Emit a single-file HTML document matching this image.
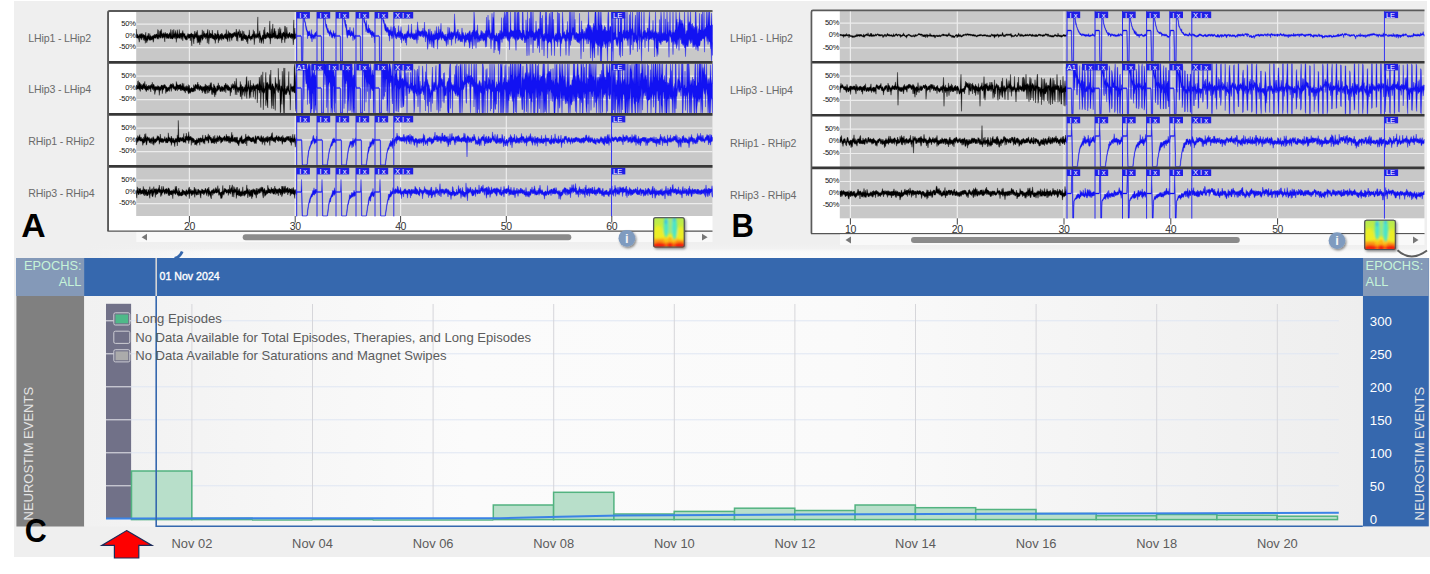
<!DOCTYPE html>
<html><head><meta charset="utf-8"><title>ECoG</title>
<style>
html,body{margin:0;padding:0;background:#fff;}
body{width:1430px;height:574px;position:relative;overflow:hidden;font-family:"Liberation Sans",sans-serif;}
#bg{position:absolute;left:14px;top:1px;width:1413px;height:257px;background:#efefef;}
#bg2{position:absolute;left:14px;top:258px;width:1415.5px;height:299px;background:#efefef;}
#strip{position:absolute;left:14px;top:244px;width:1413px;height:14px;background:linear-gradient(to bottom,#efefef 0%,#f1f1f1 30%,#f9f9f9 55%,#fbfbfb 100%);}
#stripl{position:absolute;left:14px;top:244px;width:200px;height:14px;background:linear-gradient(to right,#efefef 0%,#efefef 35%,rgba(239,239,239,0) 100%);}
svg{position:absolute;left:0;top:0;}
.kb{fill:#000;stroke:#000;stroke-width:0.35;stroke-linejoin:round}
.bl{fill:#1212f2;stroke:#1212f2;stroke-width:0.35;stroke-linejoin:round}
.ml{stroke:#2a2af0;stroke-width:1}
.gl{stroke:#ececec;stroke-width:1.2}
.dv{stroke:#383838;stroke-width:2.6}
.mb{fill:#1f1fe6}
.mt{font-size:7.5px;fill:#fff;font-family:"Liberation Sans",sans-serif}
.yl{font-size:7.5px;fill:#111;font-family:"Liberation Sans",sans-serif;letter-spacing:-0.25px}
.tl{font-size:10.5px;fill:#333;font-family:"Liberation Sans",sans-serif;letter-spacing:-0.4px}
.ch{font-size:10.6px;fill:#6a6a6a;font-family:"Liberation Sans",sans-serif;letter-spacing:-0.15px}
.lg{font-size:13.1px;fill:#5c5c5c;font-family:"Liberation Sans",sans-serif}
.xl{font-size:12.9px;fill:#5c5c5c;font-family:"Liberation Sans",sans-serif}
.big{font-size:33.5px;font-weight:bold;fill:#000;font-family:"Liberation Sans",sans-serif}
.ep{font-size:12.8px;fill:#c6f3d8;font-family:"Liberation Sans",sans-serif}
.ax{font-size:13.2px;fill:#fff;font-family:"Liberation Sans",sans-serif}
.ne{font-size:13px;fill:#e4e4e4;font-family:"Liberation Sans",sans-serif}
.dt{font-size:10.6px;fill:#fff;stroke:#fff;stroke-width:0.35px;font-family:"Liberation Sans",sans-serif}
</style></head><body>
<div id="bg"></div><div id="bg2"></div><div id="strip"></div><div id="stripl"></div>
<svg width="1430" height="574" viewBox="0 0 1430 574">
<defs>
<linearGradient id="sp" x1="0" y1="0" x2="0" y2="1"><stop offset="0" stop-color="#b2ea52"/><stop offset="0.4" stop-color="#cfee38"/><stop offset="0.62" stop-color="#f4ec20"/><stop offset="0.8" stop-color="#fbb818"/><stop offset="0.93" stop-color="#f66410"/><stop offset="1" stop-color="#f0a018"/></linearGradient>
<linearGradient id="sp2" x1="0" y1="0" x2="0" y2="1"><stop offset="0" stop-color="#4fe0c8"/><stop offset="0.5" stop-color="#7fe89a" stop-opacity="0.9"/><stop offset="0.8" stop-color="#f6e61e" stop-opacity="0"/></linearGradient>
<clipPath id="spc"><rect x="654" y="218" width="30" height="29" rx="1.8"/></clipPath>
<filter id="bl" x="-20%" y="-20%" width="140%" height="140%"><feGaussianBlur stdDeviation="1.1"/></filter>
<filter id="sh" x="-30%" y="-30%" width="170%" height="170%"><feDropShadow dx="1.2" dy="1.5" stdDeviation="1" flood-color="#000" flood-opacity="0.45"/></filter>
</defs>
<!-- panel A -->
<rect x="108" y="11" width="604.5" height="220" fill="#fff"/>
<rect x="136.2" y="11" width="576.3" height="205" fill="#c8c8c8"/>
<path d="M136.3,24.2H712.5" class="gl"/>
<path d="M136.3,35.9H712.5" class="gl"/>
<path d="M136.3,47.6H712.5" class="gl"/>
<path d="M136.3,76.2H712.5" class="gl"/>
<path d="M136.3,87.9H712.5" class="gl"/>
<path d="M136.3,99.6H712.5" class="gl"/>
<path d="M136.3,128.2H712.5" class="gl"/>
<path d="M136.3,139.9H712.5" class="gl"/>
<path d="M136.3,151.6H712.5" class="gl"/>
<path d="M136.3,180.2H712.5" class="gl"/>
<path d="M136.3,191.9H712.5" class="gl"/>
<path d="M136.3,203.6H712.5" class="gl"/>
<path d="M189.4,11V216" class="gl"/>
<path d="M295.2,11V216" class="gl"/>
<path d="M400.6,11V216" class="gl"/>
<path d="M506.3,11V216" class="gl"/>
<path d="M611.8,11V216" class="gl"/>
<path d="M136.3,29.1L136.8,34.5L137.3,34.8L137.8,33.9L138.3,35.5L138.8,35.9L139.3,34.9L139.8,33.9L140.3,33.8L140.8,35.1L141.3,33.4L141.8,34.3L142.3,33.4L142.8,35.3L143.3,34.5L143.8,34.6L144.3,35.1L144.8,35.3L145.3,35.7L145.8,32.2L146.3,37.9L146.8,35.7L147.3,36.1L147.8,35.2L148.3,33.1L148.8,35.3L149.3,37.1L149.8,33.4L150.3,36.6L150.8,35.3L151.3,36.7L151.8,36.4L152.3,35.5L152.8,36.2L153.3,35.4L153.8,34.9L154.3,35.3L154.8,34L155.3,34.9L155.8,34.4L156.3,34L156.8,34.1L157.3,35.2L157.8,29.5L158.3,30.2L158.8,35.3L159.3,34.6L159.8,31.1L160.3,30.5L160.8,32.1L161.3,29.2L161.8,33L162.3,34.3L162.8,33.4L163.3,33.7L163.8,32.6L164.3,34.3L164.8,33.5L165.3,32.2L165.8,34L166.3,33.7L166.8,33.9L167.3,33.1L167.8,34.2L168.3,34.3L168.8,34.4L169.3,33.6L169.8,32.6L170.3,34L170.8,29.3L171.3,32.4L171.8,36.1L172.3,29.9L172.8,35.7L173.3,33.3L173.8,29.3L174.3,34.1L174.8,33.4L175.3,30.4L175.8,33.1L176.3,34.4L176.8,33.1L177.3,29.7L177.8,33.3L178.3,34.4L178.8,34.3L179.3,29.4L179.8,34.5L180.3,33L180.8,33.5L181.3,33.7L181.8,32.8L182.3,33L182.8,30.5L183.3,32.9L183.8,33.5L184.3,34.1L184.8,33.4L185.3,35.8L185.8,35.8L186.3,36.7L186.8,35.2L187.3,35.5L187.8,33.6L188.3,33.8L188.8,34.5L189.3,33.9L189.8,34.6L190.3,33.9L190.8,34L191.3,32.8L191.8,34.1L192.3,34.3L192.8,34L193.3,34L193.8,35.6L194.3,34.3L194.8,31L195.3,34.5L195.8,33.2L196.3,31.7L196.8,34.3L197.3,30.2L197.8,35.2L198.3,35.9L198.8,34.7L199.3,36.5L199.8,35L200.3,35.5L200.8,34.7L201.3,35.1L201.8,34.6L202.3,29.8L202.8,35.4L203.3,33.6L203.8,30.8L204.3,33.3L204.8,33.2L205.3,33.8L205.8,34.8L206.3,33L206.8,34.3L207.3,31.6L207.8,29.3L208.3,35L208.8,35.2L209.3,30.2L209.8,34.5L210.3,32.9L210.8,33.5L211.3,34.1L211.8,34.1L212.3,30L212.8,34.3L213.3,34.7L213.8,35.2L214.3,35.8L214.8,33L215.3,34.2L215.8,33.6L216.3,35.3L216.8,34.6L217.3,33.6L217.8,30.1L218.3,33.7L218.8,34.1L219.3,36.1L219.8,35.3L220.3,33.9L220.8,34.4L221.3,34.5L221.8,33L222.3,33.9L222.8,34.8L223.3,35.1L223.8,36.2L224.3,34.4L224.8,34L225.3,33.6L225.8,34.2L226.3,29.5L226.8,34.7L227.3,34.2L227.8,34.1L228.3,30.7L228.8,34.5L229.3,32.9L229.8,32.4L230.3,33.7L230.8,33.1L231.3,34L231.8,33.9L232.3,33.9L232.8,33.1L233.3,33.6L233.8,32.5L234.3,32.7L234.8,31.9L235.3,33.4L235.8,32.1L236.3,29L236.8,32.7L237.3,33.4L237.8,31.6L238.3,31.9L238.8,31.4L239.3,29.4L239.8,34.9L240.3,30.9L240.8,33.8L241.3,33.8L241.8,34.1L242.3,30.5L242.8,36.4L243.3,34.8L243.8,31.1L244.3,34.1L244.8,34.3L245.3,34.8L245.8,35.3L246.3,35L246.8,36L247.3,36.9L247.8,35.5L248.3,35.1L248.8,35.1L249.3,29.9L249.8,35L250.3,36.2L250.8,36.4L251.3,35.8L251.8,35.8L252.3,33.9L252.8,35.2L253.3,29.7L253.8,34.6L254.3,31.1L254.8,34.4L255.3,33.7L255.8,35.3L256.3,35.2L256.8,33.5L257.3,34.6L257.8,16.9L258.3,34.3L258.8,33.4L259.3,32.8L259.8,30.7L260.3,34.5L260.8,35.6L261.3,37.7L261.8,38.1L262.3,35.2L262.8,34.9L263.3,35.1L263.8,29.7L264.3,33.7L264.8,27L265.3,34.8L265.8,34.4L266.3,34.9L266.8,32.8L267.3,32.3L267.8,32.2L268.3,33.8L268.8,33.3L269.3,33.8L269.8,20.9L270.3,31.1L270.8,34.1L271.3,34.5L271.8,28.8L272.3,34.4L272.8,23.9L273.3,32.9L273.8,33L274.3,28.6L274.8,28.5L275.3,34.8L275.8,30.9L276.3,34.8L276.8,35.4L277.3,35.1L277.8,34.8L278.3,28.8L278.8,33.8L279.3,32.8L279.8,27.3L280.3,32.6L280.8,28.7L281.3,35.9L281.8,33L282.3,33.4L282.8,33.2L283.3,31.8L283.8,32.3L284.3,33.3L284.8,25.9L285.3,26.5L285.8,34L286.3,32.2L286.8,27.2L287.3,32.3L287.8,34.2L288.3,34L288.8,33.7L289.3,32.6L289.8,32.3L290.3,34.2L290.8,34.7L291.3,33.7L291.8,33.3L292.3,34.2L292.8,33.8L293.3,34.2L293.8,19.9L294.3,35.4L294.8,28L295.3,35L295.8,33.8L295.8,38L295.3,38.6L294.8,39.4L294.3,39.1L293.8,37.3L293.3,44.9L292.8,39.1L292.3,38L291.8,37.1L291.3,38.8L290.8,37.6L290.3,38.2L289.8,36.6L289.3,37L288.8,37.5L288.3,38.4L287.8,38.3L287.3,36.9L286.8,36L286.3,38.9L285.8,38.6L285.3,38.5L284.8,42.8L284.3,37L283.8,36.8L283.3,35.7L282.8,39.9L282.3,38L281.8,43.1L281.3,38.4L280.8,37.8L280.3,38.2L279.8,39.1L279.3,37.3L278.8,38.3L278.3,38.4L277.8,38.8L277.3,39.3L276.8,38.4L276.3,38.2L275.8,37.6L275.3,38.6L274.8,38.7L274.3,36.8L273.8,37.6L273.3,36.9L272.8,37.6L272.3,38.3L271.8,38.3L271.3,37.7L270.8,38.3L270.3,44.1L269.8,38L269.3,38.6L268.8,37.1L268.3,37.4L267.8,38L267.3,36.3L266.8,37.5L266.3,38.4L265.8,38.8L265.3,39.1L264.8,38.5L264.3,38.2L263.8,39.2L263.3,43.8L262.8,39.2L262.3,39.9L261.8,42L261.3,43.5L260.8,40.1L260.3,39L259.8,42.9L259.3,36.9L258.8,36.6L258.3,38.5L257.8,37.4L257.3,37.3L256.8,37.6L256.3,38L255.8,38.5L255.3,37L254.8,37.9L254.3,44.7L253.8,38.9L253.3,36.4L252.8,37.5L252.3,39.2L251.8,38.9L251.3,39.1L250.8,40.6L250.3,38.8L249.8,38.5L249.3,38.8L248.8,38L248.3,38.4L247.8,43.9L247.3,39.6L246.8,42.1L246.3,39.2L245.8,39.5L245.3,39.4L244.8,38.8L244.3,38.9L243.8,38.1L243.3,40.2L242.8,41L242.3,39L241.8,40.2L241.3,41.1L240.8,37.8L240.3,37L239.8,37.6L239.3,37.4L238.8,34.3L238.3,35.9L237.8,41.5L237.3,37L236.8,41L236.3,37.2L235.8,35.7L235.3,37.1L234.8,36L234.3,35.6L233.8,37L233.3,36.8L232.8,37.9L232.3,37.5L231.8,40.6L231.3,38L230.8,37.8L230.3,36.6L229.8,41.6L229.3,37.7L228.8,37.8L228.3,37.8L227.8,41.8L227.3,40.3L226.8,39.2L226.3,38.7L225.8,38.2L225.3,38.6L224.8,37.7L224.3,37.6L223.8,39.5L223.3,38.9L222.8,38.4L222.3,38.5L221.8,40.5L221.3,38.6L220.8,38.2L220.3,39.4L219.8,38.6L219.3,40.6L218.8,39.6L218.3,43.1L217.8,38.1L217.3,38.2L216.8,39.2L216.3,39.5L215.8,38.3L215.3,43.5L214.8,39L214.3,40.3L213.8,38.9L213.3,38.9L212.8,38.5L212.3,38.5L211.8,38.4L211.3,37.3L210.8,37.7L210.3,38.2L209.8,37.4L209.3,39L208.8,44.2L208.3,38.1L207.8,37.8L207.3,43.2L206.8,37.3L206.3,37.9L205.8,39.3L205.3,37.1L204.8,37.5L204.3,37.6L203.8,36.3L203.3,38.7L202.8,39.3L202.3,40.4L201.8,37.7L201.3,38.8L200.8,42.6L200.3,39.7L199.8,44.9L199.3,41L198.8,42.3L198.3,42.8L197.8,39.3L197.3,43.2L196.8,38.6L196.3,37.4L195.8,36.9L195.3,37.5L194.8,38.9L194.3,38.1L193.8,43.9L193.3,39.2L192.8,37.6L192.3,37.3L191.8,45.9L191.3,36.8L190.8,37.4L190.3,40.9L189.8,38L189.3,38.1L188.8,37.8L188.3,38.7L187.8,36.5L187.3,39.8L186.8,39.6L186.3,40.3L185.8,39.4L185.3,39.4L184.8,38.5L184.3,37.7L183.8,36.2L183.3,37L182.8,40.9L182.3,37.5L181.8,37L181.3,39.5L180.8,36.4L180.3,38.3L179.8,38.5L179.3,37.9L178.8,38.3L178.3,37.1L177.8,38.4L177.3,38.1L176.8,37.2L176.3,42.4L175.8,36.3L175.3,38.8L174.8,38.5L174.3,37L173.8,37.4L173.3,38.1L172.8,39L172.3,39L171.8,38.9L171.3,37.8L170.8,39L170.3,38.2L169.8,36.4L169.3,38.3L168.8,38.8L168.3,38.1L167.8,38.4L167.3,37.7L166.8,38.7L166.3,37.2L165.8,37.6L165.3,36.3L164.8,41.9L164.3,37.4L163.8,36.8L163.3,37.8L162.8,37.4L162.3,38.4L161.8,37.7L161.3,35.7L160.8,38.3L160.3,38L159.8,36.9L159.3,37.4L158.8,39.3L158.3,37.3L157.8,38.4L157.3,39.3L156.8,37.5L156.3,37.3L155.8,38.6L155.3,38L154.8,37.9L154.3,37.9L153.8,39.6L153.3,42.3L152.8,40.1L152.3,39.1L151.8,40.1L151.3,39.8L150.8,39.7L150.3,40.5L149.8,39.4L149.3,40.4L148.8,39L148.3,38.7L147.8,40.4L147.3,40.9L146.8,42.8L146.3,40.8L145.8,39.5L145.3,43.4L144.8,38.3L144.3,40.8L143.8,36.9L143.3,40.2L142.8,37.9L142.3,37.5L141.8,38.2L141.3,40.1L140.8,37.9L140.3,38.3L139.8,37L139.3,42.2L138.8,39.8L138.3,37.8L137.8,38.2L137.3,38.1L136.8,37.9L136.3,37.5Z" class="kb"/>
<path d="M296,33.6L296.5,35.1L297,35.4L297.5,35.4L298,35.4L298.5,35.4L299,35.4L299.5,35.4L300,35.4L300.5,35.4L301,35.4L301.5,36.4L302,60.9L302.5,60.9L303,12L303.5,12L304,12L304.5,17.3L305,20.7L305.5,22.3L306,25.3L306.5,26.9L307,29.5L307.5,30.6L308,31.6L308.5,31.7L309,31.6L309.5,30.7L310,32.7L310.5,34.2L311,34.7L311.5,29.5L312,35.7L312.5,34L313,34.4L313.5,35.3L314,34.9L314.5,33.9L315,32.7L315.5,32.5L316,32.6L316.5,31L317,35.4L317.5,35.4L318,35.4L318.5,35.4L319,35.4L319.5,35.4L320,35.4L320.5,35.4L321,35.4L321.5,36.4L322,60.9L322.5,60.9L323,60.9L323.5,12L324,12L324.5,13.2L325,17.6L325.5,20.7L326,24L326.5,24.1L327,26.1L327.5,29.1L328,28.3L328.5,30.7L329,30.5L329.5,31.9L330,32L330.5,29.7L331,31.8L331.5,32.6L332,32.9L332.5,35L333,33.3L333.5,30.5L334,32.9L334.5,33.8L335,33.2L335.5,32.8L336,35.4L336.5,35.4L337,35.4L337.5,35.4L338,35.4L338.5,35.4L339,35.4L339.5,35.4L340,35.4L340.5,36.4L341,60.9L341.5,60.9L342,60.9L342.5,12L343,12L343.5,13L344,16.7L344.5,19.4L345,22.3L345.5,20L346,25.5L346.5,24.3L347,29L347.5,30.9L348,30.2L348.5,30.1L349,29.9L349.5,30.7L350,27.1L350.5,32.5L351,32.4L351.5,30.7L352,31.1L352.5,32.8L353,32.7L353.5,27.6L354,33.3L354.5,36.4L355,35L355.5,34.9L356,35.4L356.5,35.4L357,35.4L357.5,35.4L358,35.4L358.5,35.4L359,35.4L359.5,35.4L360,35.4L360.5,36.4L361,60.9L361.5,60.9L362,60.9L362.5,12L363,12L363.5,13.2L364,17.4L364.5,19.4L365,21.7L365.5,22.4L366,24.9L366.5,20.4L367,27.2L367.5,29.8L368,28.4L368.5,24.6L369,30.1L369.5,28L370,29.3L370.5,30.9L371,30L371.5,32.2L372,31.6L372.5,31.2L373,31.5L373.5,32.7L374,33.1L374.5,32.4L375,35.4L375.5,35.4L376,35.4L376.5,35.4L377,35.4L377.5,35.4L378,35.4L378.5,35.4L379,35.4L379.5,36.4L380,60.9L380.5,60.9L381,60.9L381.5,12L382,12L382.5,13.6L383,17.7L383.5,19.9L384,20.1L384.5,22.8L385,25.8L385.5,23.6L386,25.3L386.5,26.9L387,28.7L387.5,27.2L388,27.2L388.5,29.3L389,29.9L389.5,30.6L390,29.4L390.5,31.6L391,26.5L391.5,32L392,30.8L392.5,31.7L393,26.9L393.5,26.5L394,26.7L394.5,26.3L395,32.1L395.5,28L396,33.9L396.5,34.2L397,32.4L397.5,32.6L398,31.7L398.5,25.6L399,32.9L399.5,31.8L400,30.6L400.5,32.2L401,26.5L401.5,31.7L402,33.6L402.5,33.1L403,34.5L403.5,36.7L404,34.2L404.5,34.3L405,33.7L405.5,34.7L406,33.4L406.5,34.1L407,31.7L407.5,30.7L408,32.7L408.5,24.7L409,32.5L409.5,33.7L410,34L410.5,33.7L411,31.8L411.5,23.9L412,33.6L412.5,34.3L413,32.7L413.5,34.2L414,34.6L414.5,33.5L415,33.7L415.5,33.5L416,29.7L416.5,33.4L417,31.9L417.5,21.8L418,26.9L418.5,30.8L419,30.4L419.5,31.5L420,31.6L420.5,32.1L421,31L421.5,31.8L422,30.4L422.5,31.3L423,28L423.5,32.3L424,30.6L424.5,22L425,32.7L425.5,30.6L426,30.9L426.5,32.1L427,32.3L427.5,34.9L428,34.3L428.5,29.3L429,29.5L429.5,34.7L430,28.7L430.5,35.9L431,33.8L431.5,31.1L432,33.4L432.5,35L433,35.4L433.5,33.6L434,34.7L434.5,34.7L435,30.4L435.5,33.4L436,33.5L436.5,26.5L437,32.9L437.5,33L438,34L438.5,26.4L439,32.2L439.5,32.6L440,29L440.5,31.2L441,23.2L441.5,34.3L442,31.6L442.5,31.7L443,32.7L443.5,33.8L444,35.3L444.5,34.6L445,36.5L445.5,34.1L446,36.5L446.5,36.9L447,33.8L447.5,34.8L448,26.9L448.5,34.2L449,32.1L449.5,27.6L450,33.5L450.5,33.4L451,31.6L451.5,31.8L452,32.7L452.5,32.4L453,33.3L453.5,32.3L454,30.4L454.5,13.8L455,22L455.5,31.6L456,33.9L456.5,32.1L457,31.7L457.5,30.7L458,29.1L458.5,32.6L459,34.7L459.5,32.2L460,35.3L460.5,34.3L461,36.2L461.5,34.1L462,27.9L462.5,33.4L463,32.2L463.5,33.5L464,35.3L464.5,35.4L465,35.8L465.5,32.5L466,35L466.5,35.1L467,33.8L467.5,32.8L468,34.3L468.5,33.3L469,31.8L469.5,31.2L470,30.5L470.5,33.8L471,35.6L471.5,33.1L472,32.1L472.5,32.1L473,30L473.5,30.2L474,12L474.5,18.1L475,30.1L475.5,32.6L476,31L476.5,30.2L477,32.2L477.5,24.8L478,33L478.5,34L479,36.7L479.5,35.2L480,35.1L480.5,34.4L481,30.3L481.5,31.1L482,33.5L482.5,31.4L483,35L483.5,32.9L484,32.9L484.5,33.6L485,34.2L485.5,30.6L486,32.3L486.5,17.1L487,30.1L487.5,30.8L488,15.1L488.5,29.8L489,19.8L489.5,29L490,30.7L490.5,34.5L491,32.7L491.5,32.5L492,13.3L492.5,31.3L493,17.2L493.5,19.2L494,12L494.5,34.7L495,34.9L495.5,36.1L496,35.2L496.5,32.9L497,34.4L497.5,36.5L498,35.5L498.5,33L499,33.5L499.5,33.5L500,30.3L500.5,30.9L501,35.1L501.5,17.6L502,31.3L502.5,31.7L503,33.6L503.5,18.8L504,16.9L504.5,12L505,30L505.5,16.2L506,12L506.5,12L507,32.8L507.5,12L508,12L508.5,33.5L509,31.5L509.5,33.1L510,31.8L510.5,12L511,29.1L511.5,30.5L512,30.3L512.5,31.3L513,30.7L513.5,30.7L514,31.5L514.5,12L515,32.1L515.5,12L516,30.8L516.5,29.3L517,12L517.5,13L518,31.3L518.5,12L519,12L519.5,29.7L520,29.9L520.5,31.2L521,32.8L521.5,33.2L522,33.1L522.5,12L523,12L523.5,29.7L524,30.2L524.5,33.8L525,35L525.5,35.9L526,19.8L526.5,31.2L527,29.8L527.5,12L528,32.3L528.5,31.6L529,31.2L529.5,18.3L530,31.9L530.5,12L531,32.4L531.5,12L532,30.5L532.5,31.2L533,12L533.5,32.7L534,32.3L534.5,34.3L535,31.8L535.5,32.4L536,20.9L536.5,30.6L537,30.4L537.5,32.3L538,29.7L538.5,28.6L539,29.1L539.5,28.7L540,12L540.5,12L541,29.8L541.5,18.1L542,31.8L542.5,15.3L543,35.9L543.5,34.6L544,33.7L544.5,33.4L545,36L545.5,12L546,19.8L546.5,12L547,33.2L547.5,34.6L548,24.6L548.5,34.4L549,16.9L549.5,13.3L550,36.6L550.5,21.3L551,12L551.5,35.2L552,12L552.5,12L553,32.3L553.5,19.3L554,34.2L554.5,37.7L555,34.7L555.5,35.2L556,32.9L556.5,34.3L557,34.1L557.5,12L558,33.2L558.5,12.8L559,34.7L559.5,13.3L560,32.8L560.5,33.6L561,35.9L561.5,37.6L562,34.6L562.5,12L563,20.3L563.5,32.9L564,32.3L564.5,31.5L565,34.7L565.5,34.6L566,35.1L566.5,29.7L567,34.1L567.5,21.4L568,31.6L568.5,33.2L569,31.9L569.5,12L570,31.3L570.5,12L571,32.1L571.5,33.2L572,12L572.5,29.4L573,27.1L573.5,28.4L574,12L574.5,30.9L575,19.3L575.5,34.7L576,32.3L576.5,32.5L577,33.6L577.5,33.6L578,33.7L578.5,33.9L579,33L579.5,13.2L580,32.6L580.5,32L581,34.4L581.5,20.8L582,32.5L582.5,29.1L583,29.7L583.5,33L584,33.8L584.5,31.2L585,34L585.5,31.5L586,27.5L586.5,28.6L587,29.7L587.5,24.6L588,25.8L588.5,12L589,24.6L589.5,25.1L590,27.5L590.5,25.5L591,29.2L591.5,30.4L592,27.3L592.5,33L593,28.8L593.5,23.3L594,26.2L594.5,25L595,12L595.5,12L596,12L596.5,24.6L597,30.6L597.5,29.6L598,12L598.5,12L599,24.5L599.5,25.9L600,12L600.5,29L601,12L601.5,25.2L602,24.8L602.5,30.4L603,30.8L603.5,29.2L604,29.2L604.5,25.5L605,27.6L605.5,27L606,31.9L606.5,30.3L607,31.3L607.5,30.5L608,12.4L608.5,12L609,30.4L609.5,30.3L610,26.3L610.5,26.4L611,27.1L611.5,29.7L612,30L612.5,12L613,33.2L613.5,31.9L614,12L614.5,33.1L615,31.4L615.5,14.7L616,32.5L616.5,38.5L617,37.1L617.5,38.6L618,18.2L618.5,12L619,31.5L619.5,32.1L620,32.1L620.5,15.1L621,12L621.5,12L622,34.2L622.5,34.1L623,30.8L623.5,29.8L624,32.8L624.5,12L625,12L625.5,33L626,30.3L626.5,30.9L627,12L627.5,31.6L628,29.8L628.5,32.3L629,31.7L629.5,14.6L630,30.7L630.5,12L631,30.9L631.5,28.8L632,29.1L632.5,12L633,28L633.5,32.3L634,33.4L634.5,32L635,19.4L635.5,15.1L636,35.7L636.5,34.1L637,12L637.5,37.3L638,12L638.5,31.7L639,12L639.5,12L640,28.3L640.5,31.1L641,35.1L641.5,12L642,36.8L642.5,34.9L643,31.6L643.5,31.5L644,12L644.5,31.1L645,30.1L645.5,31.3L646,32.9L646.5,32.5L647,32.4L647.5,28.1L648,28L648.5,32L649,17.9L649.5,12L650,32L650.5,31.1L651,30.3L651.5,33.1L652,29.5L652.5,32.5L653,20.3L653.5,31.9L654,33.2L654.5,31.5L655,31.9L655.5,12L656,30.7L656.5,32.7L657,32.9L657.5,34.5L658,31.8L658.5,32.8L659,34.4L659.5,19.5L660,36.6L660.5,22.6L661,12L661.5,18.9L662,34.7L662.5,32.7L663,34L663.5,31.4L664,12L664.5,33.8L665,31L665.5,18.9L666,33.9L666.5,34.3L667,12L667.5,30.9L668,21.8L668.5,33.8L669,30.8L669.5,29.2L670,12L670.5,31.5L671,30.4L671.5,35.2L672,32L672.5,33.4L673,12L673.5,32.7L674,31.8L674.5,33.2L675,30.2L675.5,28.9L676,12L676.5,21.9L677,19L677.5,30.6L678,22L678.5,27.6L679,22.7L679.5,12.2L680,21.2L680.5,19.5L681,24.4L681.5,21L682,20.1L682.5,23.7L683,23.3L683.5,26.3L684,29.1L684.5,12L685,27.2L685.5,34.3L686,33.7L686.5,30.9L687,30.3L687.5,30.4L688,12L688.5,24.9L689,21.5L689.5,21.9L690,23.4L690.5,12L691,28.2L691.5,23.9L692,26.3L692.5,23.2L693,28.9L693.5,26L694,30.1L694.5,27.2L695,28.7L695.5,12L696,12L696.5,29.1L697,26.1L697.5,32.7L698,33.7L698.5,29.4L699,27.9L699.5,13.3L700,30L700.5,30L701,30L701.5,14.1L702,31.6L702.5,12L703,30.9L703.5,28.7L704,12L704.5,29.6L705,29.1L705.5,27.5L706,26.8L706.5,12L707,26.6L707.5,23.7L708,12L708.5,23L709,12L709.5,12L710,26.1L710.5,25.4L711,24.7L711.5,13.2L712,25.2L712.5,24.9L712.5,55.4L712,42.5L711.5,60.9L711,48.6L710.5,48.6L710,42L709.5,41.2L709,42.3L708.5,38.2L708,44.6L707.5,37.4L707,41.5L706.5,37.4L706,36.1L705.5,36.5L705,38L704.5,52.2L704,39.2L703.5,38.8L703,38.5L702.5,38.7L702,39.4L701.5,40.7L701,40.9L700.5,39.9L700,44.8L699.5,46L699,46L698.5,45.4L698,51.1L697.5,47.3L697,47.1L696.5,45.2L696,49.7L695.5,44.8L695,44.6L694.5,45.9L694,46.9L693.5,44.3L693,47.6L692.5,43.3L692,39.1L691.5,42.8L691,40.1L690.5,43.8L690,41L689.5,40L689,39.1L688.5,43.1L688,46.8L687.5,44.9L687,47.1L686.5,44.4L686,46.1L685.5,56.7L685,45.7L684.5,47.9L684,42.9L683.5,45.2L683,45.5L682.5,43.9L682,43L681.5,43.7L681,37.8L680.5,40.2L680,37.2L679.5,39.6L679,50.5L678.5,40.4L678,39.1L677.5,44L677,46.1L676.5,48.6L676,42.1L675.5,44.4L675,41.9L674.5,40.4L674,44.7L673.5,40L673,54.7L672.5,41.8L672,41.6L671.5,42.5L671,38.5L670.5,36.6L670,37.1L669.5,35.2L669,57.3L668.5,40.6L668,41.1L667.5,42L667,41.6L666.5,43.1L666,41.1L665.5,40.2L665,39.9L664.5,40.5L664,41L663.5,40.4L663,39.4L662.5,41.6L662,41.8L661.5,40.2L661,44.8L660.5,43L660,42.7L659.5,42.7L659,40.7L658.5,41L658,54.6L657.5,50.4L657,56.5L656.5,48.4L656,48.2L655.5,38L655,38.8L654.5,57L654,40.1L653.5,40.3L653,38L652.5,37L652,40L651.5,38.3L651,38.3L650.5,39L650,39.5L649.5,39.3L649,40L648.5,51.7L648,35.3L647.5,38.7L647,38.2L646.5,41.1L646,38L645.5,37.3L645,48.1L644.5,36.8L644,39.7L643.5,39.2L643,38.2L642.5,40L642,43.3L641.5,60.9L641,42.7L640.5,38.5L640,36.5L639.5,49.3L639,34.9L638.5,40.3L638,40.1L637.5,51.8L637,43.7L636.5,43.1L636,41.4L635.5,39.4L635,38.9L634.5,42.2L634,41.8L633.5,41.2L633,50.1L632.5,36.2L632,34.2L631.5,45.1L631,37.4L630.5,52.8L630,54.9L629.5,36.9L629,39.5L628.5,37.7L628,45.8L627.5,39.6L627,40.8L626.5,38.2L626,38.4L625.5,38.2L625,37.9L624.5,40.4L624,37.6L623.5,37.4L623,39L622.5,56L622,42.5L621.5,41.9L621,41L620.5,57.3L620,42.1L619.5,55.4L619,39.1L618.5,40.9L618,43.8L617.5,46.5L617,42.2L616.5,45.4L616,41.5L615.5,38.7L615,39.5L614.5,39.3L614,40.2L613.5,40.6L613,60.9L612.5,38.4L612,51.5L611.5,42.1L611,40.7L610.5,43.4L610,41.2L609.5,40.9L609,46.9L608.5,41.9L608,41.7L607.5,60.9L607,48.6L606.5,43.3L606,43.7L605.5,48.3L605,44.2L604.5,44.2L604,41L603.5,41.9L603,47.7L602.5,45.6L602,46.3L601.5,60.9L601,60.9L600.5,60.9L600,42.9L599.5,46.6L599,46.2L598.5,44.8L598,55.5L597.5,44.3L597,45.2L596.5,42.7L596,43.6L595.5,40.6L595,44.2L594.5,57.9L594,53.4L593.5,46.2L593,48.4L592.5,60.9L592,52.3L591.5,44.7L591,41.9L590.5,58.2L590,42.6L589.5,40.1L589,39.8L588.5,43.9L588,38.8L587.5,38.4L587,44.1L586.5,39.7L586,39.3L585.5,38.6L585,40.6L584.5,37.3L584,39.7L583.5,51.9L583,38.4L582.5,38.6L582,38.8L581.5,41.5L581,59L580.5,41.2L580,39.9L579.5,43.5L579,41L578.5,42.6L578,42.7L577.5,41.8L577,41.8L576.5,40.6L576,37.7L575.5,40.1L575,39.6L574.5,37.3L574,39.6L573.5,35.8L573,34.6L572.5,35.4L572,38L571.5,40.8L571,39.1L570.5,45.5L570,39.2L569.5,45.1L569,55.8L568.5,41.6L568,38L567.5,38.8L567,41.4L566.5,39.5L566,55.3L565.5,42L565,41L564.5,39.6L564,37.4L563.5,38.1L563,39.1L562.5,38.1L562,40.7L561.5,43.7L561,42.6L560.5,56.3L560,41.1L559.5,38.8L559,42.3L558.5,38.7L558,40.5L557.5,46.8L557,39.9L556.5,42L556,39.9L555.5,40.7L555,40.4L554.5,55.8L554,43.4L553.5,39.7L553,37.5L552.5,39.4L552,38.7L551.5,55.5L551,44.2L550.5,42.2L550,42L549.5,41.3L549,42L548.5,43.2L548,42.5L547.5,58.2L547,40.7L546.5,40.8L546,38.1L545.5,38.9L545,41L544.5,41.5L544,56.1L543.5,41.3L543,41.5L542.5,39.6L542,49.8L541.5,37.3L541,37.8L540.5,38.9L540,33.6L539.5,52.7L539,41.6L538.5,46.2L538,43.7L537.5,48.3L537,36.8L536.5,38.7L536,38.1L535.5,40.7L535,39.7L534.5,40.8L534,40.4L533.5,39.8L533,53L532.5,36.8L532,37.5L531.5,37.6L531,44.7L530.5,36.3L530,37.7L529.5,35.5L529,55.5L528.5,39.2L528,38.6L527.5,39L527,55.9L526.5,43.1L526,38.8L525.5,42.8L525,39.6L524.5,43L524,37.8L523.5,36.9L523,38.6L522.5,40.7L522,39.5L521.5,40.2L521,37.5L520.5,38.8L520,36.2L519.5,37.8L519,38.9L518.5,39.6L518,38.9L517.5,40.5L517,38.7L516.5,37.2L516,50.4L515.5,41.3L515,39.1L514.5,39.3L514,37.5L513.5,37.3L513,38.8L512.5,36.2L512,36.6L511.5,37.2L511,36.1L510.5,38.4L510,38.9L509.5,49.8L509,37.9L508.5,41.4L508,39.9L507.5,40.3L507,38.3L506.5,35.7L506,38.6L505.5,36.8L505,36.2L504.5,36.1L504,39.1L503.5,36.8L503,39.2L502.5,37.7L502,42.7L501.5,38.5L501,39.9L500.5,38.2L500,50.1L499.5,54.4L499,42.2L498.5,50.8L498,50.3L497.5,42.9L497,41.1L496.5,41.3L496,40.7L495.5,41.3L495,50.1L494.5,41.8L494,53L493.5,38.1L493,37.7L492.5,40.4L492,38.2L491.5,40.7L491,49.1L490.5,40.7L490,37.4L489.5,38.8L489,34.2L488.5,37.4L488,37.1L487.5,36.6L487,38.1L486.5,46.8L486,39L485.5,47.2L485,40.9L484.5,40.1L484,39.9L483.5,41.4L483,39.7L482.5,38.2L482,40.7L481.5,38.8L481,37.8L480.5,41.1L480,40.6L479.5,40.5L479,42.4L478.5,41L478,38.6L477.5,42.5L477,38.3L476.5,38.8L476,48.3L475.5,40.2L475,38.6L474.5,39.8L474,45.8L473.5,37L473,36.5L472.5,49L472,44.9L471.5,39L471,41.9L470.5,39.9L470,47.6L469.5,48.3L469,43.1L468.5,41.7L468,39.7L467.5,39.8L467,39.7L466.5,40.3L466,42.7L465.5,41.6L465,41.8L464.5,46.5L464,39.3L463.5,38.9L463,38.2L462.5,42.3L462,40.1L461.5,41.9L461,40.1L460.5,42.1L460,41L459.5,39.3L459,39.7L458.5,39.4L458,41.2L457.5,34.9L457,38.2L456.5,37.9L456,39.1L455.5,43.5L455,35.6L454.5,35.6L454,36.4L453.5,37.3L453,39.4L452.5,38.5L452,40.1L451.5,45.5L451,36.5L450.5,40L450,38.9L449.5,39.8L449,38.2L448.5,38.8L448,44.7L447.5,40.3L447,39.5L446.5,46.3L446,43.1L445.5,41L445,40.5L444.5,40.9L444,39.9L443.5,38.3L443,38.7L442.5,37.5L442,37.9L441.5,40.3L441,38.2L440.5,36.5L440,38.6L439.5,38.1L439,40L438.5,39.1L438,41L437.5,49.2L437,39.2L436.5,39L436,39.1L435.5,39.7L435,40.2L434.5,39.5L434,48.3L433.5,47.1L433,42.6L432.5,40.1L432,47.3L431.5,43.2L431,39.7L430.5,40.6L430,44.4L429.5,42.6L429,40.6L428.5,38.2L428,47.4L427.5,49.4L427,38.7L426.5,37.2L426,36L425.5,42.1L425,36.6L424.5,36.6L424,35.2L423.5,37.7L423,35.8L422.5,37.1L422,33.6L421.5,36L421,36.6L420.5,36.1L420,36.7L419.5,35.3L419,36.1L418.5,35.1L418,40.1L417.5,35.4L417,43.6L416.5,38L416,40.2L415.5,38.6L415,39.5L414.5,39.6L414,40.1L413.5,39.5L413,37.9L412.5,39L412,37.9L411.5,36.8L411,36.9L410.5,38.6L410,38.4L409.5,36.7L409,36.6L408.5,36.5L408,37.9L407.5,37.9L407,36.6L406.5,45.4L406,38.8L405.5,43L405,39.1L404.5,38L404,40.5L403.5,40.5L403,38.6L402.5,38.3L402,39L401.5,43.2L401,35.8L400.5,39.7L400,36L399.5,37.5L399,37.9L398.5,37.2L398,35.8L397.5,37.4L397,36.3L396.5,39L396,38.7L395.5,37.4L395,35.6L394.5,34L394,37.2L393.5,36.1L393,38.1L392.5,34.9L392,39.2L391.5,35.9L391,36.3L390.5,34.4L390,34.8L389.5,41.2L389,34.2L388.5,36.2L388,31.9L387.5,31.4L387,32.8L386.5,31.5L386,31.4L385.5,30.9L385,30.1L384.5,27.5L384,24L383.5,23L383,21L382.5,18.1L382,13.8L381.5,60.9L381,60.9L380.5,60.9L380,60.9L379.5,60.9L379,36.4L378.5,36.4L378,36.4L377.5,36.4L377,36.4L376.5,36.4L376,36.4L375.5,36.4L375,36.4L374.5,43.1L374,37L373.5,36.9L373,35.4L372.5,35.4L372,37.9L371.5,36.6L371,34.5L370.5,34.5L370,33.6L369.5,31.7L369,33.3L368.5,32.9L368,31.8L367.5,33L367,30.9L366.5,29.3L366,31.9L365.5,27.4L365,24.7L364.5,22.3L364,22.8L363.5,17.4L363,13.2L362.5,60.9L362,60.9L361.5,60.9L361,60.9L360.5,60.9L360,36.4L359.5,36.4L359,36.4L358.5,36.4L358,36.4L357.5,36.4L357,36.4L356.5,36.4L356,36.4L355.5,38.3L355,39.3L354.5,39.4L354,37.4L353.5,36.1L353,40.8L352.5,35.5L352,35.9L351.5,35L351,36.2L350.5,36.6L350,36.2L349.5,34.8L349,34.9L348.5,35.5L348,34.2L347.5,38.3L347,37.1L346.5,33.7L346,28.5L345.5,27.2L345,25.6L344.5,22.3L344,20L343.5,16.7L343,13L342.5,60.9L342,60.9L341.5,60.9L341,60.9L340.5,60.9L340,36.4L339.5,36.4L339,36.4L338.5,36.4L338,36.4L337.5,36.4L337,36.4L336.5,36.4L336,36.4L335.5,36.7L335,36.7L334.5,38.6L334,36.6L333.5,35.9L333,36.5L332.5,38.3L332,37.1L331.5,37.5L331,34.8L330.5,33.2L330,36.5L329.5,35.8L329,33.5L328.5,33.5L328,32.3L327.5,32.7L327,30.2L326.5,28.8L326,27.4L325.5,25.4L325,20.7L324.5,17.6L324,13.2L323.5,60.9L323,60.9L322.5,60.9L322,60.9L321.5,60.9L321,36.4L320.5,36.4L320,36.4L319.5,36.4L319,36.4L318.5,36.4L318,36.4L317.5,36.4L317,36.4L316.5,35.7L316,36.6L315.5,36.3L315,39.2L314.5,36.9L314,37.8L313.5,39.3L313,37.6L312.5,37.4L312,42L311.5,38.1L311,38.6L310.5,38L310,35.6L309.5,35.6L309,35.8L308.5,35.9L308,36.1L307.5,38.8L307,32.3L306.5,30.7L306,29.6L305.5,26.2L305,22.9L304.5,21.9L304,17.3L303.5,12L303,60.9L302.5,60.9L302,60.9L301.5,60.9L301,36.4L300.5,36.4L300,36.4L299.5,36.4L299,36.4L298.5,36.4L298,36.4L297.5,36.4L297,36.4L296.5,37.4L296,37Z" class="bl"/>
<path d="M296.7,11.5V61.4" class="ml"/>
<path d="M317,11.5V61.4" class="ml"/>
<path d="M336,11.5V61.4" class="ml"/>
<path d="M356,11.5V61.4" class="ml"/>
<path d="M375,11.5V61.4" class="ml"/>
<path d="M393.8,11.5V61.4" class="ml"/>
<path d="M611.6,11.5V61.4" class="ml"/>
<path d="M136.3,85.4L136.8,85L137.3,86.4L137.8,81.1L138.3,80.7L138.8,86.3L139.3,82.1L139.8,82.8L140.3,83.6L140.8,84.6L141.3,86.3L141.8,84.2L142.3,85.1L142.8,85.6L143.3,83.4L143.8,83.7L144.3,84.9L144.8,81.4L145.3,85.6L145.8,86.2L146.3,84.3L146.8,87L147.3,86L147.8,86.3L148.3,86.2L148.8,85L149.3,85.5L149.8,86.6L150.3,85.3L150.8,85.5L151.3,84.1L151.8,85.7L152.3,82.2L152.8,86.1L153.3,84.5L153.8,84.1L154.3,85.6L154.8,87.1L155.3,87L155.8,86.2L156.3,86.9L156.8,86.5L157.3,87L157.8,85.4L158.3,86L158.8,86.6L159.3,86.6L159.8,87.2L160.3,86.7L160.8,86.5L161.3,85L161.8,85L162.3,86L162.8,85.3L163.3,84.8L163.8,85.9L164.3,84.7L164.8,84.4L165.3,85.1L165.8,86.6L166.3,86.7L166.8,86.8L167.3,87.4L167.8,87.8L168.3,87.3L168.8,86.9L169.3,87.3L169.8,85.2L170.3,84.7L170.8,83.7L171.3,84.8L171.8,84.1L172.3,85.6L172.8,83.3L173.3,84.1L173.8,85.1L174.3,86.6L174.8,86.8L175.3,86.3L175.8,87L176.3,81.5L176.8,83.2L177.3,85.1L177.8,84.7L178.3,85L178.8,85.2L179.3,84.7L179.8,85.1L180.3,83.9L180.8,85L181.3,86.2L181.8,85.4L182.3,82.9L182.8,85.6L183.3,86.7L183.8,83.4L184.3,87.4L184.8,86.7L185.3,87.4L185.8,86.2L186.3,85.6L186.8,87.4L187.3,86.1L187.8,88L188.3,84.5L188.8,87.7L189.3,85.2L189.8,88.2L190.3,89.1L190.8,88.1L191.3,87.4L191.8,87.6L192.3,87.9L192.8,88.2L193.3,87.9L193.8,84.6L194.3,87L194.8,86.1L195.3,84.6L195.8,84.3L196.3,85.7L196.8,84.8L197.3,84.6L197.8,82L198.3,86.6L198.8,84.1L199.3,86.7L199.8,86.4L200.3,85.2L200.8,85.8L201.3,86.2L201.8,86.9L202.3,86.4L202.8,87.5L203.3,86.5L203.8,87.1L204.3,86.5L204.8,86.3L205.3,83.9L205.8,86.6L206.3,84.9L206.8,86.7L207.3,86L207.8,85.7L208.3,87.2L208.8,85.3L209.3,84.9L209.8,87.5L210.3,82.7L210.8,84.8L211.3,82.5L211.8,86.7L212.3,87L212.8,88.5L213.3,87.8L213.8,83.9L214.3,86.1L214.8,85.8L215.3,87.6L215.8,87.7L216.3,89.7L216.8,86.2L217.3,85.6L217.8,86.2L218.3,82.8L218.8,86.9L219.3,85L219.8,86.5L220.3,87.7L220.8,86.7L221.3,87.6L221.8,85.8L222.3,86.8L222.8,87.1L223.3,87.6L223.8,87.1L224.3,85L224.8,85.2L225.3,84.5L225.8,83L226.3,85L226.8,85.2L227.3,84.5L227.8,86.1L228.3,85.4L228.8,86.2L229.3,87.2L229.8,87.1L230.3,87.9L230.8,87.8L231.3,84.4L231.8,86.9L232.3,85.6L232.8,83.5L233.3,84.2L233.8,85.2L234.3,85.4L234.8,81.1L235.3,84.3L235.8,85.8L236.3,78.3L236.8,85.4L237.3,86.7L237.8,87.4L238.3,88.1L238.8,86.9L239.3,86.9L239.8,87.4L240.3,81.4L240.8,85.5L241.3,84.5L241.8,87L242.3,86.6L242.8,86.4L243.3,86.9L243.8,89.2L244.3,86.8L244.8,87.6L245.3,84.5L245.8,87.5L246.3,77.8L246.8,76.6L247.3,87.3L247.8,86.5L248.3,80.6L248.8,84.8L249.3,87.8L249.8,86.3L250.3,80.1L250.8,86.7L251.3,85.2L251.8,87.2L252.3,85.5L252.8,86.6L253.3,83.4L253.8,85.1L254.3,86.6L254.8,85.5L255.3,86.5L255.8,84.8L256.3,84.5L256.8,85.3L257.3,84.4L257.8,83.6L258.3,84.5L258.8,86.5L259.3,77.1L259.8,81.4L260.3,85.8L260.8,76.6L261.3,74.7L261.8,85L262.3,88.7L262.8,71.8L263.3,88.2L263.8,82.4L264.3,88.2L264.8,88.7L265.3,85L265.8,72.3L266.3,83.5L266.8,82.6L267.3,82.3L267.8,82.8L268.3,85.8L268.8,83.9L269.3,84.4L269.8,74.4L270.3,84.6L270.8,70L271.3,86.9L271.8,84.9L272.3,83.6L272.8,84.1L273.3,86.4L273.8,86.3L274.3,87.7L274.8,88.6L275.3,77.3L275.8,82.5L276.3,83.6L276.8,85L277.3,83.7L277.8,88.2L278.3,68.2L278.8,85.9L279.3,83.9L279.8,79.5L280.3,90.2L280.8,86.2L281.3,85.8L281.8,86.7L282.3,71.2L282.8,86.7L283.3,89.6L283.8,67.9L284.3,87.6L284.8,68L285.3,91L285.8,88.4L286.3,89.1L286.8,86.4L287.3,87.7L287.8,85.6L288.3,86.9L288.8,71.5L289.3,90.6L289.8,90.4L290.3,87.2L290.8,83.6L291.3,86.3L291.8,86.8L292.3,86.8L292.8,86.4L293.3,85.7L293.8,87.1L294.3,67.6L294.8,63.9L295.3,75L295.8,82.5L295.8,111.4L295.3,92.2L294.8,93.1L294.3,92.8L293.8,92.3L293.3,91.3L292.8,90.8L292.3,92.3L291.8,91.4L291.3,89.9L290.8,87.5L290.3,110.1L289.8,94.8L289.3,94.9L288.8,91.8L288.3,91.3L287.8,90.1L287.3,92.5L286.8,93.4L286.3,94.8L285.8,93.3L285.3,94.8L284.8,93.7L284.3,112.9L283.8,112.9L283.3,103.2L282.8,91.9L282.3,90.8L281.8,104.4L281.3,92.7L280.8,111.9L280.3,112.9L279.8,91.3L279.3,89.6L278.8,90.4L278.3,92.8L277.8,91.8L277.3,88.2L276.8,90.6L276.3,87.2L275.8,87.7L275.3,110.5L274.8,92.9L274.3,94L273.8,109.1L273.3,92L272.8,105.9L272.3,88.6L271.8,108.6L271.3,100.9L270.8,90.5L270.3,89.7L269.8,89.8L269.3,88.4L268.8,88.6L268.3,90.4L267.8,107.9L267.3,105.6L266.8,99.2L266.3,100.3L265.8,105.8L265.3,89.5L264.8,92.1L264.3,93.1L263.8,93.8L263.3,109.9L262.8,92.4L262.3,92.4L261.8,89.9L261.3,92.8L260.8,107.6L260.3,89.8L259.8,90.8L259.3,93.2L258.8,90.1L258.3,90L257.8,89.7L257.3,102.9L256.8,89.3L256.3,88.7L255.8,89L255.3,99.4L254.8,90.7L254.3,91.2L253.8,88.5L253.3,97.3L252.8,90.6L252.3,89.3L251.8,92L251.3,89.3L250.8,97.7L250.3,91.6L249.8,95.8L249.3,98.5L248.8,88.6L248.3,89.2L247.8,90.9L247.3,92.1L246.8,98.6L246.3,91.7L245.8,91.2L245.3,92.9L244.8,96.5L244.3,90.3L243.8,91.8L243.3,92.6L242.8,95.4L242.3,90.6L241.8,99.4L241.3,89.4L240.8,96.5L240.3,96.8L239.8,90.9L239.3,90.3L238.8,90.2L238.3,92.5L237.8,91.9L237.3,89.5L236.8,95L236.3,88.4L235.8,90.5L235.3,94.8L234.8,88.5L234.3,88.3L233.8,90.1L233.3,88L232.8,88.2L232.3,88L231.8,89.4L231.3,92.5L230.8,90.8L230.3,96.1L229.8,90.5L229.3,90.3L228.8,90.9L228.3,90L227.8,89.7L227.3,90.5L226.8,89L226.3,88.2L225.8,92.8L225.3,88.1L224.8,90L224.3,91.8L223.8,89.8L223.3,90.6L222.8,91.8L222.3,90.7L221.8,89.9L221.3,91.5L220.8,91.3L220.3,92L219.8,90.5L219.3,88.2L218.8,90.3L218.3,89.1L217.8,90.4L217.3,91.3L216.8,91L216.3,92.2L215.8,95.2L215.3,92.3L214.8,97.1L214.3,93.5L213.8,92.5L213.3,92.5L212.8,94.8L212.3,91.2L211.8,94.6L211.3,90.3L210.8,89.5L210.3,90.3L209.8,91L209.3,90.9L208.8,93.1L208.3,89.7L207.8,89.4L207.3,93.4L206.8,90.2L206.3,90.3L205.8,94L205.3,91L204.8,93.6L204.3,91.2L203.8,91.4L203.3,89.9L202.8,90.6L202.3,93.1L201.8,90.2L201.3,90.6L200.8,90.1L200.3,88.9L199.8,89.2L199.3,90.9L198.8,88.2L198.3,89.5L197.8,89.8L197.3,89.1L196.8,88.5L196.3,88.8L195.8,88.2L195.3,91.2L194.8,90.1L194.3,91.4L193.8,91L193.3,92L192.8,92L192.3,91.8L191.8,91.3L191.3,91.7L190.8,92.3L190.3,93.2L189.8,93.3L189.3,92.1L188.8,94.1L188.3,93.1L187.8,91.8L187.3,90.3L186.8,91L186.3,90.6L185.8,89.9L185.3,93.1L184.8,91.6L184.3,90.9L183.8,91.1L183.3,89.7L182.8,90.2L182.3,89.7L181.8,90.7L181.3,88.7L180.8,90.9L180.3,89.4L179.8,89L179.3,89.2L178.8,89.3L178.3,89.6L177.8,88.2L177.3,91.1L176.8,89.7L176.3,89L175.8,90.2L175.3,90.9L174.8,89.7L174.3,89.1L173.8,88.4L173.3,89.3L172.8,87.1L172.3,88.2L171.8,88.3L171.3,91.5L170.8,89.1L170.3,88.3L169.8,89.3L169.3,91.5L168.8,90.4L168.3,90.3L167.8,91.1L167.3,91.8L166.8,91.7L166.3,91.6L165.8,93.6L165.3,88.8L164.8,87.9L164.3,88.2L163.8,88.9L163.3,90L162.8,89.9L162.3,93.7L161.8,89.5L161.3,89L160.8,90.3L160.3,90.6L159.8,90.3L159.3,95.4L158.8,90.4L158.3,89.8L157.8,89.5L157.3,90.3L156.8,89.6L156.3,89.9L155.8,90.4L155.3,91.9L154.8,94.5L154.3,89.5L153.8,90.7L153.3,88.6L152.8,89.8L152.3,88.8L151.8,88.3L151.3,87.6L150.8,92L150.3,88.8L149.8,89.3L149.3,88.8L148.8,88.6L148.3,90.4L147.8,89.7L147.3,89.9L146.8,90.2L146.3,91.8L145.8,90.1L145.3,90.2L144.8,88.2L144.3,89.1L143.8,88.8L143.3,87.8L142.8,89.9L142.3,89.4L141.8,89.1L141.3,88.9L140.8,88.6L140.3,91.5L139.8,90.3L139.3,89.3L138.8,89.1L138.3,88.8L137.8,88.8L137.3,89.2L136.8,88.7L136.3,89.9Z" class="kb"/>
<path d="M296,78.8L296.5,73L297,87.4L297.5,87.4L298,87.4L298.5,87.4L299,87.4L299.5,87.4L300,87.4L300.5,87.4L301,87.4L301.5,88.4L302,112.9L302.5,112.9L303,63.8L303.5,63.8L304,63.8L304.5,63.8L305,63.8L305.5,63.8L306,64.6L306.5,69.3L307,68.6L307.5,69.8L308,65.3L308.5,63.8L309,67.2L309.5,63.8L310,66.1L310.5,79.6L311,64.7L311.5,77.5L312,74.8L312.5,63.8L313,74.6L313.5,72.6L314,75.7L314.5,64.6L315,77.3L315.5,75.1L316,74.7L316.5,70.3L317,87.1L317.5,87.4L318,87.4L318.5,87.4L319,87.4L319.5,87.4L320,87.4L320.5,87.4L321,87.4L321.5,88.4L322,112.9L322.5,112.9L323,112.9L323.5,63.8L324,63.8L324.5,63.8L325,63.8L325.5,63.8L326,64.9L326.5,65.4L327,64.8L327.5,67.3L328,63.8L328.5,69.4L329,69.2L329.5,71.4L330,69.3L330.5,65.5L331,69.1L331.5,63.8L332,71.3L332.5,67L333,72.7L333.5,68.2L334,71.4L334.5,77.4L335,75.3L335.5,66.1L336,87.4L336.5,87.4L337,87.4L337.5,87.4L338,87.4L338.5,87.4L339,87.4L339.5,87.4L340,87.4L340.5,88.4L341,112.9L341.5,112.9L342,112.9L342.5,63.8L343,63.8L343.5,63.8L344,63.8L344.5,63.8L345,66.7L345.5,71.4L346,68.5L346.5,63.8L347,66.8L347.5,70.4L348,70.2L348.5,72.4L349,63.8L349.5,65.3L350,68.9L350.5,63.8L351,63.8L351.5,70.2L352,67.5L352.5,78.4L353,75.5L353.5,74.8L354,78.1L354.5,63.8L355,63.8L355.5,73.4L356,85.5L356.5,87.4L357,87.4L357.5,87.4L358,87.4L358.5,87.4L359,87.4L359.5,87.4L360,87.4L360.5,88.4L361,112.9L361.5,112.9L362,112.9L362.5,63.8L363,63.8L363.5,63.8L364,63.8L364.5,63.8L365,68.5L365.5,63.8L366,67.2L366.5,68.9L367,68.5L367.5,68.8L368,63.8L368.5,68L369,69.7L369.5,67L370,70.6L370.5,63.8L371,67.7L371.5,75.8L372,74.1L372.5,70.1L373,74.9L373.5,75L374,63.8L374.5,63.8L375,87.4L375.5,87.4L376,87.4L376.5,87.4L377,87.4L377.5,87.4L378,87.4L378.5,87.4L379,87.4L379.5,88.4L380,112.9L380.5,112.9L381,112.9L381.5,63.8L382,63.8L382.5,63.8L383,63.8L383.5,63.8L384,63.8L384.5,63.8L385,63.8L385.5,64.5L386,67.9L386.5,63.8L387,66L387.5,63.8L388,69.1L388.5,71.8L389,63.8L389.5,63.8L390,63.8L390.5,66.7L391,69.5L391.5,76.2L392,74.9L392.5,63.8L393,78.1L393.5,76.2L394,78.9L394.5,75.1L395,63.8L395.5,74.1L396,73.4L396.5,63.8L397,74.1L397.5,79.7L398,79.2L398.5,81.2L399,80.8L399.5,72.2L400,66.4L400.5,78.3L401,69.1L401.5,79.5L402,78.8L402.5,78.3L403,78.4L403.5,79.8L404,80.9L404.5,66.3L405,63.8L405.5,81.1L406,72.7L406.5,79.1L407,82.7L407.5,81.8L408,72.1L408.5,82.7L409,86.7L409.5,84.4L410,87.1L410.5,72.3L411,83.1L411.5,82.8L412,69.8L412.5,64.4L413,84.8L413.5,86.1L414,85.5L414.5,69.4L415,83.7L415.5,85.2L416,70.3L416.5,79.3L417,90.4L417.5,69L418,75.2L418.5,77.6L419,65.7L419.5,87.7L420,81.1L420.5,86.8L421,89.4L421.5,85.7L422,85.6L422.5,65.9L423,70.1L423.5,86.6L424,86.6L424.5,81.6L425,82.4L425.5,71.7L426,80.4L426.5,63.8L427,81.9L427.5,79.4L428,82.6L428.5,84.4L429,84.8L429.5,87.3L430,89.5L430.5,93.5L431,90.5L431.5,89.6L432,74.4L432.5,67L433,86L433.5,83.5L434,81.8L434.5,82.7L435,83.8L435.5,72.8L436,65.5L436.5,82.9L437,88.1L437.5,85.7L438,84.3L438.5,79.9L439,64.5L439.5,63.8L440,63.8L440.5,63.8L441,80.6L441.5,78.4L442,78.8L442.5,79.9L443,82.7L443.5,73.1L444,83.3L444.5,72.5L445,87.5L445.5,85.9L446,88.7L446.5,87L447,82.4L447.5,81.3L448,81.3L448.5,78L449,80.7L449.5,68.5L450,63.8L450.5,63.8L451,81.7L451.5,83.2L452,85.1L452.5,85.5L453,84.3L453.5,86.3L454,84L454.5,74.4L455,86.4L455.5,65.8L456,77.7L456.5,66.4L457,63.8L457.5,87.3L458,76.5L458.5,65.9L459,87.1L459.5,87.4L460,65.7L460.5,63.8L461,68.2L461.5,83.2L462,63.8L462.5,80.2L463,80.5L463.5,82.4L464,81.7L464.5,63.8L465,76.7L465.5,77.7L466,63.8L466.5,80.2L467,73.8L467.5,76.4L468,76.4L468.5,74.5L469,63.8L469.5,75.6L470,76.6L470.5,75.3L471,78.7L471.5,63.8L472,77.2L472.5,77L473,78.1L473.5,80.7L474,63.8L474.5,82.6L475,63.8L475.5,83L476,81.3L476.5,63.8L477,85.2L477.5,83.6L478,85.8L478.5,84.2L479,82.3L479.5,80.4L480,81.3L480.5,86.3L481,82.5L481.5,86.1L482,86.2L482.5,63.8L483,63.8L483.5,68L484,88.8L484.5,80.7L485,81.2L485.5,81.6L486,69.5L486.5,80.7L487,68.5L487.5,84.4L488,84.3L488.5,77.4L489,78.9L489.5,79.9L490,63.8L490.5,78.7L491,84.9L491.5,82.3L492,63.8L492.5,80.2L493,79.7L493.5,83L494,63.8L494.5,68.6L495,86L495.5,88.3L496,86.4L496.5,81.7L497,85.9L497.5,84L498,83.7L498.5,63.8L499,83.3L499.5,82.3L500,80L500.5,64.4L501,63.8L501.5,68.2L502,63.8L502.5,85.8L503,82.4L503.5,81.7L504,77.4L504.5,78.6L505,65.4L505.5,84.5L506,63.8L506.5,81.6L507,82.3L507.5,82.7L508,79.5L508.5,81.4L509,66.5L509.5,82.8L510,75.9L510.5,63.8L511,63.8L511.5,75L512,74.8L512.5,63.8L513,63.8L513.5,80.6L514,78.6L514.5,63.8L515,77.2L515.5,63.8L516,76.1L516.5,78.2L517,63.8L517.5,74.8L518,77.3L518.5,63.8L519,74.8L519.5,69.9L520,63.8L520.5,63.8L521,63.8L521.5,88.4L522,78.7L522.5,75.5L523,65.9L523.5,80.5L524,78.4L524.5,79.8L525,74L525.5,72.6L526,75.8L526.5,63.8L527,63.8L527.5,71.6L528,77.9L528.5,74.6L529,72.4L529.5,77.2L530,63.8L530.5,75.1L531,63.8L531.5,76.7L532,81.3L532.5,63.8L533,63.8L533.5,75.7L534,73.3L534.5,78L535,76.9L535.5,63.8L536,63.8L536.5,81.2L537,77.1L537.5,65.5L538,77.5L538.5,63.8L539,81L539.5,79.7L540,74.9L540.5,79.3L541,76.6L541.5,76.6L542,76.6L542.5,73.7L543,63.8L543.5,63.8L544,74.8L544.5,63.8L545,78.7L545.5,78.5L546,84.2L546.5,79.1L547,73.4L547.5,73.8L548,63.8L548.5,72.7L549,71.1L549.5,71.5L550,72.9L550.5,71.4L551,68.9L551.5,80.5L552,79.7L552.5,83.1L553,68.4L553.5,79.7L554,81.8L554.5,85.5L555,63.8L555.5,78.6L556,79.1L556.5,65.2L557,63.8L557.5,82.8L558,82.6L558.5,85.1L559,77.3L559.5,63.8L560,71.1L560.5,76L561,63.8L561.5,78.9L562,75.8L562.5,63.8L563,70.6L563.5,81.7L564,75.7L564.5,80.5L565,63.8L565.5,79.4L566,87.3L566.5,86.9L567,80.6L567.5,63.8L568,82.8L568.5,74.9L569,63.8L569.5,86.9L570,85.2L570.5,84.9L571,84.6L571.5,86.3L572,80L572.5,79.7L573,77.2L573.5,63.8L574,63.8L574.5,63.8L575,75.4L575.5,80.8L576,75.5L576.5,81.7L577,69.5L577.5,63.8L578,63.8L578.5,75.5L579,74.7L579.5,81.2L580,78.3L580.5,82.6L581,63.8L581.5,68.3L582,63.8L582.5,82.8L583,80.5L583.5,63.8L584,76.8L584.5,67.2L585,83L585.5,83.4L586,63.8L586.5,63.8L587,85L587.5,77.7L588,79.2L588.5,78.5L589,63.8L589.5,63.8L590,75.6L590.5,63.8L591,75.4L591.5,72.6L592,63.8L592.5,75L593,77.7L593.5,75.4L594,63.8L594.5,81.1L595,79L595.5,71.2L596,63.8L596.5,88L597,77.7L597.5,81.8L598,76.7L598.5,81.9L599,77L599.5,79.1L600,74L600.5,74.7L601,78.9L601.5,70.3L602,79.1L602.5,63.8L603,63.8L603.5,63.8L604,73.9L604.5,77.1L605,77.6L605.5,77.2L606,80.6L606.5,66.8L607,63.8L607.5,68.3L608,72.9L608.5,72.7L609,72L609.5,63.8L610,66.6L610.5,74.6L611,77.8L611.5,79.4L612,63.8L612.5,84.9L613,63.8L613.5,78.7L614,71.4L614.5,80L615,63.8L615.5,79.1L616,85.4L616.5,83.8L617,79.8L617.5,81.2L618,63.8L618.5,63.8L619,63.8L619.5,85.6L620,63.8L620.5,76.7L621,81.9L621.5,84.4L622,79.6L622.5,63.8L623,78.4L623.5,81.9L624,79.9L624.5,78.2L625,63.8L625.5,77.1L626,85.3L626.5,81.6L627,63.8L627.5,81.6L628,63.8L628.5,84.1L629,84.7L629.5,76.9L630,64.7L630.5,68.3L631,69L631.5,72.4L632,63.8L632.5,80.9L633,78.3L633.5,82.9L634,63.8L634.5,66.9L635,84.9L635.5,63.8L636,63.8L636.5,63.8L637,63.8L637.5,63.8L638,83.1L638.5,63.8L639,87.5L639.5,63.8L640,81.6L640.5,74.7L641,72.9L641.5,73L642,63.8L642.5,71.2L643,63.8L643.5,76.4L644,80L644.5,75.1L645,63.8L645.5,77L646,74.9L646.5,78.7L647,80.1L647.5,63.8L648,88.9L648.5,65.3L649,87.8L649.5,85.2L650,79.2L650.5,69.7L651,83.8L651.5,63.8L652,83.2L652.5,79.2L653,63.8L653.5,63.8L654,76.4L654.5,77.8L655,63.8L655.5,63.8L656,63.8L656.5,78.8L657,71.9L657.5,63.8L658,80L658.5,80.8L659,63.8L659.5,63.8L660,78.9L660.5,76.7L661,63.8L661.5,76L662,73.3L662.5,63.8L663,78.4L663.5,79.9L664,80.6L664.5,75.4L665,82.2L665.5,81.8L666,65.5L666.5,63.8L667,85.7L667.5,82.5L668,82.7L668.5,83.1L669,85.2L669.5,78.3L670,81.7L670.5,64.1L671,69.9L671.5,71.6L672,86.2L672.5,63.8L673,92.2L673.5,86.5L674,88.9L674.5,85.1L675,82.4L675.5,63.8L676,63.8L676.5,87.1L677,88.9L677.5,81.7L678,78.6L678.5,79.7L679,63.8L679.5,79.3L680,81.4L680.5,83.4L681,86.9L681.5,63.8L682,78.8L682.5,63.8L683,63.8L683.5,88L684,84.8L684.5,85.5L685,71.1L685.5,88.1L686,88L686.5,85.8L687,63.8L687.5,63.8L688,82.9L688.5,63.8L689,63.8L689.5,74.3L690,85.2L690.5,84L691,80.2L691.5,84.5L692,80.5L692.5,77.1L693,86.6L693.5,79L694,81L694.5,81L695,63.8L695.5,63.8L696,85L696.5,85.8L697,86L697.5,63.8L698,81.8L698.5,83.3L699,63.8L699.5,63.8L700,72.7L700.5,63.8L701,63.8L701.5,82.9L702,63.8L702.5,72L703,67.5L703.5,73.3L704,67.6L704.5,63.8L705,75.2L705.5,74.4L706,78.8L706.5,63.8L707,77.8L707.5,81.1L708,84.6L708.5,80.1L709,78.4L709.5,84.2L710,77.1L710.5,64.7L711,78.8L711.5,82.1L712,83.9L712.5,63.8L712.5,112.9L712,97.9L711.5,99L711,100.8L710.5,112.9L710,96.6L709.5,112.9L709,112.9L708.5,98.7L708,112.9L707.5,96.9L707,93.6L706.5,89.2L706,89.7L705.5,107.1L705,89.8L704.5,94.3L704,92.4L703.5,87.5L703,92.3L702.5,112.9L702,109.3L701.5,96.8L701,112.9L700.5,96.8L700,99.4L699.5,99.2L699,102.4L698.5,98L698,100.5L697.5,102.6L697,107.1L696.5,112.9L696,112.9L695.5,99.4L695,97.1L694.5,112.9L694,112.9L693.5,96.8L693,97.5L692.5,91.9L692,98.7L691.5,112.9L691,93.8L690.5,112.9L690,97.2L689.5,112.9L689,96.1L688.5,91.3L688,93.7L687.5,112.9L687,94.4L686.5,95.9L686,97.2L685.5,110.5L685,92.6L684.5,96.2L684,94.4L683.5,98.8L683,112.9L682.5,112.9L682,88.1L681.5,88.5L681,96.3L680.5,90.6L680,90.1L679.5,92.1L679,92.6L678.5,90.3L678,86.9L677.5,91.1L677,96L676.5,97L676,108.8L675.5,95.7L675,112.9L674.5,96.5L674,112.9L673.5,95.7L673,100.5L672.5,112.9L672,98.2L671.5,99.5L671,96.4L670.5,97.6L670,99.4L669.5,94.1L669,112.9L668.5,99.1L668,98.4L667.5,101.2L667,112.9L666.5,112.9L666,112.9L665.5,94.8L665,112.9L664.5,99.5L664,98L663.5,92.3L663,92.1L662.5,112.9L662,105.1L661.5,106.6L661,112.9L660.5,96.4L660,94.3L659.5,112.9L659,97.5L658.5,100.6L658,101L657.5,92.4L657,90.5L656.5,96.9L656,112.9L655.5,112.9L655,94.5L654.5,95.2L654,97.5L653.5,107.3L653,95.7L652.5,93.3L652,96.4L651.5,99.1L651,112.9L650.5,96L650,99.8L649.5,99L649,100.1L648.5,100.3L648,100.3L647.5,112.9L647,97.1L646.5,99.6L646,90.9L645.5,95.4L645,96.1L644.5,92.5L644,93.1L643.5,95.8L643,99L642.5,110.2L642,87.9L641.5,93L641,112.9L640.5,94.7L640,98.2L639.5,102.1L639,112.9L638.5,102.4L638,103.1L637.5,112.9L637,96.7L636.5,101.9L636,99.9L635.5,112.9L635,112.9L634.5,104.7L634,103.2L633.5,97.1L633,97.7L632.5,112.9L632,96.3L631.5,112.9L631,104.4L630.5,87.5L630,97.9L629.5,101.2L629,112.9L628.5,104.9L628,98.3L627.5,112.9L627,112.9L626.5,99.3L626,112.9L625.5,112.9L625,112.9L624.5,100.1L624,95L623.5,93.7L623,95.8L622.5,109.9L622,98L621.5,112.9L621,100.8L620.5,95.9L620,112.9L619.5,100.8L619,112.9L618.5,102.8L618,107.3L617.5,112.9L617,95.6L616.5,99.3L616,100.4L615.5,112.9L615,94.9L614.5,112.9L614,90.5L613.5,110.2L613,94.1L612.5,112.9L612,112.9L611.5,93.3L611,95.1L610.5,93.6L610,99.5L609.5,99L609,95.6L608.5,95.3L608,86.8L607.5,111.3L607,91.6L606.5,112.9L606,97.6L605.5,93.4L605,93L604.5,95.1L604,93.4L603.5,97.5L603,93.2L602.5,111.2L602,112.9L601.5,88L601,90.2L600.5,112.9L600,91.7L599.5,99.4L599,112.9L598.5,98.7L598,96.1L597.5,98.4L597,101.6L596.5,112.9L596,100.4L595.5,102.6L595,94L594.5,100.4L594,107.5L593.5,90.8L593,92.1L592.5,97L592,95.5L591.5,93.1L591,110.4L590.5,91.2L590,92L589.5,91.5L589,112.9L588.5,90.7L588,104.3L587.5,90.8L587,112.9L586.5,111.2L586,106.5L585.5,94.2L585,93.4L584.5,97.9L584,91.6L583.5,95.6L583,112.9L582.5,112.9L582,97L581.5,102.8L581,98.8L580.5,101.1L580,112.9L579.5,98.6L579,98L578.5,98.1L578,92.3L577.5,97.1L577,96.3L576.5,112.9L576,98.9L575.5,111.6L575,96.3L574.5,98.2L574,101.4L573.5,99.1L573,93.7L572.5,101.5L572,101.8L571.5,105.2L571,102.7L570.5,104.9L570,112.9L569.5,104.9L569,96L568.5,112.9L568,100.7L567.5,101.3L567,103.7L566.5,102L566,98.9L565.5,104.1L565,101.1L564.5,98.4L564,94.8L563.5,97.8L563,101L562.5,94.4L562,112.9L561.5,98.8L561,98.2L560.5,90.5L560,105.8L559.5,108.3L559,96.2L558.5,103.1L558,112.9L557.5,99.9L557,99L556.5,95.8L556,98.8L555.5,102L555,112.9L554.5,112.9L554,112.9L553.5,95.3L553,97.7L552.5,101.6L552,92.8L551.5,92.7L551,100.7L550.5,89.3L550,90.5L549.5,92.4L549,112.9L548.5,95.8L548,88.6L547.5,94.4L547,90.9L546.5,112.9L546,98.9L545.5,108.9L545,111.9L544.5,100.6L544,112.9L543.5,94.6L543,112.9L542.5,93.8L542,91.3L541.5,91.9L541,112.9L540.5,96.4L540,94.8L539.5,108.8L539,92.1L538.5,99.9L538,112.9L537.5,112.9L537,96.3L536.5,97.6L536,87.8L535.5,97.1L535,112.9L534.5,112.9L534,90.9L533.5,112.9L533,92.5L532.5,94.7L532,102.2L531.5,100.5L531,112.9L530.5,98.8L530,98L529.5,98.7L529,93.6L528.5,92.3L528,112.9L527.5,91.6L527,103.3L526.5,111.8L526,92.4L525.5,89L525,90.2L524.5,110.5L524,112.9L523.5,96.4L523,97.4L522.5,109.4L522,109.8L521.5,98.9L521,95L520.5,96.3L520,97.9L519.5,87.6L519,93.5L518.5,94.3L518,97.2L517.5,94.6L517,93.1L516.5,112.9L516,90.9L515.5,112.1L515,99.1L514.5,96.2L514,112.9L513.5,112.9L513,96.7L512.5,101.5L512,98.1L511.5,94.1L511,90.8L510.5,96.5L510,94.3L509.5,94.2L509,100.8L508.5,99.8L508,112.9L507.5,95.9L507,112.9L506.5,94.7L506,112.9L505.5,93L505,89L504.5,90.3L504,107.4L503.5,112.9L503,93L502.5,112.9L502,93.8L501.5,112.9L501,94.2L500.5,112.9L500,89.9L499.5,92.4L499,91.7L498.5,112.9L498,91.4L497.5,91L497,91.3L496.5,104.3L496,98.5L495.5,109.5L495,108.4L494.5,99.3L494,112.9L493.5,112.9L493,91.6L492.5,91.5L492,92.3L491.5,109L491,91.3L490.5,111.2L490,88.5L489.5,89.4L489,89L488.5,88.1L488,94.1L487.5,112.9L487,87.8L486.5,91L486,88.1L485.5,90.3L485,112.9L484.5,92.2L484,96.1L483.5,112.9L483,93.5L482.5,112.9L482,112.9L481.5,93.8L481,93L480.5,92.5L480,91L479.5,112.9L479,90.4L478.5,109.6L478,93.4L477.5,112.9L477,112.9L476.5,92.1L476,112.9L475.5,92.7L475,99.8L474.5,90.8L474,107L473.5,89.2L473,85.7L472.5,86.6L472,84.3L471.5,84.8L471,89.5L470.5,112.8L470,99.3L469.5,82L469,82.5L468.5,84.2L468,82.3L467.5,82.9L467,81.4L466.5,103.4L466,102.3L465.5,84.1L465,84.4L464.5,85.5L464,88.6L463.5,89.7L463,87.8L462.5,103.8L462,112.9L461.5,90.4L461,89.5L460.5,112.9L460,94.3L459.5,112.9L459,95.5L458.5,94.4L458,96.8L457.5,95.9L457,94.6L456.5,91.8L456,95.9L455.5,94.3L455,93.7L454.5,92.3L454,91.3L453.5,90.9L453,90.1L452.5,112.9L452,91.5L451.5,88.3L451,90.3L450.5,108.5L450,92.7L449.5,91.6L449,112.9L448.5,112.9L448,112.9L447.5,109.7L447,87.2L446.5,93.1L446,96.2L445.5,94.5L445,95.4L444.5,96.4L444,103.2L443.5,89.5L443,101.6L442.5,87.7L442,86.3L441.5,85.1L441,107.8L440.5,84.6L440,111.3L439.5,87.3L439,88.2L438.5,112.9L438,102.2L437.5,92.1L437,110.2L436.5,89.1L436,89.9L435.5,86.5L435,91.9L434.5,89.8L434,90.7L433.5,90.9L433,92.6L432.5,103.5L432,94.1L431.5,96.8L431,111.9L430.5,99.1L430,96.7L429.5,102L429,93.5L428.5,112.9L428,89.5L427.5,106.2L427,102.8L426.5,84.8L426,87.7L425.5,111L425,89.1L424.5,100L424,91.7L423.5,95.1L423,92.1L422.5,91.3L422,89.9L421.5,92.9L421,94L420.5,93.7L420,112.7L419.5,92.9L419,95.4L418.5,91.6L418,106.9L417.5,90.4L417,96.4L416.5,93.8L416,93.9L415.5,92.2L415,92L414.5,108.5L414,112.8L413.5,93.1L413,93.4L412.5,89.3L412,91.3L411.5,89.9L411,89.3L410.5,88.1L410,92.1L409.5,92.5L409,94L408.5,87.8L408,88.4L407.5,88.3L407,112.9L406.5,87L406,95.9L405.5,86.8L405,85.2L404.5,88.3L404,104L403.5,106.6L403,107L402.5,95L402,107.8L401.5,83.9L401,107.5L400.5,87.6L400,88.4L399.5,90.5L399,107.4L398.5,112.1L398,87.2L397.5,91L397,111.6L396.5,96.9L396,111.1L395.5,86L395,84.7L394.5,92.4L394,112.9L393.5,89.4L393,88.5L392.5,104L392,100.6L391.5,86.4L391,80.7L390.5,83L390,82.5L389.5,112.9L389,81.8L388.5,86.9L388,112.9L387.5,102.4L387,111L386.5,79L386,79.4L385.5,92.1L385,77.7L384.5,96.6L384,94.3L383.5,99.6L383,76.4L382.5,99.4L382,67L381.5,112.9L381,112.9L380.5,112.9L380,112.9L379.5,112.9L379,88.4L378.5,88.4L378,88.4L377.5,88.4L377,88.4L376.5,88.4L376,88.4L375.5,88.4L375,88.4L374.5,89.8L374,112.5L373.5,112.9L373,89.5L372.5,91L372,88.8L371.5,89.4L371,87.7L370.5,98.9L370,84.9L369.5,83.7L369,112.9L368.5,82.4L368,84.5L367.5,91.7L367,81.3L366.5,84L366,102.3L365.5,76.6L365,80.4L364.5,111L364,77.8L363.5,69.4L363,73L362.5,112.9L362,112.9L361.5,112.9L361,112.9L360.5,112.9L360,88.4L359.5,88.4L359,88.4L358.5,88.4L358,88.4L357.5,88.4L357,88.4L356.5,88.4L356,88.4L355.5,85.5L355,87.5L354.5,112.9L354,106.9L353.5,112.9L353,110.4L352.5,88.3L352,112.7L351.5,100.3L351,85.4L350.5,110.4L350,100.2L349.5,86.5L349,110.9L348.5,98.3L348,102.1L347.5,112.9L347,80.4L346.5,81.2L346,84.1L345.5,82.9L345,103.7L344.5,77.3L344,108.6L343.5,72.4L343,81.5L342.5,112.9L342,112.9L341.5,112.9L341,112.9L340.5,112.9L340,88.4L339.5,88.4L339,88.4L338.5,88.4L338,88.4L337.5,88.4L337,88.4L336.5,88.4L336,88.4L335.5,103.4L335,90.5L334.5,112.4L334,107.8L333.5,86.1L333,86.7L332.5,112.9L332,108.5L331.5,107.6L331,112.9L330.5,95.1L330,83.4L329.5,81.7L329,83.6L328.5,86.3L328,112.9L327.5,99.3L327,76.7L326.5,107.7L326,76.6L325.5,75.1L325,84.8L324.5,73.1L324,74.5L323.5,112.9L323,112.9L322.5,112.9L322,112.9L321.5,112.9L321,88.4L320.5,88.4L320,88.4L319.5,88.4L319,88.4L318.5,88.4L318,88.4L317.5,88.4L317,88.4L316.5,87.1L316,110.5L315.5,105.8L315,104.7L314.5,112.9L314,88.1L313.5,112.9L313,93L312.5,94.6L312,109L311.5,108.9L311,112.9L310.5,112.9L310,92.7L309.5,103.7L309,87.5L308.5,90.3L308,87.3L307.5,104.6L307,85.1L306.5,83L306,83.9L305.5,78.7L305,69.8L304.5,67.8L304,99.6L303.5,69L303,112.9L302.5,112.9L302,112.9L301.5,112.9L301,88.4L300.5,88.4L300,88.4L299.5,88.4L299,88.4L298.5,88.4L298,88.4L297.5,88.4L297,88.4L296.5,88.1L296,109.1Z" class="bl"/>
<path d="M296.7,63.3V113.4" class="ml"/>
<path d="M317,63.3V113.4" class="ml"/>
<path d="M336,63.3V113.4" class="ml"/>
<path d="M356,63.3V113.4" class="ml"/>
<path d="M375,63.3V113.4" class="ml"/>
<path d="M393.8,63.3V113.4" class="ml"/>
<path d="M611.6,63.3V113.4" class="ml"/>
<path d="M136.3,138.3L136.8,137.5L137.3,138.7L137.8,135.6L138.3,136.8L138.8,137.5L139.3,136.3L139.8,134.6L140.3,138.4L140.8,137L141.3,137.2L141.8,138.9L142.3,138.5L142.8,138.8L143.3,139.3L143.8,136.9L144.3,138.4L144.8,133.9L145.3,137.1L145.8,133.5L146.3,137.6L146.8,138.1L147.3,136.6L147.8,137.3L148.3,137.6L148.8,138.2L149.3,137.4L149.8,139L150.3,139.3L150.8,138.4L151.3,139.1L151.8,137.7L152.3,137.6L152.8,139.9L153.3,136.5L153.8,137.8L154.3,139.1L154.8,139.2L155.3,139.1L155.8,138.7L156.3,138.4L156.8,137.7L157.3,135.6L157.8,136.7L158.3,136.3L158.8,136.4L159.3,137.6L159.8,138.6L160.3,134L160.8,138.9L161.3,137.9L161.8,139.1L162.3,138.7L162.8,138.3L163.3,139.4L163.8,138.8L164.3,138.9L164.8,136.5L165.3,138.4L165.8,139.3L166.3,138.1L166.8,137.5L167.3,138.9L167.8,138.6L168.3,132.8L168.8,137L169.3,137.3L169.8,138L170.3,138.8L170.8,137.9L171.3,136L171.8,137.8L172.3,138L172.8,139.4L173.3,139.2L173.8,137.9L174.3,140.3L174.8,140L175.3,138.8L175.8,138.2L176.3,138.5L176.8,138.9L177.3,134.9L177.8,137.9L178.3,120.4L178.8,137.1L179.3,137.6L179.8,138.3L180.3,137.2L180.8,138L181.3,138.5L181.8,137.4L182.3,137L182.8,137.9L183.3,138.1L183.8,133.4L184.3,138.7L184.8,139.2L185.3,136.1L185.8,137.4L186.3,133L186.8,136.6L187.3,136.5L187.8,136.8L188.3,135.4L188.8,131.6L189.3,136.7L189.8,136.7L190.3,137.1L190.8,136L191.3,137.9L191.8,137.3L192.3,137.7L192.8,138.2L193.3,138.5L193.8,138.6L194.3,139.2L194.8,140.4L195.3,139.9L195.8,140.3L196.3,140.1L196.8,138.4L197.3,139.9L197.8,139.6L198.3,137.8L198.8,138.6L199.3,138.7L199.8,137.9L200.3,137.7L200.8,138L201.3,138.1L201.8,138.9L202.3,138L202.8,134.9L203.3,139.1L203.8,138.9L204.3,138.8L204.8,138.3L205.3,135.1L205.8,137L206.3,137L206.8,137.2L207.3,137.2L207.8,136.1L208.3,133.8L208.8,136.9L209.3,136L209.8,135.3L210.3,137.6L210.8,137.1L211.3,137.6L211.8,138.7L212.3,138.8L212.8,138.6L213.3,136.2L213.8,138.4L214.3,139.1L214.8,135.3L215.3,138.8L215.8,138.5L216.3,138.2L216.8,137.8L217.3,135.5L217.8,138.1L218.3,137.3L218.8,137L219.3,135.6L219.8,135.7L220.3,137.3L220.8,137.1L221.3,138L221.8,137.6L222.3,138.5L222.8,137.6L223.3,137.5L223.8,137.2L224.3,135.9L224.8,136L225.3,137.4L225.8,138.1L226.3,134.2L226.8,136L227.3,137L227.8,136.1L228.3,137.4L228.8,135.9L229.3,136.3L229.8,137.7L230.3,137.9L230.8,137.5L231.3,135.9L231.8,132.2L232.3,136.9L232.8,134.7L233.3,138.4L233.8,138.4L234.3,137.3L234.8,137.6L235.3,137.1L235.8,138.4L236.3,136.9L236.8,138.6L237.3,136.9L237.8,140.1L238.3,141L238.8,139.8L239.3,139.4L239.8,137.7L240.3,137.6L240.8,138L241.3,136.2L241.8,135.6L242.3,139.1L242.8,139.9L243.3,139.3L243.8,139.5L244.3,139L244.8,138.5L245.3,137.7L245.8,133.9L246.3,137.3L246.8,137L247.3,136.9L247.8,136.6L248.3,135.5L248.8,136.9L249.3,136.7L249.8,136.9L250.3,137.5L250.8,138L251.3,137.9L251.8,138.3L252.3,137.2L252.8,137.9L253.3,136.7L253.8,137.7L254.3,139.4L254.8,139.1L255.3,135.8L255.8,135.8L256.3,138L256.8,137.7L257.3,136.1L257.8,136.4L258.3,136.7L258.8,135.8L259.3,137.6L259.8,138.3L260.3,138.6L260.8,136.4L261.3,135.4L261.8,137.1L262.3,138.3L262.8,137.2L263.3,136.3L263.8,138.6L264.3,138.1L264.8,138.4L265.3,137.3L265.8,138.5L266.3,138L266.8,136.6L267.3,138.3L267.8,135.9L268.3,138.6L268.8,137.1L269.3,137.3L269.8,137L270.3,137.3L270.8,136.2L271.3,135.6L271.8,133.3L272.3,132.6L272.8,137.1L273.3,138.2L273.8,137.6L274.3,138.4L274.8,137L275.3,136.9L275.8,137.4L276.3,136.2L276.8,135.3L277.3,137.7L277.8,137.1L278.3,137L278.8,135.8L279.3,137.5L279.8,136.8L280.3,138.2L280.8,137.3L281.3,136.6L281.8,136.9L282.3,138.4L282.8,135.3L283.3,137.8L283.8,137.4L284.3,138.5L284.8,137.7L285.3,137.6L285.8,137.7L286.3,137.6L286.8,136.2L287.3,136.8L287.8,136.4L288.3,136.6L288.8,136.5L289.3,136.2L289.8,138.8L290.3,138L290.8,135.8L291.3,138.1L291.8,137.9L292.3,138.6L292.8,134.2L293.3,137.9L293.8,139.1L294.3,137.6L294.8,134.3L295.3,139.2L295.8,138.9L295.8,142L295.3,147.2L294.8,143.6L294.3,141L293.8,142.6L293.3,142L292.8,141.3L292.3,142.4L291.8,141.2L291.3,145.5L290.8,142.5L290.3,142.5L289.8,142L289.3,140.2L288.8,141L288.3,140.2L287.8,139.5L287.3,140.5L286.8,140.2L286.3,140.4L285.8,142L285.3,141.7L284.8,142.3L284.3,142L283.8,140.9L283.3,141.7L282.8,142.4L282.3,144.4L281.8,142.1L281.3,140.3L280.8,140.9L280.3,141.1L279.8,140.7L279.3,140.3L278.8,141.8L278.3,140.5L277.8,141L277.3,140.8L276.8,139.2L276.3,139.9L275.8,140.8L275.3,142.9L274.8,141.2L274.3,141.8L273.8,141.7L273.3,140.9L272.8,140.8L272.3,140.8L271.8,139.2L271.3,141.1L270.8,139.9L270.3,140.8L269.8,145.6L269.3,140.3L268.8,140.7L268.3,141.2L267.8,142.4L267.3,142.5L266.8,141.3L266.3,141.3L265.8,142L265.3,140.6L264.8,145.4L264.3,141.1L263.8,141.5L263.3,142.4L262.8,141.5L262.3,144.5L261.8,141.7L261.3,141.5L260.8,141.7L260.3,141.3L259.8,140.7L259.3,140.6L258.8,140L258.3,139.1L257.8,138.6L257.3,139.8L256.8,140.5L256.3,143.6L255.8,143.5L255.3,142.4L254.8,143.8L254.3,142.5L253.8,142.3L253.3,141.1L252.8,141.7L252.3,140.9L251.8,142L251.3,142L250.8,141.8L250.3,141L249.8,140.7L249.3,140.2L248.8,141.2L248.3,139.6L247.8,140.9L247.3,140.1L246.8,145.9L246.3,140.5L245.8,141.2L245.3,144L244.8,142.5L244.3,142.3L243.8,143.1L243.3,143.7L242.8,143.4L242.3,143.7L241.8,142.1L241.3,143.5L240.8,141.8L240.3,140.9L239.8,141.9L239.3,143.6L238.8,145.9L238.3,144.8L237.8,144.1L237.3,143.7L236.8,142L236.3,142.7L235.8,141.5L235.3,142.5L234.8,142.2L234.3,141.2L233.8,141.3L233.3,141.2L232.8,142.2L232.3,141.1L231.8,141L231.3,142L230.8,141.3L230.3,143.2L229.8,143.2L229.3,141L228.8,142.8L228.3,140.7L227.8,141.1L227.3,141.2L226.8,140.7L226.3,141.5L225.8,141.4L225.3,140.2L224.8,140L224.3,141.4L223.8,140.5L223.3,139.6L222.8,141.6L222.3,141.4L221.8,141.9L221.3,142.7L220.8,143.3L220.3,140.2L219.8,139.3L219.3,141.3L218.8,139.9L218.3,141.7L217.8,141.9L217.3,141.3L216.8,141.3L216.3,143.7L215.8,141.3L215.3,142.5L214.8,141.9L214.3,143.9L213.8,143.3L213.3,142.4L212.8,142.7L212.3,142.8L211.8,142.9L211.3,143.3L210.8,141.1L210.3,140.6L209.8,139.5L209.3,138.7L208.8,142.7L208.3,143.3L207.8,140.2L207.3,140.8L206.8,141.2L206.3,139.7L205.8,140.6L205.3,139.5L204.8,144.2L204.3,142.3L203.8,142.2L203.3,143.5L202.8,141.6L202.3,141.2L201.8,142.4L201.3,141.7L200.8,142.1L200.3,141.5L199.8,145.3L199.3,141.3L198.8,142.4L198.3,142.5L197.8,143.2L197.3,142.8L196.8,145.5L196.3,143.7L195.8,144.4L195.3,144.6L194.8,145L194.3,141.7L193.8,142L193.3,142.4L192.8,143.2L192.3,141.5L191.8,140.4L191.3,145.4L190.8,139.8L190.3,140.2L189.8,140.1L189.3,141.1L188.8,143.7L188.3,140.4L187.8,140.4L187.3,140.5L186.8,140.2L186.3,139.9L185.8,143.3L185.3,141.4L184.8,142L184.3,142.3L183.8,142.3L183.3,142.4L182.8,141.5L182.3,140.7L181.8,141L181.3,141.3L180.8,140.2L180.3,141.5L179.8,141.9L179.3,142.3L178.8,142.1L178.3,141.7L177.8,141.2L177.3,146L176.8,142.2L176.3,142.1L175.8,142.2L175.3,142.2L174.8,146.7L174.3,144.1L173.8,142.2L173.3,142.9L172.8,141.9L172.3,142.4L171.8,143.9L171.3,145.5L170.8,141.4L170.3,142.6L169.8,141.2L169.3,140.9L168.8,141.3L168.3,141.3L167.8,142.9L167.3,142.9L166.8,142.2L166.3,142.9L165.8,143.1L165.3,141.4L164.8,140.7L164.3,141.3L163.8,141.7L163.3,142.6L162.8,142.8L162.3,141.5L161.8,142.7L161.3,141.8L160.8,142.2L160.3,141.5L159.8,142.4L159.3,144.3L158.8,140.5L158.3,140L157.8,140.7L157.3,140.1L156.8,141.2L156.3,142L155.8,142.1L155.3,143.2L154.8,141.7L154.3,143.2L153.8,145.3L153.3,142.8L152.8,144.4L152.3,140.9L151.8,141.5L151.3,143.5L150.8,143.5L150.3,142.1L149.8,142.8L149.3,142.7L148.8,141.1L148.3,140.6L147.8,140.5L147.3,141.3L146.8,144.4L146.3,145.2L145.8,142L145.3,140.9L144.8,141.7L144.3,143L143.8,143.1L143.3,143.5L142.8,145.4L142.3,142.5L141.8,141.3L141.3,140.9L140.8,141L140.3,141.2L139.8,140.4L139.3,140.3L138.8,141.5L138.3,139.9L137.8,141.2L137.3,142.5L136.8,142.3L136.3,145Z" class="kb"/>
<path d="M296,138.2L296.5,137.8L297,139.4L297.5,139.4L298,139.4L298.5,139.4L299,139.4L299.5,139.4L300,139.4L300.5,139.4L301,139.4L301.5,139.4L302,140.4L302.5,164.9L303,164.9L303.5,164.9L304,164.9L304.5,164.9L305,164.9L305.5,164.9L306,164.9L306.5,164.9L307,163.9L307.5,158.8L308,154.1L308.5,150.4L309,149.2L309.5,146.8L310,145.8L310.5,144.5L311,141.3L311.5,140.9L312,140.2L312.5,138.9L313,136.1L313.5,135.3L314,138.4L314.5,138.4L315,138.9L315.5,139.1L316,140.1L316.5,136.1L317,139.4L317.5,139.4L318,139.4L318.5,139.4L319,139.4L319.5,139.4L320,139.4L320.5,139.4L321,139.4L321.5,139.4L322,139.4L322.5,140.4L323,164.9L323.5,164.9L324,164.9L324.5,164.9L325,164.9L325.5,164.9L326,164.9L326.5,164.9L327,164.9L327.5,161.4L328,157.6L328.5,154.4L329,151.1L329.5,149.1L330,147.5L330.5,145.2L331,143.7L331.5,142.5L332,141.4L332.5,139L333,138.7L333.5,139L334,137.7L334.5,139.3L335,138.8L335.5,140.6L336,139.4L336.5,139.4L337,139.4L337.5,139.4L338,139.4L338.5,139.4L339,139.4L339.5,139.4L340,139.4L340.5,139.4L341,139.4L341.5,140.4L342,164.9L342.5,164.9L343,164.9L343.5,164.9L344,164.9L344.5,164.9L345,164.9L345.5,164.9L346,164.9L346.5,161.7L347,157.2L347.5,154L348,150.2L348.5,148.1L349,145.7L349.5,144.2L350,141.4L350.5,141.5L351,141.5L351.5,141.5L352,141.1L352.5,141L353,138.2L353.5,140.4L354,140.5L354.5,139.2L355,138.8L355.5,137.7L356,139.4L356.5,139.4L357,139.4L357.5,139.4L358,139.4L358.5,139.4L359,139.4L359.5,139.4L360,139.4L360.5,139.4L361,139.4L361.5,140.4L362,164.9L362.5,164.9L363,164.9L363.5,164.9L364,164.9L364.5,164.9L365,164.9L365.5,164.9L366,164.9L366.5,161.9L367,157.5L367.5,153.5L368,150.6L368.5,147.1L369,146.7L369.5,146L370,141.6L370.5,143.3L371,142L371.5,141.8L372,140.2L372.5,139L373,138.2L373.5,140L374,138.9L374.5,139.1L375,139.4L375.5,139.4L376,139.4L376.5,139.4L377,139.4L377.5,139.4L378,139.4L378.5,139.4L379,139.4L379.5,139.4L380,139.4L380.5,140.4L381,164.9L381.5,164.9L382,164.9L382.5,164.9L383,164.9L383.5,164.9L384,164.9L384.5,164.9L385,164.9L385.5,161.7L386,157.4L386.5,154.1L387,151.6L387.5,149.1L388,147.8L388.5,146.9L389,145.3L389.5,143.5L390,142.9L390.5,140.4L391,141.9L391.5,141.4L392,141L392.5,138.1L393,140.5L393.5,140.1L394,139.4L394.5,138.8L395,139L395.5,137.5L396,136.7L396.5,137.2L397,133L397.5,136.3L398,135.6L398.5,137.6L399,135.9L399.5,136.5L400,136.9L400.5,137.5L401,137.8L401.5,137.5L402,137.2L402.5,137L403,138.3L403.5,134.9L404,134.2L404.5,137.6L405,136.6L405.5,138.6L406,136.5L406.5,137.6L407,135.2L407.5,136.7L408,135.7L408.5,135L409,136L409.5,137.5L410,133.9L410.5,137.7L411,136L411.5,135.4L412,137L412.5,136.4L413,135.9L413.5,138.4L414,139.5L414.5,139.5L415,139.1L415.5,138.2L416,138.1L416.5,139.1L417,138.8L417.5,139.9L418,139.8L418.5,138.7L419,139.3L419.5,138.5L420,140.3L420.5,139.2L421,138L421.5,139.8L422,138.8L422.5,138.5L423,138L423.5,133.7L424,135.9L424.5,135.3L425,138.4L425.5,140.2L426,141L426.5,140.2L427,138.8L427.5,138.7L428,138.2L428.5,138.3L429,138.4L429.5,136.8L430,137.6L430.5,139.3L431,137.5L431.5,138.8L432,139L432.5,138.9L433,139.1L433.5,137.8L434,136.2L434.5,136.6L435,132.1L435.5,137.9L436,136.9L436.5,135.4L437,134.9L437.5,136L438,136.8L438.5,136.9L439,136.1L439.5,137.9L440,135.7L440.5,137.3L441,136.9L441.5,137.3L442,133L442.5,133L443,137.3L443.5,136.7L444,135.6L444.5,135.2L445,134.9L445.5,136.9L446,136.7L446.5,136.8L447,136.9L447.5,139L448,135.9L448.5,139.2L449,138.8L449.5,138.3L450,133.7L450.5,139L451,138L451.5,135.5L452,133.2L452.5,136.9L453,137.2L453.5,136.5L454,137.1L454.5,139.3L455,137.9L455.5,136.5L456,137L456.5,136.6L457,136.9L457.5,136.1L458,135.7L458.5,135.3L459,136.5L459.5,137.2L460,138L460.5,139.3L461,138.2L461.5,137.9L462,137.4L462.5,137.7L463,137.3L463.5,137.1L464,132.9L464.5,137.3L465,133.6L465.5,137.5L466,138.2L466.5,138.6L467,136.9L467.5,135.8L468,135.8L468.5,137.1L469,137.3L469.5,139.1L470,137.3L470.5,137.9L471,139.1L471.5,139.2L472,137.2L472.5,136.6L473,137.4L473.5,137.3L474,134L474.5,136.2L475,136.4L475.5,138.4L476,139.6L476.5,140L477,141.9L477.5,140.2L478,139.3L478.5,136.4L479,139.5L479.5,138.8L480,138.9L480.5,139.4L481,137.8L481.5,137.2L482,137.1L482.5,136.3L483,136.4L483.5,136.9L484,134.2L484.5,139.8L485,137.6L485.5,136.7L486,138.9L486.5,135.9L487,139.5L487.5,138.7L488,137.3L488.5,136.3L489,136.3L489.5,139.1L490,139.1L490.5,137.6L491,139.3L491.5,138.2L492,137.6L492.5,131.9L493,135.6L493.5,136L494,137.9L494.5,138.4L495,134.2L495.5,138.6L496,139.7L496.5,137.5L497,135.7L497.5,134.2L498,139.4L498.5,138.9L499,137.9L499.5,138.3L500,139.3L500.5,138L501,138L501.5,139.7L502,134.2L502.5,135.4L503,138.6L503.5,138.8L504,140.4L504.5,136.2L505,142.5L505.5,140.6L506,140L506.5,139.3L507,139L507.5,141L508,140.6L508.5,138.4L509,137.4L509.5,137.4L510,138.5L510.5,134.5L511,136L511.5,136.8L512,137L512.5,138.8L513,138.2L513.5,137.7L514,137.8L514.5,134.1L515,138.1L515.5,139.8L516,139.3L516.5,135.6L517,138.9L517.5,137.5L518,138.3L518.5,138.6L519,138L519.5,138.3L520,137.3L520.5,137.4L521,137.1L521.5,133.4L522,136.6L522.5,136.8L523,136L523.5,137L524,137.1L524.5,138.9L525,138.7L525.5,138.6L526,138.5L526.5,135.6L527,138.7L527.5,137.8L528,137.5L528.5,138.1L529,135.9L529.5,138.1L530,135.1L530.5,133.5L531,137.3L531.5,138.5L532,136.3L532.5,138L533,138.6L533.5,137.3L534,139.8L534.5,139.2L535,136.1L535.5,139L536,137.8L536.5,138.3L537,138.2L537.5,137.2L538,137L538.5,139L539,138.8L539.5,138.4L540,138.8L540.5,138.9L541,139L541.5,135.3L542,139.1L542.5,139.5L543,138.4L543.5,138.3L544,139.1L544.5,138.6L545,139L545.5,134.7L546,138.2L546.5,138.2L547,137.8L547.5,138.3L548,138.4L548.5,138.4L549,137.8L549.5,140.4L550,139.7L550.5,139.3L551,138.6L551.5,135.1L552,139.4L552.5,139L553,139.2L553.5,137.7L554,139L554.5,139.3L555,133.8L555.5,137.2L556,139.7L556.5,138.3L557,139.2L557.5,139.8L558,137.9L558.5,135.7L559,139L559.5,139.2L560,139L560.5,139L561,135.1L561.5,140.6L562,139.6L562.5,138.4L563,139.4L563.5,139L564,138L564.5,136.8L565,136L565.5,137.1L566,135.8L566.5,137L567,139L567.5,139.2L568,137.8L568.5,138.1L569,137.1L569.5,138.7L570,138.4L570.5,140L571,138.9L571.5,137.8L572,137.6L572.5,140L573,138.3L573.5,138.3L574,139.3L574.5,137.9L575,137.9L575.5,137.6L576,136.9L576.5,137.3L577,137.9L577.5,137.8L578,138.7L578.5,137.7L579,138.6L579.5,138.7L580,138.4L580.5,139.2L581,139.1L581.5,137.9L582,138.5L582.5,138.1L583,138.3L583.5,137.4L584,137.4L584.5,138L585,138.6L585.5,136.2L586,134.7L586.5,135.1L587,136.9L587.5,138.5L588,137.5L588.5,136.9L589,135.4L589.5,138.4L590,137.7L590.5,137.7L591,138.7L591.5,138.4L592,137.3L592.5,138.5L593,138.7L593.5,139.9L594,140.1L594.5,137.9L595,139.2L595.5,139.4L596,140.4L596.5,139.5L597,138L597.5,138.9L598,139.7L598.5,139.3L599,138.8L599.5,140.2L600,138.4L600.5,138L601,136.5L601.5,137.9L602,137.5L602.5,138.5L603,138.5L603.5,138.6L604,139.6L604.5,136.4L605,138.4L605.5,137.2L606,136.1L606.5,139.5L607,137.3L607.5,134.5L608,135.5L608.5,137.8L609,134.2L609.5,138.5L610,137.8L610.5,139.5L611,138L611.5,134L612,137.3L612.5,136.9L613,137.6L613.5,138L614,138.2L614.5,137.2L615,137L615.5,136.6L616,137.9L616.5,136.9L617,138.6L617.5,138.9L618,137.8L618.5,137.3L619,136.9L619.5,136.4L620,136.9L620.5,136.9L621,137.1L621.5,137.5L622,138.6L622.5,138.7L623,134.4L623.5,135.9L624,137.1L624.5,137.1L625,137.1L625.5,137.4L626,135.2L626.5,135.4L627,137.4L627.5,135.7L628,138.3L628.5,137.5L629,138.7L629.5,137L630,137.8L630.5,136.7L631,137.3L631.5,139.6L632,134.4L632.5,137.5L633,137.9L633.5,136.4L634,136.6L634.5,136.4L635,134.4L635.5,138.1L636,134.9L636.5,138.9L637,138.4L637.5,139.7L638,138.3L638.5,136.2L639,139.5L639.5,138.9L640,138.3L640.5,139.3L641,138.1L641.5,138.4L642,137.9L642.5,137.6L643,137.6L643.5,137.1L644,137.8L644.5,137.3L645,137.4L645.5,138.1L646,137.2L646.5,139.2L647,139.6L647.5,138.2L648,139.4L648.5,138.3L649,139L649.5,138.2L650,137.7L650.5,137.6L651,138.1L651.5,137.8L652,137.7L652.5,137.6L653,139.2L653.5,138.4L654,136.6L654.5,138.7L655,139.4L655.5,139.7L656,137L656.5,139.8L657,138.9L657.5,138.8L658,138.9L658.5,139.3L659,139L659.5,138.4L660,137.3L660.5,134.1L661,137.4L661.5,136.5L662,138.5L662.5,139L663,136.7L663.5,138.3L664,139.8L664.5,135.9L665,137.4L665.5,139.2L666,139L666.5,139.7L667,140.4L667.5,134.8L668,138.6L668.5,138.6L669,138.2L669.5,137.5L670,138.7L670.5,134.9L671,139.4L671.5,138.3L672,138.9L672.5,137.4L673,138.8L673.5,136.2L674,136.2L674.5,136.7L675,136L675.5,136.9L676,134.4L676.5,138.7L677,135.5L677.5,138.7L678,140.1L678.5,139.9L679,137L679.5,139.8L680,138.9L680.5,137.9L681,139.8L681.5,139.3L682,138.2L682.5,136L683,137.3L683.5,135.3L684,137.7L684.5,139.1L685,137.5L685.5,138.1L686,138.4L686.5,138.3L687,139.2L687.5,139.2L688,140.1L688.5,138.9L689,136.5L689.5,138.3L690,138.6L690.5,137.3L691,137.3L691.5,134.4L692,137.1L692.5,137.6L693,137.9L693.5,138L694,139.9L694.5,138.6L695,138.4L695.5,140.5L696,139.6L696.5,137.3L697,138.3L697.5,133.4L698,137.1L698.5,135.9L699,135.4L699.5,136L700,138.1L700.5,133.2L701,137.3L701.5,137.3L702,135.3L702.5,138.5L703,135.2L703.5,138.6L704,139L704.5,139.6L705,137.8L705.5,137.3L706,136.8L706.5,136.3L707,134.4L707.5,135L708,136.3L708.5,135.4L709,135.3L709.5,139.3L710,134.1L710.5,139L711,135.1L711.5,134.9L712,136.9L712.5,137.5L712.5,140.3L712,141.8L711.5,141.4L711,141.3L710.5,145.2L710,141.5L709.5,143L709,142.4L708.5,144.9L708,140.4L707.5,139.8L707,141.1L706.5,139.9L706,139.4L705.5,141L705,141.2L704.5,143L704,141.2L703.5,141.1L703,141.2L702.5,140.7L702,142.2L701.5,141.3L701,140.6L700.5,141L700,140.6L699.5,140.1L699,139.6L698.5,139.7L698,141.9L697.5,141.8L697,143.8L696.5,142.1L696,143.5L695.5,144.1L695,142.3L694.5,142.8L694,143.5L693.5,141.1L693,144.5L692.5,141.4L692,141.9L691.5,141.1L691,140.8L690.5,141.8L690,141.8L689.5,144.3L689,147.8L688.5,143L688,143.4L687.5,143.1L687,143L686.5,142.3L686,141.4L685.5,142.5L685,142.7L684.5,141.7L684,143L683.5,140.6L683,141.3L682.5,143.2L682,142.5L681.5,141.5L681,147.3L680.5,143.1L680,146.7L679.5,143L679,142L678.5,147.5L678,142.7L677.5,143.3L677,142.2L676.5,142.1L676,141.8L675.5,141.3L675,139.7L674.5,140.3L674,140.1L673.5,141.1L673,141.6L672.5,140.7L672,141.5L671.5,141.6L671,142.5L670.5,141.8L670,142.1L669.5,141.4L669,142.4L668.5,141.3L668,141L667.5,146.1L667,142.9L666.5,142.9L666,141.9L665.5,142.7L665,143.2L664.5,142.2L664,143.3L663.5,141.9L663,140.8L662.5,145.8L662,141.2L661.5,141L661,139.6L660.5,141.7L660,145L659.5,142.5L659,144.7L658.5,142.5L658,143.3L657.5,143.4L657,141.9L656.5,146.6L656,143.6L655.5,143.3L655,142.9L654.5,143L654,142.1L653.5,142.6L653,143L652.5,141.2L652,141.4L651.5,141L651,141L650.5,141.5L650,139.9L649.5,142L649,142.6L648.5,143.1L648,142L647.5,145.5L647,143.4L646.5,142.6L646,145.8L645.5,142L645,140.7L644.5,142.3L644,142L643.5,141.2L643,140.9L642.5,140.9L642,140.9L641.5,142.4L641,143.3L640.5,146.1L640,143.2L639.5,142.3L639,145.1L638.5,143.6L638,142.5L637.5,143.7L637,142.5L636.5,141.7L636,145.6L635.5,141.7L635,142.3L634.5,142.3L634,141.6L633.5,140.5L633,142.2L632.5,142.4L632,141.7L631.5,142.7L631,143.4L630.5,140.5L630,142L629.5,140.8L629,142.1L628.5,141.4L628,142.9L627.5,139.3L627,140.7L626.5,139L626,141.2L625.5,140.8L625,140.8L624.5,142.1L624,140.6L623.5,140.5L623,145L622.5,141.5L622,142.2L621.5,140.9L621,140.5L620.5,140.8L620,141.3L619.5,141.2L619,140.5L618.5,140.9L618,141.8L617.5,142.1L617,142.1L616.5,141L616,140.3L615.5,139.4L615,140.2L614.5,139.9L614,141.4L613.5,141.5L613,140.8L612.5,141L612,140.8L611.5,140.7L611,143.2L610.5,142.3L610,141.3L609.5,141.1L609,145.6L608.5,141.9L608,143.9L607.5,143.2L607,143.4L606.5,143.4L606,143.5L605.5,142.1L605,142.2L604.5,145.6L604,143.8L603.5,144.4L603,143.9L602.5,141.7L602,142.9L601.5,141.6L601,140.8L600.5,141.7L600,142.5L599.5,143.6L599,142.5L598.5,142.9L598,143.2L597.5,142.1L597,141.4L596.5,141.7L596,144.7L595.5,143.7L595,143.9L594.5,143.2L594,143.3L593.5,143L593,142.7L592.5,142.3L592,140.8L591.5,141.4L591,141.9L590.5,142.2L590,142.8L589.5,140.9L589,141.6L588.5,142.7L588,141.5L587.5,141.4L587,140.6L586.5,140.1L586,141L585.5,141.1L585,141.1L584.5,142.6L584,141.9L583.5,143.4L583,141.8L582.5,142.4L582,141.4L581.5,142.9L581,143.4L580.5,142.8L580,141.8L579.5,142.8L579,142.3L578.5,140.8L578,141.9L577.5,141.8L577,140.3L576.5,141.1L576,141.8L575.5,141.4L575,142L574.5,142.6L574,141.8L573.5,141.8L573,142.7L572.5,143.6L572,141.4L571.5,141.7L571,141.5L570.5,144.4L570,141.9L569.5,141.4L569,142.2L568.5,141.2L568,141.3L567.5,143.4L567,142.4L566.5,140.8L566,140.1L565.5,139.8L565,139.5L564.5,144L564,141.4L563.5,142.5L563,141.7L562.5,142.9L562,143.6L561.5,147.7L561,142.6L560.5,141.7L560,142.5L559.5,142.8L559,142.5L558.5,143.8L558,142.4L557.5,143.4L557,142.5L556.5,142.5L556,142.8L555.5,140.8L555,141.4L554.5,143.6L554,142.8L553.5,144L553,142.3L552.5,142.6L552,143.3L551.5,143.5L551,144.8L550.5,143.8L550,143.4L549.5,143.4L549,142.3L548.5,141.5L548,141.1L547.5,141.4L547,141.9L546.5,141L546,146.2L545.5,140.9L545,142.3L544.5,142L544,142.3L543.5,143.4L543,144L542.5,142.9L542,142.4L541.5,142.7L541,143L540.5,142L540,143.8L539.5,140.9L539,142.8L538.5,142.2L538,140.4L537.5,146.5L537,142.3L536.5,143.6L536,142.3L535.5,142.8L535,145.6L534.5,142.4L534,142.8L533.5,141.1L533,142.5L532.5,145.4L532,143.3L531.5,142.3L531,141.3L530.5,140.8L530,140.9L529.5,141.2L529,140.5L528.5,141.6L528,140.9L527.5,142.3L527,143L526.5,146.2L526,141.8L525.5,143L525,141.7L524.5,143.5L524,141.7L523.5,140.7L523,142.6L522.5,140.7L522,139.6L521.5,143L521,139.8L520.5,142.4L520,141.3L519.5,142.9L519,143.6L518.5,141.8L518,143.3L517.5,141.4L517,142.7L516.5,142.9L516,142.5L515.5,143.5L515,141.7L514.5,141.9L514,141.1L513.5,142L513,142L512.5,143.2L512,147.9L511.5,142.7L511,141.8L510.5,145.2L510,142.6L509.5,140.9L509,141.8L508.5,142.9L508,142.8L507.5,146.4L507,145.9L506.5,143.8L506,142.8L505.5,145.7L505,145.9L504.5,143L504,143.8L503.5,146.9L503,142.3L502.5,140.9L502,143.1L501.5,143.2L501,141.6L500.5,142.9L500,143.9L499.5,142.6L499,142.3L498.5,141.9L498,143.4L497.5,142.1L497,143.1L496.5,143.9L496,142.7L495.5,143.1L495,141.7L494.5,140.6L494,141.7L493.5,141L493,139.7L492.5,139.6L492,140.9L491.5,142L491,142.5L490.5,143.1L490,142.7L489.5,141.5L489,142.9L488.5,142.8L488,143.2L487.5,142.1L487,143.7L486.5,141.9L486,142.1L485.5,143.9L485,142.8L484.5,146L484,141L483.5,141.1L483,140.5L482.5,139.6L482,141.2L481.5,140L481,145.5L480.5,142.3L480,143.9L479.5,146.1L479,143.2L478.5,144.3L478,143.2L477.5,144.4L477,144.8L476.5,143.6L476,143.4L475.5,144.4L475,140.9L474.5,139.7L474,140.7L473.5,140.7L473,141.5L472.5,141.1L472,140.4L471.5,142.4L471,142.9L470.5,140.9L470,141.6L469.5,142.4L469,141.7L468.5,140.1L468,143L467.5,140.7L467,156.9L466.5,141.7L466,143.1L465.5,142.3L465,141.7L464.5,141.5L464,140.7L463.5,141.5L463,141.5L462.5,140.7L462,141.7L461.5,142.4L461,141.9L460.5,141.6L460,140.7L459.5,141.8L459,140.9L458.5,141L458,142L457.5,141.1L457,140.7L456.5,140.2L456,143.1L455.5,141.1L455,145.2L454.5,143.1L454,141.2L453.5,140.1L453,140.5L452.5,140.1L452,140.4L451.5,141.1L451,140.9L450.5,144.8L450,141.7L449.5,142.3L449,144.8L448.5,145.3L448,146.9L447.5,141.5L447,143.3L446.5,141.4L446,141.3L445.5,141.2L445,141.7L444.5,141.9L444,141L443.5,141.4L443,140.6L442.5,140.8L442,140.8L441.5,141L441,143.6L440.5,142.1L440,140.5L439.5,140.4L439,140.6L438.5,140.5L438,142L437.5,140.6L437,141.8L436.5,140.1L436,139.9L435.5,140.3L435,139.9L434.5,139.9L434,141.7L433.5,142.5L433,143.1L432.5,143.6L432,143.3L431.5,144.4L431,142.5L430.5,141.9L430,140.9L429.5,141.8L429,141.9L428.5,140.7L428,142.1L427.5,145.9L427,142.2L426.5,142.8L426,144.3L425.5,144.5L425,142.9L424.5,141.1L424,142.5L423.5,145.9L423,141.7L422.5,142.3L422,141.6L421.5,143.4L421,142.7L420.5,141.3L420,143.8L419.5,143.4L419,142.5L418.5,142.9L418,143.6L417.5,142.9L417,147.6L416.5,143.3L416,141.9L415.5,142.4L415,143.1L414.5,145.6L414,144.9L413.5,141.9L413,141.7L412.5,139.9L412,142.3L411.5,140.3L411,144.5L410.5,140.2L410,141.1L409.5,144.1L409,142L408.5,141.8L408,141.3L407.5,139.3L407,141.2L406.5,144.2L406,139.9L405.5,141.4L405,140.2L404.5,142.6L404,140.8L403.5,141.4L403,141.1L402.5,141.2L402,141.1L401.5,141.6L401,141L400.5,141.2L400,139.2L399.5,141.3L399,139.3L398.5,139.9L398,140.4L397.5,140.2L397,140.2L396.5,143.7L396,140.2L395.5,140.9L395,143.4L394.5,146.2L394,141.8L393.5,143.8L393,144.9L392.5,148.5L392,145L391.5,146.1L391,146.9L390.5,146.3L390,145.6L389.5,147L389,149.2L388.5,149.5L388,150.4L387.5,151.6L387,154.1L386.5,157.4L386,161.7L385.5,164.9L385,164.9L384.5,164.9L384,164.9L383.5,164.9L383,164.9L382.5,164.9L382,164.9L381.5,164.9L381,164.9L380.5,164.9L380,140.4L379.5,140.4L379,140.4L378.5,140.4L378,140.4L377.5,140.4L377,140.4L376.5,140.4L376,140.4L375.5,140.4L375,140.4L374.5,142L374,144.1L373.5,143.8L373,145.6L372.5,143.4L372,143.8L371.5,145.2L371,146.9L370.5,146.7L370,147.9L369.5,148.2L369,150.9L368.5,152.6L368,154.3L367.5,157.5L367,161.9L366.5,164.9L366,164.9L365.5,164.9L365,164.9L364.5,164.9L364,164.9L363.5,164.9L363,164.9L362.5,164.9L362,164.9L361.5,164.9L361,140.4L360.5,140.4L360,140.4L359.5,140.4L359,140.4L358.5,140.4L358,140.4L357.5,140.4L357,140.4L356.5,140.4L356,140.4L355.5,145.5L355,141.4L354.5,142.9L354,143.2L353.5,145.9L353,146.9L352.5,144L352,148L351.5,144.6L351,144.6L350.5,144.5L350,146.5L349.5,146.9L349,148.6L348.5,150.6L348,154L347.5,157.2L347,161.7L346.5,164.9L346,164.9L345.5,164.9L345,164.9L344.5,164.9L344,164.9L343.5,164.9L343,164.9L342.5,164.9L342,164.9L341.5,164.9L341,140.4L340.5,140.4L340,140.4L339.5,140.4L339,140.4L338.5,140.4L338,140.4L337.5,140.4L337,140.4L336.5,140.4L336,140.6L335.5,143.1L335,142.6L334.5,141.8L334,142.7L333.5,142.9L333,142.5L332.5,144.9L332,145.9L331.5,145.7L331,147L330.5,147.5L330,149.5L329.5,151.1L329,154.4L328.5,157.6L328,161.4L327.5,164.9L327,164.9L326.5,164.9L326,164.9L325.5,164.9L325,164.9L324.5,164.9L324,164.9L323.5,164.9L323,164.9L322.5,164.9L322,140.4L321.5,140.4L321,140.4L320.5,140.4L320,140.4L319.5,140.4L319,140.4L318.5,140.4L318,140.4L317.5,140.4L317,140.4L316.5,142.9L316,142.6L315.5,142.9L315,142.6L314.5,144.3L314,142.7L313.5,141.3L313,140.6L312.5,142.9L312,143.9L311.5,144.5L311,145.4L310.5,146.8L310,148.5L309.5,149.2L309,151.2L308.5,154.2L308,158.8L307.5,163.9L307,164.9L306.5,164.9L306,164.9L305.5,164.9L305,164.9L304.5,164.9L304,164.9L303.5,164.9L303,164.9L302.5,164.9L302,164.9L301.5,140.4L301,140.4L300.5,140.4L300,140.4L299.5,140.4L299,140.4L298.5,140.4L298,140.4L297.5,140.4L297,140.4L296.5,142.1L296,143.7Z" class="bl"/>
<path d="M296.7,115.3V165.4" class="ml"/>
<path d="M317,115.3V165.4" class="ml"/>
<path d="M336,115.3V165.4" class="ml"/>
<path d="M356,115.3V165.4" class="ml"/>
<path d="M375,115.3V165.4" class="ml"/>
<path d="M393.8,115.3V165.4" class="ml"/>
<path d="M611.6,115.3V165.4" class="ml"/>
<path d="M136.3,190.5L136.8,191L137.3,186.8L137.8,190.1L138.3,191.3L138.8,188.1L139.3,188.7L139.8,189.3L140.3,188.3L140.8,189.9L141.3,190.3L141.8,190.5L142.3,190L142.8,189.8L143.3,186.4L143.8,190.4L144.3,188.7L144.8,189.5L145.3,189.5L145.8,190.3L146.3,190.8L146.8,189L147.3,191.9L147.8,192.1L148.3,189.6L148.8,189.8L149.3,191.8L149.8,186.6L150.3,189.7L150.8,189.9L151.3,190.1L151.8,188.8L152.3,188.5L152.8,190.6L153.3,190.8L153.8,186.6L154.3,189.3L154.8,189L155.3,189.6L155.8,188.6L156.3,190.1L156.8,188.5L157.3,190.1L157.8,189.2L158.3,188.8L158.8,187.6L159.3,185L159.8,189.1L160.3,189.7L160.8,189.5L161.3,190.2L161.8,186.2L162.3,190L162.8,189.8L163.3,186.3L163.8,188.7L164.3,189.9L164.8,189.9L165.3,188.9L165.8,189L166.3,188.4L166.8,188.7L167.3,190.1L167.8,189L168.3,187.7L168.8,188.3L169.3,188.8L169.8,190.1L170.3,190.9L170.8,191.1L171.3,190.7L171.8,190.6L172.3,190.6L172.8,191.1L173.3,189.2L173.8,190.9L174.3,190.6L174.8,189.5L175.3,186.4L175.8,189.2L176.3,186L176.8,189L177.3,190.2L177.8,191.5L178.3,192.1L178.8,188.1L179.3,191.2L179.8,190.7L180.3,192.6L180.8,192.5L181.3,192L181.8,191.6L182.3,189.3L182.8,190.5L183.3,190.5L183.8,190.5L184.3,191.2L184.8,191L185.3,191.8L185.8,190.8L186.3,189.6L186.8,190.2L187.3,191.2L187.8,191.1L188.3,189.4L188.8,187.9L189.3,186.9L189.8,189.6L190.3,191.2L190.8,189L191.3,190.6L191.8,190.8L192.3,190.5L192.8,190.6L193.3,190.9L193.8,190.1L194.3,187L194.8,189.2L195.3,190.6L195.8,188.6L196.3,189.8L196.8,192L197.3,191.6L197.8,189.2L198.3,189L198.8,190L199.3,190.1L199.8,190.7L200.3,190.9L200.8,190.4L201.3,191.3L201.8,188.8L202.3,189.8L202.8,189.6L203.3,190.1L203.8,190.6L204.3,189.8L204.8,190.8L205.3,188L205.8,189.1L206.3,190.4L206.8,190L207.3,188.7L207.8,188.6L208.3,189.8L208.8,187L209.3,190.5L209.8,190.8L210.3,192.1L210.8,191.4L211.3,191.1L211.8,190.1L212.3,189.7L212.8,190.4L213.3,189.6L213.8,188.5L214.3,189.6L214.8,190.9L215.3,188.9L215.8,187.4L216.3,188.8L216.8,188.9L217.3,190.4L217.8,185.6L218.3,189.1L218.8,190.1L219.3,188.4L219.8,191.4L220.3,192.6L220.8,192.4L221.3,191.7L221.8,191.9L222.3,191L222.8,185.4L223.3,189.7L223.8,191.6L224.3,188.7L224.8,188.3L225.3,189L225.8,188.8L226.3,190L226.8,189.7L227.3,190.4L227.8,189.5L228.3,188.9L228.8,189.8L229.3,189.7L229.8,185L230.3,190.1L230.8,188.4L231.3,188L231.8,186.8L232.3,184.8L232.8,189.7L233.3,189.9L233.8,186.4L234.3,187.5L234.8,189.2L235.3,188.9L235.8,190.3L236.3,187.4L236.8,190.8L237.3,187L237.8,191.3L238.3,190.5L238.8,189.4L239.3,188.5L239.8,190.6L240.3,191.8L240.8,191.8L241.3,190.7L241.8,192.2L242.3,191.2L242.8,186.8L243.3,191.7L243.8,191.4L244.3,191.1L244.8,190.8L245.3,190.7L245.8,191.1L246.3,189.8L246.8,184.9L247.3,190L247.8,188.5L248.3,191.5L248.8,189.8L249.3,189.2L249.8,192.1L250.3,191.1L250.8,189.9L251.3,190.2L251.8,189.7L252.3,190.6L252.8,189.3L253.3,188.7L253.8,189.9L254.3,189.6L254.8,189.8L255.3,189.8L255.8,191.5L256.3,188L256.8,190.3L257.3,190.9L257.8,188.4L258.3,188.9L258.8,189.4L259.3,189.2L259.8,188.3L260.3,187.4L260.8,189.4L261.3,187.9L261.8,186.7L262.3,187.8L262.8,187.2L263.3,190.1L263.8,189.4L264.3,188.3L264.8,189.1L265.3,191.9L265.8,190.1L266.3,190.6L266.8,190.2L267.3,190.6L267.8,185.2L268.3,187.8L268.8,188.5L269.3,189.3L269.8,189.2L270.3,189.8L270.8,189.7L271.3,187.2L271.8,189L272.3,188.9L272.8,189.1L273.3,189.7L273.8,188.3L274.3,190.3L274.8,186L275.3,188.9L275.8,188.2L276.3,189.3L276.8,189.6L277.3,189.2L277.8,189.5L278.3,189.6L278.8,188.6L279.3,188.2L279.8,188.5L280.3,189.5L280.8,189L281.3,190.2L281.8,186.1L282.3,187.8L282.8,186L283.3,189.7L283.8,186.5L284.3,186.4L284.8,188.8L285.3,185.9L285.8,189.5L286.3,188.4L286.8,188.6L287.3,188.3L287.8,187.2L288.3,189.2L288.8,189.7L289.3,188.1L289.8,189.4L290.3,189.1L290.8,189L291.3,189.8L291.8,188.3L292.3,188.6L292.8,190.5L293.3,187.3L293.8,189.6L294.3,191.1L294.8,189.5L295.3,190.7L295.8,189.6L295.8,193.6L295.3,193.3L294.8,198.5L294.3,195L293.8,193.9L293.3,194.5L292.8,192.9L292.3,194L291.8,193.4L291.3,194.6L290.8,192.7L290.3,196.1L289.8,192.7L289.3,192.1L288.8,192.9L288.3,192.7L287.8,195L287.3,192L286.8,191.7L286.3,192.7L285.8,193.3L285.3,191.7L284.8,192.6L284.3,194L283.8,191.9L283.3,192.9L282.8,193.9L282.3,195.3L281.8,196.7L281.3,193.3L280.8,193.6L280.3,195.2L279.8,192.5L279.3,192.9L278.8,192.2L278.3,195.9L277.8,193.8L277.3,193.2L276.8,193.4L276.3,193L275.8,194.8L275.3,191.5L274.8,193.2L274.3,194.2L273.8,193.9L273.3,194.2L272.8,193.5L272.3,192.5L271.8,193.1L271.3,191.6L270.8,193.9L270.3,192.6L269.8,192.9L269.3,193L268.8,193L268.3,192.8L267.8,193.4L267.3,193.8L266.8,193.6L266.3,194.5L265.8,195.4L265.3,195.1L264.8,196.5L264.3,193.2L263.8,193.2L263.3,198.1L262.8,195.9L262.3,192.2L261.8,190.8L261.3,191.9L260.8,193.1L260.3,191.1L259.8,193.2L259.3,193L258.8,193.8L258.3,192.1L257.8,194L257.3,194.7L256.8,194.1L256.3,198.2L255.8,195.8L255.3,194.4L254.8,194.2L254.3,194.4L253.8,193L253.3,192.3L252.8,196.7L252.3,196.4L251.8,198.8L251.3,195.8L250.8,195.6L250.3,196.6L249.8,195.1L249.3,196.8L248.8,193.6L248.3,194.8L247.8,197.9L247.3,193.6L246.8,193.4L246.3,193.9L245.8,193.8L245.3,195.2L244.8,195.1L244.3,196.3L243.8,195.9L243.3,194.1L242.8,194.4L242.3,195.9L241.8,195.5L241.3,195.9L240.8,196.7L240.3,195.7L239.8,195.3L239.3,196L238.8,196.1L238.3,194.5L237.8,195.2L237.3,194.7L236.8,195.2L236.3,198.5L235.8,192.9L235.3,192L234.8,192.6L234.3,193.5L233.8,197.2L233.3,192.4L232.8,193.5L232.3,196.9L231.8,192.5L231.3,191.4L230.8,192.8L230.3,194.3L229.8,192.8L229.3,193.1L228.8,193.3L228.3,195.5L227.8,192.1L227.3,192.9L226.8,192.9L226.3,193.4L225.8,192.2L225.3,191.8L224.8,192.2L224.3,194.1L223.8,195.3L223.3,194.1L222.8,194.6L222.3,197.1L221.8,198.6L221.3,198L220.8,198.5L220.3,196.1L219.8,195L219.3,194.1L218.8,195.4L218.3,192.5L217.8,192.2L217.3,192.8L216.8,193.1L216.3,193L215.8,192.8L215.3,192.4L214.8,193.3L214.3,193.4L213.8,193.2L213.3,193.7L212.8,195.4L212.3,193L211.8,193.2L211.3,198.9L210.8,197.7L210.3,195.8L209.8,195.5L209.3,194.2L208.8,194L208.3,196.6L207.8,192.5L207.3,193.3L206.8,195.7L206.3,194.1L205.8,193L205.3,191.9L204.8,193.5L204.3,193.9L203.8,195.1L203.3,193.5L202.8,193.2L202.3,193.9L201.8,193.1L201.3,193.7L200.8,198.2L200.3,195.8L199.8,194.4L199.3,192.7L198.8,192.7L198.3,194.9L197.8,193.6L197.3,195.1L196.8,195.2L196.3,195L195.8,193.6L195.3,194.1L194.8,197.4L194.3,194.1L193.8,193.2L193.3,194.4L192.8,194.7L192.3,194L191.8,195.9L191.3,194.8L190.8,193.3L190.3,193.6L189.8,194.1L189.3,198.7L188.8,194.3L188.3,193.2L187.8,194.4L187.3,194.2L186.8,194L186.3,196.6L185.8,195.3L185.3,195.6L184.8,195.1L184.3,194.2L183.8,193.3L183.3,194.9L182.8,194.9L182.3,195.6L181.8,196L181.3,195.7L180.8,195.9L180.3,195.1L179.8,195.9L179.3,195L178.8,196.4L178.3,195L177.8,195.2L177.3,195L176.8,193.1L176.3,193L175.8,193.9L175.3,194.8L174.8,193.2L174.3,193.5L173.8,193.4L173.3,193.8L172.8,198.7L172.3,193.2L171.8,195.2L171.3,194.4L170.8,195L170.3,194L169.8,194.4L169.3,195.9L168.8,195L168.3,195.5L167.8,192.1L167.3,193.5L166.8,193.5L166.3,193.8L165.8,193.6L165.3,192.5L164.8,194.6L164.3,193.7L163.8,191.7L163.3,192.1L162.8,193L162.3,192.9L161.8,195.6L161.3,193.8L160.8,196.7L160.3,192.5L159.8,193.1L159.3,192.2L158.8,191.8L158.3,192.8L157.8,193.9L157.3,193.8L156.8,193.5L156.3,194.9L155.8,193.1L155.3,197.5L154.8,193.4L154.3,191.9L153.8,193.5L153.3,195L152.8,197.1L152.3,196.6L151.8,195.4L151.3,192.4L150.8,193.5L150.3,194.2L149.8,198.4L149.3,194.4L148.8,194.9L148.3,193.3L147.8,196L147.3,195.5L146.8,196.1L146.3,194.5L145.8,194L145.3,195.5L144.8,192.9L144.3,195.9L143.8,194.5L143.3,194.4L142.8,192.8L142.3,193.9L141.8,194.1L141.3,194.1L140.8,192.8L140.3,194.6L139.8,193.2L139.3,193L138.8,195L138.3,194.4L137.8,193.1L137.3,193.6L136.8,198.2L136.3,193.7Z" class="kb"/>
<path d="M296,189.7L296.5,191.3L297,191.4L297.5,191.4L298,191.4L298.5,191.4L299,191.4L299.5,191.4L300,191.4L300.5,191.4L301,191.4L301.5,179.4L302,191.4L302.5,215.9L303,215.9L303.5,215.9L304,215.9L304.5,215.9L305,215.9L305.5,215.9L306,215.9L306.5,215.9L307,215.1L307.5,210.4L308,206.5L308.5,204.1L309,201.7L309.5,199.2L310,197.9L310.5,196.4L311,195.3L311.5,193.9L312,194L312.5,191.2L313,190.3L313.5,191L314,187.8L314.5,191L315,189.8L315.5,189.3L316,189.6L316.5,189L317,191.4L317.5,191.4L318,191.4L318.5,191.4L319,191.4L319.5,191.4L320,191.4L320.5,191.4L321,191.4L321.5,191.4L322,179.4L322.5,191.4L323,215.9L323.5,215.9L324,215.9L324.5,215.9L325,215.9L325.5,215.9L326,215.9L326.5,215.9L327,215.9L327.5,213.2L328,208.7L328.5,205L329,202L329.5,199.9L330,198.1L330.5,197.7L331,195.8L331.5,195.1L332,193.6L332.5,190.4L333,191.1L333.5,190.6L334,190.9L334.5,187.7L335,189.9L335.5,190.7L336,191.4L336.5,191.4L337,191.4L337.5,191.4L338,191.4L338.5,191.4L339,191.4L339.5,191.4L340,191.4L340.5,191.4L341,179.4L341.5,191.4L342,215.9L342.5,215.9L343,215.9L343.5,215.9L344,215.9L344.5,215.9L345,215.9L345.5,215.9L346,215.9L346.5,213.4L347,208.5L347.5,204.8L348,203.1L348.5,200.6L349,199L349.5,194.6L350,195.5L350.5,195.3L351,195.1L351.5,193L352,192.2L352.5,193.4L353,193.3L353.5,192.4L354,190.2L354.5,191.6L355,192.3L355.5,192.4L356,191.4L356.5,191.4L357,191.4L357.5,191.4L358,191.4L358.5,191.4L359,191.4L359.5,191.4L360,191.4L360.5,191.4L361,179.4L361.5,191.4L362,215.9L362.5,215.9L363,215.9L363.5,215.9L364,215.9L364.5,215.9L365,215.9L365.5,215.9L366,215.9L366.5,213.5L367,209.2L367.5,206.3L368,203.4L368.5,199.7L369,197.3L369.5,196.6L370,195.7L370.5,194.1L371,192.7L371.5,192.2L372,191.4L372.5,192.5L373,188.3L373.5,193L374,192.4L374.5,191.3L375,191.4L375.5,191.4L376,191.4L376.5,191.4L377,191.4L377.5,191.4L378,191.4L378.5,191.4L379,191.4L379.5,191.4L380,179.4L380.5,191.4L381,215.9L381.5,215.9L382,215.9L382.5,215.9L383,215.9L383.5,215.9L384,215.9L384.5,215.9L385,215.9L385.5,212.9L386,209L386.5,205.9L387,202.7L387.5,200.3L388,198.5L388.5,194L389,194.7L389.5,194.1L390,193.8L390.5,190.3L391,192.6L391.5,191.5L392,191.2L392.5,191.1L393,187.5L393.5,189L394,189.1L394.5,190.4L395,189.4L395.5,188.5L396,189.5L396.5,189.2L397,189.7L397.5,186.2L398,186.4L398.5,189.2L399,189.7L399.5,190.8L400,190L400.5,187.3L401,190L401.5,191.5L402,191.4L402.5,190.9L403,191.2L403.5,190.6L404,189.8L404.5,188.9L405,189.2L405.5,188.7L406,190L406.5,190.7L407,190.4L407.5,190.3L408,191.3L408.5,189.2L409,189.1L409.5,189.6L410,189.6L410.5,191.1L411,190.1L411.5,188.9L412,189.7L412.5,190.5L413,189L413.5,190.7L414,189.5L414.5,190.6L415,186.2L415.5,187.3L416,187.8L416.5,189L417,189.3L417.5,189.5L418,190.5L418.5,191.6L419,191.1L419.5,187.1L420,189.5L420.5,188.9L421,189.5L421.5,190.4L422,190.1L422.5,190.5L423,191.5L423.5,189.8L424,190.3L424.5,186.4L425,188.8L425.5,188.9L426,189.2L426.5,190.2L427,189.6L427.5,190.4L428,189.8L428.5,190.3L429,191.2L429.5,189.8L430,190.6L430.5,189.6L431,187.2L431.5,187.1L432,189.9L432.5,191.7L433,191.6L433.5,189.9L434,191.4L434.5,191.2L435,190.5L435.5,190L436,186.9L436.5,190.7L437,188.8L437.5,189.3L438,190.4L438.5,190.8L439,190.7L439.5,188.4L440,183.6L440.5,189.4L441,189.2L441.5,189.3L442,189.4L442.5,188.8L443,189.8L443.5,189.2L444,190.8L444.5,190.2L445,189.1L445.5,188.7L446,189.8L446.5,188.4L447,188.9L447.5,190.4L448,189.2L448.5,190.1L449,190.5L449.5,192L450,190.6L450.5,192.2L451,192L451.5,192L452,191.7L452.5,186.6L453,187L453.5,190.8L454,191.3L454.5,191.4L455,191.9L455.5,192.6L456,191.9L456.5,189.1L457,191.9L457.5,191.7L458,190L458.5,185.5L459,188.5L459.5,189.5L460,189.3L460.5,187.9L461,191.4L461.5,190.7L462,189.9L462.5,187.3L463,191.1L463.5,191.3L464,191.5L464.5,192.3L465,192.3L465.5,192.1L466,182.9L466.5,191.3L467,186.9L467.5,190.1L468,187.8L468.5,189.2L469,189.2L469.5,189.5L470,187.7L470.5,186.9L471,189.2L471.5,189.9L472,191.4L472.5,188.9L473,189.3L473.5,190.7L474,190L474.5,191.1L475,189.4L475.5,187.2L476,190.1L476.5,190.1L477,189.4L477.5,189.9L478,189.9L478.5,190.8L479,184.9L479.5,189.5L480,190.6L480.5,188.2L481,187.7L481.5,186.2L482,188L482.5,187.5L483,184.8L483.5,188.5L484,189.5L484.5,188.6L485,188.2L485.5,188L486,189L486.5,187.1L487,188.1L487.5,189.8L488,186.6L488.5,186.7L489,190.2L489.5,187.6L490,191L490.5,190.1L491,190L491.5,186.8L492,188.7L492.5,190.2L493,189.2L493.5,188.8L494,188.4L494.5,188.3L495,188.7L495.5,189.3L496,187.9L496.5,188.9L497,187.5L497.5,189.1L498,188.6L498.5,189.1L499,189.5L499.5,190.1L500,189.3L500.5,190.2L501,186.7L501.5,192.2L502,191.9L502.5,190.4L503,189.8L503.5,190.1L504,186.3L504.5,189.1L505,189.2L505.5,189.6L506,188.6L506.5,189.1L507,188.5L507.5,189.1L508,187.9L508.5,185.3L509,189.2L509.5,189.6L510,189.5L510.5,189.8L511,187.2L511.5,190.4L512,190.5L512.5,191.5L513,189.6L513.5,191.3L514,187.3L514.5,191.1L515,189.9L515.5,190.8L516,191L516.5,189.8L517,188L517.5,190.4L518,191L518.5,189.6L519,189.4L519.5,190.2L520,190L520.5,188.2L521,188L521.5,189.1L522,190.3L522.5,189.3L523,190.2L523.5,190.2L524,190.9L524.5,189.7L525,192L525.5,191.6L526,187.4L526.5,191L527,191.5L527.5,191.5L528,192.7L528.5,191.1L529,191.6L529.5,191.9L530,190.7L530.5,189L531,189.4L531.5,190.1L532,186.9L532.5,190.1L533,190.4L533.5,189.2L534,188.7L534.5,185.8L535,188.5L535.5,190.4L536,191.3L536.5,191.7L537,190.1L537.5,191.9L538,190.6L538.5,189.6L539,187.9L539.5,189.5L540,185.1L540.5,189.2L541,190L541.5,191.1L542,189.5L542.5,190.5L543,191.3L543.5,192.7L544,191.8L544.5,192.1L545,191.2L545.5,190.9L546,191.1L546.5,191.7L547,191.4L547.5,185.5L548,191.1L548.5,191.6L549,191L549.5,190.2L550,189.7L550.5,190.4L551,189L551.5,189.3L552,188.9L552.5,190.4L553,189.4L553.5,188.2L554,189.1L554.5,187.7L555,189.5L555.5,190.2L556,187.4L556.5,189.1L557,191.2L557.5,191L558,191.2L558.5,190.5L559,191.9L559.5,191L560,190.4L560.5,192.2L561,192.2L561.5,191.7L562,191.8L562.5,189.7L563,190.1L563.5,189.3L564,188.4L564.5,187.4L565,188.2L565.5,187.9L566,188.1L566.5,189.6L567,189.5L567.5,189.1L568,189.4L568.5,189.8L569,190.2L569.5,189.8L570,187L570.5,188.8L571,188.3L571.5,188.2L572,184.5L572.5,187.6L573,188.2L573.5,184.5L574,189.3L574.5,188.4L575,187.4L575.5,183.5L576,187.8L576.5,188.1L577,191L577.5,190.8L578,190.7L578.5,189.7L579,188.5L579.5,186.5L580,188.7L580.5,189.2L581,189.3L581.5,189.4L582,189.1L582.5,190.5L583,188.5L583.5,189.1L584,191.1L584.5,190.5L585,187.1L585.5,188.4L586,184.9L586.5,190L587,189L587.5,189.3L588,188.7L588.5,189.1L589,187.5L589.5,189.4L590,188.7L590.5,188.6L591,188.3L591.5,189.7L592,187.5L592.5,187L593,189.6L593.5,190.3L594,190.5L594.5,186.7L595,190.4L595.5,190.1L596,189.7L596.5,190.3L597,189.1L597.5,189.9L598,188.1L598.5,187.5L599,189.1L599.5,188.1L600,187.7L600.5,189.9L601,190.6L601.5,190.6L602,191.6L602.5,188.8L603,188.3L603.5,192.1L604,192.1L604.5,190.9L605,190.8L605.5,191L606,190.1L606.5,190.2L607,190.2L607.5,191.7L608,192L608.5,191.5L609,191L609.5,190.3L610,188L610.5,190.1L611,189.2L611.5,187.1L612,185.9L612.5,191.2L613,190.1L613.5,190.4L614,189L614.5,188.9L615,185.2L615.5,188.3L616,187.7L616.5,189L617,190.1L617.5,189.4L618,187.1L618.5,189.3L619,191L619.5,187.8L620,186.6L620.5,188.3L621,187.5L621.5,188.6L622,188.6L622.5,187.3L623,188.6L623.5,186.8L624,189L624.5,189L625,188.8L625.5,188.4L626,186.6L626.5,186.1L627,191L627.5,189.5L628,189.2L628.5,191.3L629,190.4L629.5,187.4L630,188L630.5,189.6L631,189.1L631.5,190L632,190L632.5,190.5L633,189.5L633.5,189.2L634,189.8L634.5,189.9L635,188.7L635.5,188.5L636,189.3L636.5,189.3L637,191L637.5,186.8L638,190.2L638.5,190.8L639,190L639.5,190.2L640,188.7L640.5,188.3L641,189.6L641.5,189.7L642,190.3L642.5,189.8L643,189.5L643.5,189.9L644,190.1L644.5,191.3L645,191.4L645.5,188.2L646,191.3L646.5,189.8L647,189.7L647.5,189.7L648,188.1L648.5,188L649,189.3L649.5,189.6L650,189.4L650.5,191.3L651,191.3L651.5,190.1L652,189L652.5,187L653,186.1L653.5,190.3L654,190.6L654.5,187.8L655,190.8L655.5,191L656,189.3L656.5,191.1L657,191.3L657.5,191L658,190.3L658.5,191L659,190.9L659.5,190.2L660,190.9L660.5,189.4L661,189.8L661.5,190.9L662,188.5L662.5,192.2L663,190.8L663.5,191.3L664,190.5L664.5,190.8L665,190.7L665.5,189.2L666,186.1L666.5,189.7L667,190.7L667.5,190.2L668,187.9L668.5,190.2L669,190.3L669.5,189.5L670,189.2L670.5,186.9L671,188.8L671.5,189.6L672,189.1L672.5,185.2L673,184.4L673.5,189.8L674,189.3L674.5,189.3L675,189L675.5,188.2L676,189.5L676.5,189.8L677,189L677.5,189.8L678,190.4L678.5,186.8L679,190.5L679.5,191L680,189.3L680.5,189.7L681,191.4L681.5,190.7L682,190.3L682.5,187.9L683,186.4L683.5,190.3L684,190.7L684.5,189.7L685,188.1L685.5,190.4L686,190.2L686.5,189.1L687,189L687.5,190.4L688,191.4L688.5,188.1L689,189.7L689.5,185.9L690,189.8L690.5,189.3L691,190.1L691.5,190.4L692,189L692.5,188.4L693,189.9L693.5,189.9L694,189.6L694.5,189.1L695,189.9L695.5,189.1L696,190.6L696.5,190.8L697,189L697.5,189.2L698,190.1L698.5,189.1L699,190.8L699.5,190.7L700,190.1L700.5,191.3L701,189.8L701.5,189.9L702,189.4L702.5,190.4L703,189.9L703.5,189.6L704,189.8L704.5,188.8L705,188.6L705.5,190.3L706,184.9L706.5,189.4L707,188.7L707.5,189.6L708,190L708.5,188L709,188.6L709.5,188.7L710,188.9L710.5,189.1L711,189L711.5,189.1L712,185.7L712.5,189.5L712.5,197.3L712,196.2L711.5,191.6L711,192.4L710.5,192.7L710,192.9L709.5,195.7L709,193L708.5,194L708,196.8L707.5,196.1L707,193.1L706.5,193.1L706,195.9L705.5,197.3L705,191.7L704.5,195.4L704,193.2L703.5,193.8L703,192.8L702.5,193.3L702,194.3L701.5,193.9L701,194L700.5,194.7L700,193.1L699.5,193.7L699,194.8L698.5,193L698,194.2L697.5,194.1L697,193.4L696.5,194.1L696,193.2L695.5,192.7L695,193.9L694.5,193.5L694,192.1L693.5,194.2L693,193.7L692.5,193.2L692,196L691.5,196.9L691,195.4L690.5,193.3L690,193.4L689.5,193.4L689,194.6L688.5,196.1L688,194.3L687.5,194.6L687,193.4L686.5,196.1L686,193.4L685.5,193.5L685,192.4L684.5,193.4L684,193.9L683.5,193.4L683,193.2L682.5,193.9L682,198.1L681.5,194.3L681,195.1L680.5,193L680,194.7L679.5,193.6L679,193L678.5,193.5L678,193.3L677.5,193.9L677,193.9L676.5,194.7L676,194.3L675.5,191.9L675,193.3L674.5,192.7L674,193L673.5,193.3L673,191.6L672.5,192.5L672,192.4L671.5,192.6L671,196.3L670.5,193.5L670,196L669.5,193.7L669,194L668.5,195.3L668,196.2L667.5,194L667,194.7L666.5,193.4L666,192.7L665.5,194L665,199.1L664.5,194.2L664,194.1L663.5,195.5L663,194.8L662.5,196.2L662,194.8L661.5,195.2L661,194.1L660.5,194.4L660,193.8L659.5,194.1L659,195.9L658.5,194.7L658,194.8L657.5,193.9L657,194.2L656.5,195.4L656,194.5L655.5,197.1L655,198.4L654.5,194.5L654,193.6L653.5,194.1L653,193.4L652.5,198.1L652,193.9L651.5,193.9L651,194.9L650.5,195L650,194.1L649.5,194.3L649,193.1L648.5,192.1L648,195.8L647.5,192.8L647,194.6L646.5,193.6L646,194.3L645.5,195.2L645,196.1L644.5,194.7L644,194.5L643.5,196.4L643,192.9L642.5,193.1L642,194.2L641.5,193.6L641,196L640.5,191.3L640,193.3L639.5,195.1L639,193.9L638.5,194.7L638,194.5L637.5,195L637,194L636.5,193.8L636,193.5L635.5,192.3L635,192.2L634.5,193.2L634,193L633.5,193.7L633,194.4L632.5,194.4L632,195L631.5,193.8L631,195.9L630.5,193.4L630,195.1L629.5,193.6L629,193.6L628.5,196L628,193.9L627.5,192.6L627,197.7L626.5,193.1L626,195.9L625.5,192.2L625,192.2L624.5,192.3L624,192L623.5,192.8L623,193.2L622.5,196.6L622,191.7L621.5,191.9L621,192.5L620.5,192L620,192.8L619.5,193.7L619,195.3L618.5,193.4L618,194L617.5,193.9L617,194.5L616.5,192.4L616,192.7L615.5,196.5L615,192.1L614.5,193.2L614,192.5L613.5,196.3L613,194.3L612.5,194.7L612,193.1L611.5,194.8L611,193.7L610.5,194L610,194.7L609.5,194.3L609,196.8L608.5,195.9L608,195.4L607.5,194.7L607,193.9L606.5,194.7L606,194.2L605.5,194.7L605,193.9L604.5,195.2L604,197L603.5,194.9L603,195.5L602.5,194.6L602,196.1L601.5,194.1L601,194.2L600.5,193.4L600,193.1L599.5,194.2L599,192.7L598.5,192.1L598,193.2L597.5,194.1L597,193.2L596.5,194L596,195.8L595.5,193.9L595,194.3L594.5,194.5L594,194L593.5,193L593,193.4L592.5,193.9L592,193.9L591.5,193.3L591,192.8L590.5,193.5L590,192.5L589.5,196.4L589,193.6L588.5,193.3L588,193.4L587.5,195.8L587,193.6L586.5,194.9L586,192.9L585.5,192.2L585,197.7L584.5,194.3L584,194.7L583.5,192.9L583,194.6L582.5,194.2L582,192.2L581.5,193.5L581,193.8L580.5,192.2L580,195.1L579.5,192.2L579,192.2L578.5,197.3L578,194.3L577.5,194.4L577,193.3L576.5,193.7L576,194.8L575.5,192.2L575,192.3L574.5,190.9L574,192.2L573.5,192.8L573,191.3L572.5,191.4L572,193.4L571.5,192.2L571,191.9L570.5,197.8L570,193.7L569.5,194.2L569,193.1L568.5,194.7L568,193.4L567.5,193.6L567,195.5L566.5,192.6L566,192.3L565.5,195.1L565,191.7L564.5,193.6L564,193.4L563.5,191.8L563,194.6L562.5,194.8L562,195.6L561.5,196L561,195.7L560.5,199.5L560,195.5L559.5,195.4L559,199.1L558.5,194L558,194.6L557.5,193.6L557,193.8L556.5,192.7L556,193.1L555.5,193.9L555,194.3L554.5,194L554,192.9L553.5,194L553,193.4L552.5,194.3L552,192.4L551.5,192.9L551,195.7L550.5,193.2L550,193.2L549.5,193.8L549,194.4L548.5,195.1L548,195L547.5,193.2L547,194.3L546.5,195.5L546,195.5L545.5,195.4L545,195.1L544.5,199.2L544,195.5L543.5,195.4L543,194.2L542.5,194.7L542,193.7L541.5,194.7L541,192.9L540.5,193L540,193.9L539.5,193.3L539,195.4L538.5,193.2L538,193.9L537.5,194.5L537,195L536.5,195.1L536,194.8L535.5,194.1L535,195.3L534.5,193L534,193.9L533.5,193.4L533,192.9L532.5,193.9L532,192.3L531.5,193L531,194.3L530.5,195.5L530,194.9L529.5,195.5L529,197.4L528.5,195.2L528,197L527.5,195.2L527,195.7L526.5,194.8L526,196.9L525.5,195.3L525,195.2L524.5,194.8L524,194.7L523.5,193.6L523,193.2L522.5,194.1L522,193.2L521.5,192.8L521,192.9L520.5,193L520,193.7L519.5,193L519,192.7L518.5,193.7L518,196.5L517.5,193.6L517,193.4L516.5,193.6L516,193.4L515.5,194.5L515,197.8L514.5,194.5L514,194.5L513.5,195.2L513,194.6L512.5,194.3L512,194.9L511.5,193.1L511,195L510.5,194.1L510,194.4L509.5,193.7L509,195.7L508.5,192.2L508,192L507.5,192.4L507,193.4L506.5,194L506,193.1L505.5,193L505,193.5L504.5,192.5L504,197.1L503.5,194.2L503,193.4L502.5,193.9L502,195.4L501.5,195.8L501,194.7L500.5,195.1L500,193L499.5,194.5L499,192.7L498.5,192.2L498,192.2L497.5,192.6L497,195.6L496.5,196.3L496,193.9L495.5,194.2L495,193.3L494.5,193L494,192.6L493.5,192.3L493,192.6L492.5,193.7L492,193.1L491.5,194L491,194.4L490.5,194.6L490,197.5L489.5,192.8L489,194.3L488.5,194.7L488,194.2L487.5,194.5L487,194.4L486.5,198.3L486,195.6L485.5,192.2L485,190.7L484.5,195.3L484,193.4L483.5,191.8L483,191.5L482.5,192.7L482,191.3L481.5,191.1L481,191.3L480.5,192.9L480,193.5L479.5,194L479,192.3L478.5,193.3L478,193.9L477.5,194L477,193.8L476.5,192.6L476,193.1L475.5,196.6L475,193.4L474.5,193.6L474,194.9L473.5,195.4L473,196L472.5,195.8L472,195.8L471.5,193.3L471,193.6L470.5,191.6L470,192.5L469.5,192.1L469,193.5L468.5,193.1L468,193.1L467.5,200.9L467,197.6L466.5,194.3L466,194.1L465.5,196.1L465,197.6L464.5,196.5L464,196.4L463.5,196.5L463,195.2L462.5,194.4L462,196.8L461.5,193.3L461,198.5L460.5,194.6L460,193.3L459.5,192.9L459,193.3L458.5,193.3L458,194.7L457.5,194.8L457,194.2L456.5,194L456,195.9L455.5,194.9L455,195.5L454.5,196.2L454,196.1L453.5,194.3L453,194.4L452.5,195.3L452,195.7L451.5,195.4L451,199.6L450.5,195.8L450,195.1L449.5,194.9L449,193.9L448.5,194L448,197L447.5,194.3L447,191.9L446.5,193.3L446,193.2L445.5,192.7L445,193.4L444.5,194L444,194.7L443.5,192.6L443,193.6L442.5,193L442,192.4L441.5,193.4L441,197L440.5,194.6L440,191L439.5,196L439,193L438.5,194.1L438,195.3L437.5,192.8L437,192.9L436.5,193.4L436,193.3L435.5,194.1L435,197.2L434.5,194.9L434,194L433.5,194.4L433,195.2L432.5,195.7L432,197.9L431.5,198L431,195L430.5,194.8L430,195.3L429.5,195.5L429,193.9L428.5,197.7L428,194.1L427.5,194L427,194.8L426.5,193.1L426,194L425.5,192.9L425,191.6L424.5,192.8L424,193.3L423.5,193.3L423,195.1L422.5,198.9L422,193.4L421.5,193.6L421,192.3L420.5,192.3L420,193.6L419.5,196.2L419,194.8L418.5,195L418,194.4L417.5,193.3L417,194.1L416.5,194.2L416,194.6L415.5,193.4L415,194L414.5,193.6L414,193.7L413.5,193.1L413,193.4L412.5,193.4L412,193.9L411.5,195.8L411,193L410.5,198.1L410,193.6L409.5,194.3L409,193.2L408.5,193.1L408,194.7L407.5,198.2L407,194.4L406.5,193.7L406,194.1L405.5,193.4L405,194.2L404.5,193.1L404,193.2L403.5,197.1L403,194.4L402.5,193.8L402,194.2L401.5,198.7L401,193.7L400.5,194.5L400,193.2L399.5,193.1L399,193.2L398.5,193.6L398,193L397.5,193.4L397,192.2L396.5,192.6L396,193.4L395.5,193.5L395,192.6L394.5,194.2L394,193.3L393.5,193.6L393,193.9L392.5,193.7L392,194.5L391.5,195.6L391,196.8L390.5,196.5L390,197.6L389.5,197.2L389,200.1L388.5,199.4L388,201.3L387.5,202.7L387,205.9L386.5,209L386,212.9L385.5,215.9L385,215.9L384.5,215.9L384,215.9L383.5,215.9L383,215.9L382.5,215.9L382,215.9L381.5,215.9L381,215.9L380.5,215.9L380,191.4L379.5,192.4L379,192.4L378.5,192.4L378,192.4L377.5,192.4L377,192.4L376.5,192.4L376,192.4L375.5,192.4L375,192.4L374.5,195L374,196.6L373.5,196.7L373,196.6L372.5,195.5L372,195.4L371.5,197L371,197.4L370.5,201.3L370,201.1L369.5,199.2L369,201.6L368.5,204.5L368,206.3L367.5,209.2L367,213.5L366.5,215.9L366,215.9L365.5,215.9L365,215.9L364.5,215.9L364,215.9L363.5,215.9L363,215.9L362.5,215.9L362,215.9L361.5,215.9L361,191.4L360.5,192.4L360,192.4L359.5,192.4L359,192.4L358.5,192.4L358,192.4L357.5,192.4L357,192.4L356.5,192.4L356,192.4L355.5,195.8L355,195.4L354.5,196.5L354,195.6L353.5,196L353,197.2L352.5,196.7L352,196.6L351.5,197.7L351,197.6L350.5,198.4L350,199.3L349.5,199.3L349,201.7L348.5,203.9L348,205.4L347.5,208.5L347,213.4L346.5,215.9L346,215.9L345.5,215.9L345,215.9L344.5,215.9L344,215.9L343.5,215.9L343,215.9L342.5,215.9L342,215.9L341.5,215.9L341,191.4L340.5,192.4L340,192.4L339.5,192.4L339,192.4L338.5,192.4L338,192.4L337.5,192.4L337,192.4L336.5,192.4L336,192.4L335.5,193.7L335,194L334.5,195.4L334,194.3L333.5,194.7L333,196.1L332.5,196.8L332,197.1L331.5,197.5L331,198.8L330.5,202.2L330,201.4L329.5,202.5L329,205L328.5,208.7L328,213.2L327.5,215.9L327,215.9L326.5,215.9L326,215.9L325.5,215.9L325,215.9L324.5,215.9L324,215.9L323.5,215.9L323,215.9L322.5,215.9L322,191.4L321.5,192.4L321,192.4L320.5,192.4L320,192.4L319.5,192.4L319,192.4L318.5,192.4L318,192.4L317.5,192.4L317,192.4L316.5,192.2L316,193.3L315.5,194L315,193.1L314.5,195.2L314,195L313.5,194.4L313,194.9L312.5,196.2L312,197.1L311.5,197.1L311,198.2L310.5,199.5L310,202.7L309.5,202L309,204.1L308.5,206.5L308,210.4L307.5,215.1L307,215.9L306.5,215.9L306,215.9L305.5,215.9L305,215.9L304.5,215.9L304,215.9L303.5,215.9L303,215.9L302.5,215.9L302,215.9L301.5,191.4L301,192.4L300.5,192.4L300,192.4L299.5,192.4L299,192.4L298.5,192.4L298,192.4L297.5,192.4L297,192.4L296.5,195L296,193.9Z" class="bl"/>
<path d="M296.7,167.3V216.4" class="ml"/>
<path d="M317,167.3V216.4" class="ml"/>
<path d="M336,167.3V216.4" class="ml"/>
<path d="M356,167.3V216.4" class="ml"/>
<path d="M375,167.3V216.4" class="ml"/>
<path d="M393.8,167.3V216.4" class="ml"/>
<path d="M611.6,167.3V216.4" class="ml"/>
<rect x="296.7" y="11.8" width="13.2" height="6.7" class="mb"/><text x="299.2" y="17.9" class="mt">I x</text>
<rect x="317" y="11.8" width="13.2" height="6.7" class="mb"/><text x="319.5" y="17.9" class="mt">I x</text>
<rect x="336" y="11.8" width="13.2" height="6.7" class="mb"/><text x="338.5" y="17.9" class="mt">I x</text>
<rect x="356" y="11.8" width="13.2" height="6.7" class="mb"/><text x="358.5" y="17.9" class="mt">I x</text>
<rect x="375" y="11.8" width="13.2" height="6.7" class="mb"/><text x="377.5" y="17.9" class="mt">I x</text>
<rect x="393.8" y="11.8" width="19.4" height="6.7" class="mb"/><text x="395" y="17.9" class="mt">X I x</text>
<rect x="611.6" y="11.8" width="13.7" height="6.7" class="mb"/><text x="613.1" y="17.9" class="mt">LE</text>
<rect x="295.8" y="63.7" width="11.2" height="6.7" class="mb"/><text x="296.6" y="69.8" class="mt">A1</text>
<rect x="311.4" y="63.7" width="12.8" height="6.7" class="mb"/><text x="313.7" y="69.8" class="mt">I x</text>
<rect x="326" y="63.7" width="12.8" height="6.7" class="mb"/><text x="328.3" y="69.8" class="mt">I x</text>
<rect x="339.6" y="63.7" width="12.8" height="6.7" class="mb"/><text x="341.9" y="69.8" class="mt">I x</text>
<rect x="356.4" y="63.7" width="12.8" height="6.7" class="mb"/><text x="358.7" y="69.8" class="mt">I x</text>
<rect x="375" y="63.7" width="12.8" height="6.7" class="mb"/><text x="377.3" y="69.8" class="mt">I x</text>
<rect x="393.8" y="63.7" width="19.4" height="6.7" class="mb"/><text x="395" y="69.8" class="mt">X I x</text>
<rect x="611.6" y="63.7" width="13.7" height="6.7" class="mb"/><text x="613.1" y="69.8" class="mt">LE</text>
<rect x="296.7" y="115.7" width="13.2" height="6.7" class="mb"/><text x="299.2" y="121.8" class="mt">I x</text>
<rect x="317" y="115.7" width="13.2" height="6.7" class="mb"/><text x="319.5" y="121.8" class="mt">I x</text>
<rect x="336" y="115.7" width="13.2" height="6.7" class="mb"/><text x="338.5" y="121.8" class="mt">I x</text>
<rect x="356" y="115.7" width="13.2" height="6.7" class="mb"/><text x="358.5" y="121.8" class="mt">I x</text>
<rect x="375" y="115.7" width="13.2" height="6.7" class="mb"/><text x="377.5" y="121.8" class="mt">I x</text>
<rect x="393.8" y="115.7" width="19.4" height="6.7" class="mb"/><text x="395" y="121.8" class="mt">X I x</text>
<rect x="611.6" y="115.7" width="13.7" height="6.7" class="mb"/><text x="613.1" y="121.8" class="mt">LE</text>
<rect x="296.7" y="167.7" width="13.2" height="6.7" class="mb"/><text x="299.2" y="173.8" class="mt">I x</text>
<rect x="317" y="167.7" width="13.2" height="6.7" class="mb"/><text x="319.5" y="173.8" class="mt">I x</text>
<rect x="336" y="167.7" width="13.2" height="6.7" class="mb"/><text x="338.5" y="173.8" class="mt">I x</text>
<rect x="356" y="167.7" width="13.2" height="6.7" class="mb"/><text x="358.5" y="173.8" class="mt">I x</text>
<rect x="375" y="167.7" width="13.2" height="6.7" class="mb"/><text x="377.5" y="173.8" class="mt">I x</text>
<rect x="393.8" y="167.7" width="19.4" height="6.7" class="mb"/><text x="395" y="173.8" class="mt">X I x</text>
<rect x="611.6" y="167.7" width="13.7" height="6.7" class="mb"/><text x="613.1" y="173.8" class="mt">LE</text>
<path d="M108,62.35H712.5" class="dv"/>
<path d="M108,114.35H712.5" class="dv"/>
<path d="M108,166.35H712.5" class="dv"/>
<path d="M108.05,231V12.6Q108.05,11.05 109.6,11.05H712.5" fill="none" stroke="#5a5a5a" stroke-width="1.9"/>
<path d="M107.4,231.2H712.5" stroke="#555" stroke-width="1.3"/>
<!-- panel B -->
<rect x="811.4" y="10.4" width="613.1" height="223" fill="#fff"/>
<rect x="839.8" y="10.4" width="584.7" height="207.9" fill="#c8c8c8"/>
<path d="M840,23.2H1424.5" class="gl"/>
<path d="M840,35.5H1424.5" class="gl"/>
<path d="M840,47.9H1424.5" class="gl"/>
<path d="M840,76.2H1424.5" class="gl"/>
<path d="M840,88.3H1424.5" class="gl"/>
<path d="M840,100.4H1424.5" class="gl"/>
<path d="M840,129.2H1424.5" class="gl"/>
<path d="M840,141.1H1424.5" class="gl"/>
<path d="M840,153.5H1424.5" class="gl"/>
<path d="M840,181.5H1424.5" class="gl"/>
<path d="M840,193.4H1424.5" class="gl"/>
<path d="M840,205.6H1424.5" class="gl"/>
<path d="M850.4,11V218.3" class="gl"/>
<path d="M957.3,11V218.3" class="gl"/>
<path d="M1064,11V218.3" class="gl"/>
<path d="M1170.8,11V218.3" class="gl"/>
<path d="M1277.6,11V218.3" class="gl"/>
<path d="M1384.4,11V218.3" class="gl"/>
<path d="M840,33.9L840.5,34.5L841,34.2L841.5,34.7L842,34.3L842.5,34.9L843,34.5L843.5,34.7L844,34.3L844.5,35L845,34.6L845.5,34.6L846,34.7L846.5,33.4L847,34.9L847.5,34.7L848,34.5L848.5,34.5L849,34.8L849.5,34.6L850,34.6L850.5,35.7L851,35.4L851.5,35.5L852,35.6L852.5,35.8L853,35.6L853.5,35.7L854,36.4L854.5,35.6L855,35.4L855.5,35.2L856,35.3L856.5,34.9L857,33.8L857.5,34.9L858,35L858.5,34.5L859,34.2L859.5,34.6L860,34.7L860.5,34.5L861,34L861.5,35L862,34.8L862.5,35.4L863,36L863.5,33.9L864,35.1L864.5,35.2L865,34.6L865.5,34.7L866,34.2L866.5,34L867,33.9L867.5,34.4L868,32.7L868.5,34.2L869,35.3L869.5,34.7L870,35L870.5,33.2L871,34L871.5,33.2L872,34.5L872.5,34.9L873,34.7L873.5,34.5L874,34.9L874.5,35.1L875,34.4L875.5,34L876,34.4L876.5,34.5L877,34.3L877.5,33.6L878,34.4L878.5,34.2L879,34.1L879.5,34.5L880,34.6L880.5,34.5L881,35.2L881.5,34.8L882,34L882.5,35.2L883,35.2L883.5,35.2L884,35.3L884.5,34.3L885,34.2L885.5,34.5L886,35.1L886.5,34.9L887,34L887.5,33.2L888,34.3L888.5,34.4L889,34.3L889.5,34.4L890,35L890.5,35L891,34.5L891.5,34.8L892,35L892.5,35.3L893,35.6L893.5,33.6L894,35L894.5,35.3L895,34.6L895.5,34.3L896,33.7L896.5,33.8L897,34.3L897.5,34.9L898,34.4L898.5,33.9L899,34.5L899.5,34.4L900,34.6L900.5,34.6L901,34.9L901.5,35.3L902,34.9L902.5,34.5L903,34.8L903.5,32.8L904,34.7L904.5,34.6L905,35.2L905.5,36L906,35.3L906.5,35.3L907,34.7L907.5,35L908,34.5L908.5,34.3L909,34.1L909.5,34.4L910,34.9L910.5,35.1L911,35.2L911.5,35.4L912,35.4L912.5,35.4L913,35.3L913.5,35.4L914,34.4L914.5,35.8L915,35.3L915.5,34.5L916,34.4L916.5,35L917,35.4L917.5,34.6L918,34.2L918.5,33.7L919,33L919.5,34.1L920,34.1L920.5,33.9L921,34L921.5,34L922,33.9L922.5,34.5L923,35.1L923.5,34.9L924,34.5L924.5,34.7L925,34.9L925.5,34.8L926,34.4L926.5,34.4L927,34.7L927.5,34.4L928,34.9L928.5,34.9L929,35.2L929.5,35.1L930,33.3L930.5,34.4L931,35L931.5,34.9L932,35.1L932.5,35.4L933,35.1L933.5,35.1L934,34.9L934.5,34.9L935,35.6L935.5,35.5L936,35.2L936.5,34.9L937,35.5L937.5,35.1L938,35.6L938.5,34.9L939,35.4L939.5,34.9L940,34.8L940.5,35.4L941,35.3L941.5,34.8L942,34.3L942.5,34.2L943,34.3L943.5,34.1L944,34.1L944.5,34.7L945,34.5L945.5,34.7L946,34.6L946.5,34.5L947,35.3L947.5,34.8L948,34.2L948.5,34.3L949,32.7L949.5,34.4L950,34.8L950.5,35L951,34.7L951.5,35.5L952,35.4L952.5,35.3L953,35.8L953.5,35.7L954,35.5L954.5,36.3L955,35.8L955.5,34.8L956,34.9L956.5,34.5L957,34.4L957.5,35.3L958,35.1L958.5,33.4L959,34.8L959.5,34.9L960,34.5L960.5,34.7L961,35.4L961.5,35.4L962,35.5L962.5,35.1L963,34.7L963.5,34L964,34.7L964.5,34.4L965,33.9L965.5,34.2L966,33.6L966.5,34.2L967,34.3L967.5,33.6L968,33.8L968.5,34L969,33.9L969.5,34.1L970,34L970.5,34.2L971,34.1L971.5,34.5L972,34.3L972.5,34.5L973,35.3L973.5,34.3L974,34.3L974.5,34.9L975,34.8L975.5,34.8L976,35.6L976.5,35.9L977,34.8L977.5,35.2L978,35.1L978.5,35L979,34.6L979.5,34.7L980,34.3L980.5,34.2L981,34.7L981.5,34.4L982,35.1L982.5,35.1L983,34.7L983.5,34.7L984,34.9L984.5,34.6L985,34.6L985.5,34.8L986,34.8L986.5,35L987,35.5L987.5,34.8L988,35.2L988.5,35.5L989,35.3L989.5,35.2L990,35.5L990.5,35.3L991,35.1L991.5,33.7L992,34.8L992.5,34.2L993,34.8L993.5,34.6L994,35.3L994.5,34.2L995,35.2L995.5,34.8L996,34.6L996.5,34.7L997,34.7L997.5,33.7L998,34.2L998.5,34.7L999,34.9L999.5,34.7L1000,34.7L1000.5,34.5L1001,34.9L1001.5,34.9L1002,33.8L1002.5,32.3L1003,33.6L1003.5,35.1L1004,35.5L1004.5,34.8L1005,35.2L1005.5,34.4L1006,34L1006.5,33.9L1007,34.3L1007.5,34L1008,34.4L1008.5,33.9L1009,34.1L1009.5,34.2L1010,34L1010.5,34.2L1011,33.3L1011.5,34.7L1012,34.9L1012.5,35L1013,36.2L1013.5,35.6L1014,35.2L1014.5,35.2L1015,34.5L1015.5,34.6L1016,34.6L1016.5,35.7L1017,35.3L1017.5,35.3L1018,34.4L1018.5,32.8L1019,33.5L1019.5,34.5L1020,35.3L1020.5,34.6L1021,33.7L1021.5,34.4L1022,34.7L1022.5,34.5L1023,35.3L1023.5,35.2L1024,35L1024.5,35.2L1025,34.5L1025.5,33.9L1026,34.7L1026.5,34.7L1027,34.4L1027.5,34L1028,34.9L1028.5,35L1029,34.3L1029.5,34.2L1030,34L1030.5,34.2L1031,34.8L1031.5,34.8L1032,34.9L1032.5,34L1033,34.4L1033.5,35.1L1034,35.3L1034.5,35.3L1035,34.5L1035.5,35.6L1036,34L1036.5,34.9L1037,35L1037.5,35.3L1038,34.9L1038.5,34L1039,34.1L1039.5,34.2L1040,34L1040.5,34.5L1041,34.4L1041.5,34.7L1042,35.2L1042.5,34.8L1043,34.9L1043.5,34.4L1044,34.8L1044.5,34.7L1045,34.5L1045.5,33.8L1046,33.5L1046.5,34.1L1047,34.2L1047.5,34.1L1048,34.3L1048.5,34.2L1049,34.6L1049.5,35.4L1050,35.2L1050.5,35.2L1051,35L1051.5,35.6L1052,35.7L1052.5,35.3L1053,35.5L1053.5,35.6L1054,35.5L1054.5,34.5L1055,35.3L1055.5,34.5L1056,34.7L1056.5,35.2L1057,34.9L1057.5,35.6L1058,33.1L1058.5,34.9L1059,35.1L1059.5,35.1L1060,35.5L1060.5,35.3L1061,34.8L1061.5,35.4L1062,35.4L1062.5,35.3L1063,34.9L1063.5,34.5L1064,34.4L1064.5,35L1065,34.6L1065.5,35.1L1066,35.1L1066,36.7L1065.5,36.1L1065,36.3L1064.5,36.6L1064,36.2L1063.5,35.9L1063,36.4L1062.5,36.6L1062,36.9L1061.5,37.2L1061,37.1L1060.5,36.8L1060,36.8L1059.5,36.2L1059,36.9L1058.5,35.8L1058,36.3L1057.5,36.8L1057,36.6L1056.5,36.4L1056,36.2L1055.5,35.7L1055,36.4L1054.5,36L1054,36.5L1053.5,37.2L1053,36.9L1052.5,37L1052,37.3L1051.5,36.9L1051,36.8L1050.5,36.7L1050,36.7L1049.5,36.7L1049,35.5L1048.5,35.7L1048,36.8L1047.5,35.6L1047,35.5L1046.5,35.5L1046,35L1045.5,35.3L1045,35.5L1044.5,36.2L1044,36.1L1043.5,36.2L1043,36.6L1042.5,36.4L1042,36.2L1041.5,35.8L1041,35.8L1040.5,36.3L1040,35.6L1039.5,35.5L1039,35.8L1038.5,35.4L1038,36L1037.5,36.8L1037,36.3L1036.5,36.8L1036,36.3L1035.5,36.9L1035,35.9L1034.5,36.3L1034,36.7L1033.5,36.2L1033,35.7L1032.5,36.4L1032,36L1031.5,36.6L1031,36L1030.5,35.7L1030,35.3L1029.5,36L1029,35.4L1028.5,36.1L1028,36.2L1027.5,35.7L1027,35.8L1026.5,35.9L1026,36L1025.5,36.1L1025,36L1024.5,36.1L1024,36.4L1023.5,36.5L1023,36.4L1022.5,36.3L1022,35.8L1021.5,35.9L1021,36.5L1020.5,36L1020,36.6L1019.5,35.7L1019,34.8L1018.5,35.2L1018,35.7L1017.5,36.2L1017,37L1016.5,36.6L1016,35.7L1015.5,35.7L1015,35.9L1014.5,36.5L1014,36.4L1013.5,36.6L1013,37.2L1012.5,36.5L1012,36.4L1011.5,37.4L1011,35.8L1010.5,35.7L1010,35.6L1009.5,35.4L1009,35.2L1008.5,35.4L1008,35.4L1007.5,35.6L1007,35.7L1006.5,35.4L1006,35.2L1005.5,36.4L1005,36.5L1004.5,36.6L1004,36.8L1003.5,36.2L1003,36.4L1002.5,35.2L1002,35.5L1001.5,36L1001,36.4L1000.5,35.9L1000,35.9L999.5,36.5L999,36.1L998.5,37.5L998,35.9L997.5,35.2L997,36.3L996.5,36.2L996,36L995.5,36.4L995,36.8L994.5,38.2L994,36.7L993.5,36.2L993,36L992.5,36.1L992,35.7L991.5,35.2L991,36.7L990.5,37L990,36.4L989.5,36.9L989,36.6L988.5,36.9L988,36.1L987.5,36.3L987,36.9L986.5,36L986,36.4L985.5,35.8L985,36.1L984.5,36L984,35.9L983.5,36.1L983,36L982.5,36.3L982,36L981.5,35.7L981,35.5L980.5,36L980,35.9L979.5,35.9L979,36L978.5,36L978,36.4L977.5,36.6L977,36.6L976.5,36.9L976,36.7L975.5,36.1L975,36.4L974.5,36.2L974,35.9L973.5,36L973,36.2L972.5,36L972,36.1L971.5,35.7L971,35.1L970.5,35.9L970,35.5L969.5,35.3L969,35.4L968.5,35.6L968,35.2L967.5,35.1L967,35.4L966.5,35.8L966,34.9L965.5,35.5L965,35.3L964.5,35.6L964,35.7L963.5,35.9L963,35.9L962.5,36.5L962,36.9L961.5,36.9L961,37.2L960.5,36.6L960,36.2L959.5,36.6L959,36.6L958.5,36.4L958,36.7L957.5,36.8L957,37.8L956.5,35.7L956,35.9L955.5,35.9L955,37L954.5,37.7L954,37.7L953.5,37.5L953,36.9L952.5,36.9L952,37.8L951.5,36.7L951,36L950.5,36.3L950,36.1L949.5,35.8L949,35.6L948.5,35.7L948,36L947.5,36.4L947,36.5L946.5,36.3L946,36L945.5,36.1L945,35.5L944.5,35.7L944,35.9L943.5,35.9L943,35.4L942.5,35.8L942,35.7L941.5,35.8L941,36.7L940.5,37L940,36.3L939.5,36.4L939,36.8L938.5,36.4L938,37L937.5,36.4L937,37L936.5,36.1L936,36L935.5,37.2L935,38.2L934.5,36.9L934,36.5L933.5,36.7L933,36.6L932.5,36.6L932,36.5L931.5,36.3L931,36.7L930.5,36.2L930,36L929.5,36.1L929,36.6L928.5,36L928,36.1L927.5,37.3L927,37.4L926.5,36L926,35.6L925.5,37.5L925,37.3L924.5,36.5L924,36.7L923.5,36.4L923,36.9L922.5,35.3L922,36.6L921.5,35.3L921,35.1L920.5,35.7L920,35.2L919.5,35L919,34.8L918.5,35L918,35.5L917.5,35.4L917,36.3L916.5,36L916,36.2L915.5,36.2L915,36.4L914.5,37L914,37.2L913.5,36.3L913,36.3L912.5,36.7L912,37.1L911.5,37L911,36.3L910.5,36.4L910,36L909.5,35.8L909,35.5L908.5,35.4L908,35.4L907.5,36.3L907,36.6L906.5,38.3L906,36.4L905.5,37L905,36.6L904.5,35.9L904,35.9L903.5,35.5L903,36.1L902.5,35.9L902,36.6L901.5,36.6L901,36.2L900.5,37.5L900,36.1L899.5,35.8L899,35.4L898.5,34.9L898,36.1L897.5,36.3L897,35.7L896.5,35.4L896,35L895.5,35.8L895,36.4L894.5,36.5L894,36L893.5,36.5L893,36.7L892.5,36.7L892,36.5L891.5,36.2L891,36.1L890.5,36.1L890,36.5L889.5,36.1L889,35.8L888.5,35.9L888,35.9L887.5,35.7L887,35.3L886.5,36.4L886,37.1L885.5,36.1L885,35.2L884.5,36.3L884,36.6L883.5,36.7L883,37.7L882.5,36.4L882,35.7L881.5,35.8L881,36L880.5,36L880,36.2L879.5,36L879,35.9L878.5,35.8L878,35.5L877.5,34.7L877,35.6L876.5,35.9L876,35.8L875.5,35.9L875,35.6L874.5,36.4L874,36.1L873.5,36.4L873,36.1L872.5,36.6L872,36.6L871.5,36.5L871,36.2L870.5,36.2L870,36.2L869.5,36.2L869,36.5L868.5,35.7L868,35.7L867.5,35.9L867,35.3L866.5,35.8L866,35.4L865.5,36L865,36.3L864.5,37.4L864,36.7L863.5,36.9L863,37.3L862.5,36.8L862,36.3L861.5,36.3L861,35.7L860.5,36.2L860,36.3L859.5,36.4L859,36.2L858.5,36L858,35.9L857.5,36.6L857,36.2L856.5,36.4L856,37L855.5,36.9L855,36.5L854.5,37.2L854,37.8L853.5,37.2L853,37L852.5,37.4L852,37.5L851.5,36.7L851,36.4L850.5,36.5L850,36.5L849.5,35.8L849,37.9L848.5,35.7L848,35.8L847.5,35.9L847,36.2L846.5,35.7L846,36L845.5,36.3L845,36.1L844.5,36.4L844,35.8L843.5,37.6L843,35.9L842.5,36L842,36.1L841.5,35.7L841,35.5L840.5,35.6L840,35.9Z" class="kb"/>
<path d="M1066.2,34.6L1066.7,34.6L1067.2,30L1067.7,30L1068.2,30L1068.7,30L1069.2,30L1069.7,30L1070.2,30L1070.7,30L1071.2,30L1071.7,31L1072.2,60.9L1072.7,60.9L1073.2,60.9L1073.7,11.4L1074.2,13.4L1074.7,14.9L1075.2,18.3L1075.7,20.8L1076.2,23.1L1076.7,25.6L1077.2,27.2L1077.7,28.9L1078.2,29.5L1078.7,31L1079.2,31.5L1079.7,32.8L1080.2,33.2L1080.7,33.2L1081.2,33.5L1081.7,34.4L1082.2,34.3L1082.7,33.6L1083.2,33.9L1083.7,34.1L1084.2,34.1L1084.7,34.4L1085.2,34.3L1085.7,34.7L1086.2,34.6L1086.7,34.6L1087.2,34.4L1087.7,35.1L1088.2,34.4L1088.7,33.5L1089.2,35.4L1089.7,35L1090.2,35L1090.7,34.8L1091.2,35.1L1091.7,34.7L1092.2,33.9L1092.7,33.6L1093.2,34.1L1093.7,34.7L1094.2,35.1L1094.7,35.3L1095.2,30L1095.7,30L1096.2,30L1096.7,30L1097.2,30L1097.7,30L1098.2,30L1098.7,30L1099.2,30L1099.7,31L1100.2,60.9L1100.7,60.9L1101.2,60.9L1101.7,11.4L1102.2,13.5L1102.7,14.6L1103.2,18.6L1103.7,21.9L1104.2,24.6L1104.7,26.2L1105.2,27.7L1105.7,29.1L1106.2,30.3L1106.7,30.2L1107.2,32.6L1107.7,32.5L1108.2,33.4L1108.7,32.3L1109.2,33.2L1109.7,33.2L1110.2,34.3L1110.7,34L1111.2,34.4L1111.7,33.5L1112.2,33.9L1112.7,33.9L1113.2,34.4L1113.7,34.5L1114.2,34.2L1114.7,34.6L1115.2,34.6L1115.7,35.1L1116.2,34.7L1116.7,35.2L1117.2,34.7L1117.7,34.7L1118.2,34.3L1118.7,33.5L1119.2,34.3L1119.7,34.9L1120.2,33.6L1120.7,34L1121.2,34.2L1121.7,34.3L1122.2,34.4L1122.7,30L1123.2,30L1123.7,30L1124.2,30L1124.7,30L1125.2,30L1125.7,30L1126.2,30L1126.7,30L1127.2,31L1127.7,60.9L1128.2,60.9L1128.7,60.9L1129.2,11.4L1129.7,13.5L1130.2,14.9L1130.7,18.9L1131.2,22L1131.7,24.6L1132.2,26.2L1132.7,28L1133.2,28.5L1133.7,29.5L1134.2,30.9L1134.7,30.4L1135.2,30.8L1135.7,32.8L1136.2,31.7L1136.7,34L1137.2,33.8L1137.7,34.2L1138.2,34.4L1138.7,34.1L1139.2,34.7L1139.7,34.3L1140.2,34.3L1140.7,34.6L1141.2,33.8L1141.7,34L1142.2,34.5L1142.7,34.9L1143.2,35.2L1143.7,35.1L1144.2,34.9L1144.7,34.1L1145.2,34.2L1145.7,34L1146.2,34.3L1146.7,30L1147.2,30L1147.7,30L1148.2,30L1148.7,30L1149.2,30L1149.7,30L1150.2,30L1150.7,30L1151.2,31L1151.7,60.9L1152.2,60.9L1152.7,60.9L1153.2,11.4L1153.7,12.7L1154.2,13.9L1154.7,17.8L1155.2,20.9L1155.7,23.9L1156.2,26L1156.7,27.9L1157.2,29.6L1157.7,30.7L1158.2,31.2L1158.7,31.9L1159.2,32.2L1159.7,32.1L1160.2,31.7L1160.7,32.4L1161.2,32.8L1161.7,32.8L1162.2,33.8L1162.7,34.1L1163.2,34.3L1163.7,33.9L1164.2,34.8L1164.7,33.8L1165.2,34.6L1165.7,34.2L1166.2,34L1166.7,34.7L1167.2,35.2L1167.7,35.4L1168.2,35.9L1168.7,36.1L1169.2,36.2L1169.7,35.7L1170.2,30L1170.7,30L1171.2,30L1171.7,30L1172.2,30L1172.7,30L1173.2,30L1173.7,30L1174.2,31L1174.7,60.9L1175.2,60.9L1175.7,60.9L1176.2,11.4L1176.7,11.4L1177.2,12.1L1177.7,16.3L1178.2,19.5L1178.7,22.1L1179.2,25.6L1179.7,26.7L1180.2,28.1L1180.7,29.4L1181.2,30.2L1181.7,28.8L1182.2,31.9L1182.7,32.1L1183.2,32.6L1183.7,32.6L1184.2,34.2L1184.7,34.1L1185.2,33.8L1185.7,33.8L1186.2,34L1186.7,34.1L1187.2,34.4L1187.7,34.4L1188.2,34.6L1188.7,34.8L1189.2,32.9L1189.7,32.7L1190.2,34.3L1190.7,34.3L1191.2,34.2L1191.7,34.3L1192.2,34.3L1192.7,33.6L1193.2,34.2L1193.7,34.1L1194.2,34.1L1194.7,34.8L1195.2,35.2L1195.7,35.1L1196.2,35.7L1196.7,35.5L1197.2,35.2L1197.7,35.2L1198.2,34.7L1198.7,34.7L1199.2,33.7L1199.7,34.1L1200.2,34L1200.7,34L1201.2,34.4L1201.7,34.5L1202.2,35L1202.7,35.2L1203.2,35.3L1203.7,35.1L1204.2,34.7L1204.7,34.2L1205.2,35L1205.7,33.9L1206.2,35.5L1206.7,35.1L1207.2,35.3L1207.7,34.6L1208.2,34.1L1208.7,34.5L1209.2,34.1L1209.7,34.4L1210.2,34.1L1210.7,34.9L1211.2,34.3L1211.7,34L1212.2,34.2L1212.7,34.5L1213.2,34.8L1213.7,34.6L1214.2,33.9L1214.7,34.3L1215.2,35.3L1215.7,35.2L1216.2,35.4L1216.7,35.7L1217.2,35.1L1217.7,34.1L1218.2,35.5L1218.7,34.4L1219.2,35.5L1219.7,35.4L1220.2,34.8L1220.7,34.4L1221.2,35.2L1221.7,34.2L1222.2,35L1222.7,34.6L1223.2,35.4L1223.7,35.1L1224.2,34.3L1224.7,34.2L1225.2,34.4L1225.7,34.3L1226.2,35L1226.7,34.7L1227.2,34.7L1227.7,34.5L1228.2,34.4L1228.7,34L1229.2,34.8L1229.7,34.6L1230.2,34.7L1230.7,34.6L1231.2,34.9L1231.7,35.4L1232.2,34.7L1232.7,34.8L1233.2,35.1L1233.7,34.8L1234.2,35.1L1234.7,34.7L1235.2,35.5L1235.7,35.9L1236.2,35.5L1236.7,35L1237.2,34.6L1237.7,34.6L1238.2,33.8L1238.7,34.5L1239.2,34L1239.7,34.5L1240.2,34.5L1240.7,33.9L1241.2,34.4L1241.7,34.4L1242.2,34.2L1242.7,33.6L1243.2,34.1L1243.7,34.7L1244.2,34.9L1244.7,33.7L1245.2,33.6L1245.7,33.5L1246.2,33.7L1246.7,33.8L1247.2,33.2L1247.7,34.2L1248.2,34L1248.7,34L1249.2,35.5L1249.7,35.7L1250.2,35.5L1250.7,34.9L1251.2,35.4L1251.7,35.6L1252.2,35.8L1252.7,36.8L1253.2,35.7L1253.7,34.9L1254.2,36.4L1254.7,35.4L1255.2,35.2L1255.7,34.6L1256.2,34.4L1256.7,34.8L1257.2,34.3L1257.7,34.4L1258.2,34L1258.7,34L1259.2,34.7L1259.7,34.7L1260.2,34.3L1260.7,34.2L1261.2,34.1L1261.7,34.3L1262.2,34.8L1262.7,34L1263.2,34.7L1263.7,34.7L1264.2,34.4L1264.7,33.8L1265.2,33.8L1265.7,34.4L1266.2,34.2L1266.7,34.4L1267.2,33.8L1267.7,33.7L1268.2,33.4L1268.7,34.7L1269.2,34.6L1269.7,34.2L1270.2,34.3L1270.7,34.1L1271.2,33.4L1271.7,33.5L1272.2,33.8L1272.7,34.1L1273.2,34.6L1273.7,34.2L1274.2,33.8L1274.7,34.6L1275.2,34.9L1275.7,34.1L1276.2,34.5L1276.7,34.2L1277.2,33.9L1277.7,34L1278.2,34.4L1278.7,33.9L1279.2,34.5L1279.7,34.5L1280.2,33.2L1280.7,33.4L1281.2,33.7L1281.7,34.2L1282.2,34.2L1282.7,34.8L1283.2,34L1283.7,33.5L1284.2,34.6L1284.7,34.4L1285.2,34.5L1285.7,34.7L1286.2,34.4L1286.7,35L1287.2,34.9L1287.7,34.7L1288.2,34.8L1288.7,34.4L1289.2,34.7L1289.7,34.5L1290.2,35L1290.7,34.5L1291.2,34.5L1291.7,34.3L1292.2,34.9L1292.7,34.7L1293.2,34.6L1293.7,33.1L1294.2,34.5L1294.7,34.5L1295.2,34.5L1295.7,34.1L1296.2,34.3L1296.7,34.6L1297.2,34.1L1297.7,34L1298.2,34.4L1298.7,33.8L1299.2,34.1L1299.7,34.3L1300.2,34.2L1300.7,34.1L1301.2,33.5L1301.7,34.1L1302.2,33.9L1302.7,33.7L1303.2,34.5L1303.7,34.6L1304.2,34.6L1304.7,34.7L1305.2,34.5L1305.7,34.8L1306.2,33.9L1306.7,34.5L1307.2,34.5L1307.7,34.1L1308.2,34L1308.7,33.9L1309.2,34L1309.7,33.9L1310.2,33.9L1310.7,33.8L1311.2,34.6L1311.7,34.6L1312.2,35L1312.7,35.5L1313.2,35.2L1313.7,34.6L1314.2,34.8L1314.7,34.8L1315.2,34.7L1315.7,34.8L1316.2,34.7L1316.7,35L1317.2,34.7L1317.7,35.4L1318.2,35.1L1318.7,33.7L1319.2,34.2L1319.7,34.6L1320.2,35.2L1320.7,34.9L1321.2,35.3L1321.7,34.8L1322.2,35.1L1322.7,35.8L1323.2,35.7L1323.7,36.3L1324.2,36L1324.7,35.3L1325.2,35.1L1325.7,35.8L1326.2,35.8L1326.7,35.1L1327.2,36L1327.7,35.5L1328.2,35.1L1328.7,36.1L1329.2,34.8L1329.7,35.3L1330.2,35.3L1330.7,35.1L1331.2,35.2L1331.7,35.6L1332.2,36L1332.7,36.2L1333.2,34.7L1333.7,35.6L1334.2,35.6L1334.7,35.7L1335.2,35.1L1335.7,35.8L1336.2,35.3L1336.7,35.1L1337.2,35.3L1337.7,34L1338.2,35L1338.7,33.7L1339.2,34.9L1339.7,35L1340.2,34.6L1340.7,34.1L1341.2,34.1L1341.7,34.6L1342.2,33.2L1342.7,33.7L1343.2,34.5L1343.7,34.8L1344.2,34.1L1344.7,33.3L1345.2,33.6L1345.7,33.6L1346.2,33.4L1346.7,33.7L1347.2,34.4L1347.7,34.2L1348.2,34.2L1348.7,34.4L1349.2,34.7L1349.7,34.6L1350.2,34.8L1350.7,35.2L1351.2,34.5L1351.7,34.8L1352.2,34.8L1352.7,34.7L1353.2,34.4L1353.7,34.3L1354.2,35L1354.7,34.6L1355.2,36.2L1355.7,36.3L1356.2,35.2L1356.7,34.9L1357.2,35.2L1357.7,35.2L1358.2,35.1L1358.7,34.5L1359.2,35L1359.7,34.7L1360.2,33.3L1360.7,35.2L1361.2,34.7L1361.7,34.9L1362.2,34.4L1362.7,35.2L1363.2,35L1363.7,35.1L1364.2,35.3L1364.7,35L1365.2,34.6L1365.7,35.4L1366.2,35L1366.7,35.2L1367.2,34.9L1367.7,34.6L1368.2,34.1L1368.7,34.7L1369.2,34.6L1369.7,33.9L1370.2,34L1370.7,33.9L1371.2,33.6L1371.7,34L1372.2,33.7L1372.7,33.6L1373.2,34L1373.7,33.1L1374.2,33.5L1374.7,33.8L1375.2,34L1375.7,34.4L1376.2,33.8L1376.7,35.1L1377.2,34.3L1377.7,34.6L1378.2,34.5L1378.7,34.4L1379.2,34.5L1379.7,34.1L1380.2,34.4L1380.7,35.2L1381.2,35.3L1381.7,34.4L1382.2,34.8L1382.7,35L1383.2,32.7L1383.7,34.1L1384.2,33.8L1384.7,34L1385.2,34.3L1385.7,34L1386.2,34L1386.7,34.4L1387.2,35L1387.7,35.2L1388.2,35.5L1388.7,34.4L1389.2,34.5L1389.7,35.1L1390.2,34.6L1390.7,35L1391.2,34.4L1391.7,34.7L1392.2,35.3L1392.7,34.7L1393.2,33.2L1393.7,35.2L1394.2,34.3L1394.7,35L1395.2,35.4L1395.7,34.4L1396.2,34.4L1396.7,34.6L1397.2,34.7L1397.7,34L1398.2,34.8L1398.7,34.9L1399.2,34.8L1399.7,35L1400.2,35.1L1400.7,35.1L1401.2,34.9L1401.7,35.3L1402.2,34.3L1402.7,34.8L1403.2,33.5L1403.7,34.6L1404.2,34.4L1404.7,34.3L1405.2,34L1405.7,33.7L1406.2,33.8L1406.7,34.6L1407.2,35.3L1407.7,35.6L1408.2,35L1408.7,36.1L1409.2,35.4L1409.7,35.3L1410.2,35.5L1410.7,35.5L1411.2,35.4L1411.7,35L1412.2,35.5L1412.7,35L1413.2,34L1413.7,33.1L1414.2,34.8L1414.7,34.1L1415.2,34.2L1415.7,34.5L1416.2,34.6L1416.7,34.4L1417.2,34.7L1417.7,33.8L1418.2,34.5L1418.7,33.9L1419.2,34.7L1419.7,34.4L1420.2,34.6L1420.7,32.7L1421.2,33.9L1421.7,33.7L1422.2,33.7L1422.7,33.3L1423.2,31.6L1423.7,34.4L1424.2,34.6L1424.2,36.3L1423.7,35.5L1423.2,34.9L1422.7,34.7L1422.2,35.5L1421.7,35.4L1421.2,35.6L1420.7,35.8L1420.2,36.1L1419.7,36.2L1419.2,36.3L1418.7,35.9L1418.2,36L1417.7,35.9L1417.2,36.2L1416.7,36L1416.2,36.3L1415.7,36L1415.2,35.9L1414.7,35.7L1414.2,36.1L1413.7,36.5L1413.2,36.1L1412.7,36.5L1412.2,37.2L1411.7,36.7L1411.2,36.6L1410.7,37.2L1410.2,36.9L1409.7,36.7L1409.2,36.9L1408.7,37.4L1408.2,36.5L1407.7,36.9L1407.2,36.8L1406.7,35.7L1406.2,35.1L1405.7,35.7L1405.2,35.5L1404.7,35.4L1404.2,35.8L1403.7,36.4L1403.2,36.1L1402.7,36.1L1402.2,35.9L1401.7,36.8L1401.2,36.4L1400.7,36.7L1400.2,37.9L1399.7,36.6L1399.2,36.3L1398.7,36.5L1398.2,38.4L1397.7,36.1L1397.2,36.7L1396.7,36.2L1396.2,37.9L1395.7,36.3L1395.2,36.4L1394.7,36.8L1394.2,36.6L1393.7,36.4L1393.2,36.1L1392.7,36.3L1392.2,37L1391.7,36.4L1391.2,36.1L1390.7,35.9L1390.2,36.3L1389.7,36.5L1389.2,36L1388.7,36.4L1388.2,36.6L1387.7,36.6L1387.2,36.1L1386.7,35.8L1386.2,35.2L1385.7,35.6L1385.2,35.7L1384.7,36.2L1384.2,35L1383.7,37.2L1383.2,35.6L1382.7,36.6L1382.2,36.6L1381.7,35.9L1381.2,36.9L1380.7,36.7L1380.2,36.1L1379.7,35.8L1379.2,35.5L1378.7,36L1378.2,37.4L1377.7,35.9L1377.2,35.9L1376.7,36.4L1376.2,35.5L1375.7,35.6L1375.2,35.2L1374.7,35.4L1374.2,35L1373.7,35.1L1373.2,35.3L1372.7,35.4L1372.2,35.3L1371.7,35.7L1371.2,35.2L1370.7,35.7L1370.2,35.6L1369.7,35.8L1369.2,36.5L1368.7,36.3L1368.2,35.7L1367.7,36.2L1367.2,36.5L1366.7,36.8L1366.2,36.2L1365.7,37.9L1365.2,36L1364.7,36.2L1364.2,37.1L1363.7,36.7L1363.2,36.5L1362.7,36.6L1362.2,36.1L1361.7,36.3L1361.2,36.1L1360.7,36.6L1360.2,36.8L1359.7,36.3L1359.2,36.3L1358.7,35.8L1358.2,36.5L1357.7,36.7L1357.2,36.5L1356.7,36.1L1356.2,37L1355.7,39.2L1355.2,37.3L1354.7,36.4L1354.2,36.4L1353.7,35.5L1353.2,35.7L1352.7,35.8L1352.2,36.1L1351.7,36.1L1351.2,35.9L1350.7,36.5L1350.2,36.6L1349.7,36L1349.2,36.6L1348.7,35.7L1348.2,35.5L1347.7,35.4L1347.2,35.6L1346.7,35.2L1346.2,34.8L1345.7,35.3L1345.2,35.6L1344.7,35L1344.2,35.2L1343.7,37.8L1343.2,35.8L1342.7,35.1L1342.2,34.8L1341.7,36.2L1341.2,35.5L1340.7,36.1L1340.2,36L1339.7,36.1L1339.2,36.4L1338.7,36.3L1338.2,36.8L1337.7,36L1337.2,36.8L1336.7,36.5L1336.2,36.7L1335.7,36.7L1335.2,37L1334.7,36.9L1334.2,37L1333.7,36.9L1333.2,37.1L1332.7,37.5L1332.2,37.2L1331.7,37.6L1331.2,37.1L1330.7,36.3L1330.2,36.8L1329.7,37.1L1329.2,36.9L1328.7,37.3L1328.2,36.4L1327.7,37.2L1327.2,37.3L1326.7,37L1326.2,37.1L1325.7,36.9L1325.2,36.5L1324.7,37.8L1324.2,37.2L1323.7,37.3L1323.2,37.5L1322.7,38.4L1322.2,37.9L1321.7,36.2L1321.2,37L1320.7,36.2L1320.2,36.1L1319.7,37L1319.2,36L1318.7,35.5L1318.2,36.5L1317.7,36.7L1317.2,36.7L1316.7,36.6L1316.2,36.4L1315.7,36.1L1315.2,36.6L1314.7,36.2L1314.2,36.3L1313.7,37.6L1313.2,36.9L1312.7,36.8L1312.2,36.7L1311.7,35.9L1311.2,35.9L1310.7,37.1L1310.2,35.4L1309.7,35.2L1309.2,35.5L1308.7,35.9L1308.2,35.3L1307.7,35.5L1307.2,35.9L1306.7,35.7L1306.2,35.4L1305.7,36.7L1305.2,36.4L1304.7,36.5L1304.2,36.3L1303.7,35.9L1303.2,35.8L1302.7,35L1302.2,35.5L1301.7,35.8L1301.2,35.4L1300.7,35.5L1300.2,36L1299.7,35.6L1299.2,37.2L1298.7,35.3L1298.2,36L1297.7,35.7L1297.2,35.5L1296.7,35.9L1296.2,35.5L1295.7,36.1L1295.2,36.4L1294.7,36.3L1294.2,36.1L1293.7,36.3L1293.2,36.2L1292.7,35.9L1292.2,36L1291.7,36.3L1291.2,35.7L1290.7,36L1290.2,36.8L1289.7,36.4L1289.2,36.6L1288.7,36.3L1288.2,38L1287.7,36.4L1287.2,36.3L1286.7,36.2L1286.2,36.5L1285.7,36.1L1285.2,36.6L1284.7,36L1284.2,36.6L1283.7,35.7L1283.2,35.6L1282.7,36L1282.2,35.8L1281.7,36L1281.2,35.4L1280.7,35.2L1280.2,34.9L1279.7,35.8L1279.2,36.3L1278.7,35.2L1278.2,35.8L1277.7,36L1277.2,36.7L1276.7,35.8L1276.2,35.6L1275.7,35.8L1275.2,36.1L1274.7,36.1L1274.2,36.1L1273.7,35.3L1273.2,35.8L1272.7,35.8L1272.2,35.7L1271.7,35L1271.2,35L1270.7,37.8L1270.2,35.7L1269.7,35.4L1269.2,36L1268.7,35.6L1268.2,35.5L1267.7,35.1L1267.2,36.6L1266.7,35.9L1266.2,35.5L1265.7,35.9L1265.2,35.6L1264.7,34.9L1264.2,35.6L1263.7,36.2L1263.2,35.9L1262.7,35.7L1262.2,36.1L1261.7,35.8L1261.2,35.9L1260.7,35.7L1260.2,36.2L1259.7,36.2L1259.2,36.7L1258.7,35.9L1258.2,35.8L1257.7,35.8L1257.2,35.8L1256.7,36L1256.2,35.9L1255.7,35.9L1255.2,37.1L1254.7,37L1254.2,38.6L1253.7,36.8L1253.2,37L1252.7,37.9L1252.2,36.9L1251.7,37.4L1251.2,38L1250.7,36.4L1250.2,37L1249.7,37.3L1249.2,36.9L1248.7,35.5L1248.2,35.1L1247.7,35.3L1247.2,37L1246.7,35.2L1246.2,35.4L1245.7,35.2L1245.2,34.6L1244.7,35.1L1244.2,36.3L1243.7,35.9L1243.2,36.2L1242.7,35.4L1242.2,36L1241.7,35.9L1241.2,35.7L1240.7,35.7L1240.2,36.5L1239.7,35.9L1239.2,35.9L1238.7,36.1L1238.2,35.7L1237.7,37.4L1237.2,35.8L1236.7,36.3L1236.2,37.2L1235.7,37.4L1235.2,37.3L1234.7,36.5L1234.2,36.4L1233.7,36.5L1233.2,36.3L1232.7,36.4L1232.2,36.6L1231.7,37L1231.2,36.2L1230.7,36.4L1230.2,36.1L1229.7,36.5L1229.2,36.7L1228.7,35.4L1228.2,35.6L1227.7,36.2L1227.2,36.1L1226.7,37.9L1226.2,37.6L1225.7,35.8L1225.2,36.2L1224.7,36L1224.2,35.7L1223.7,36.9L1223.2,36.4L1222.7,36.3L1222.2,36.4L1221.7,37.6L1221.2,36.4L1220.7,36.1L1220.2,36.6L1219.7,37.2L1219.2,37.4L1218.7,37.3L1218.2,36.8L1217.7,37.3L1217.2,36.8L1216.7,37.1L1216.2,37.1L1215.7,36.7L1215.2,36.4L1214.7,36L1214.2,35.3L1213.7,36.2L1213.2,36.4L1212.7,36.5L1212.2,36.2L1211.7,35.4L1211.2,36.3L1210.7,36.4L1210.2,36L1209.7,36L1209.2,35.6L1208.7,36L1208.2,36.2L1207.7,36.4L1207.2,36.8L1206.7,36.8L1206.2,36.9L1205.7,36.2L1205.2,36.4L1204.7,35.8L1204.2,36.3L1203.7,36.6L1203.2,37L1202.7,36.3L1202.2,36.4L1201.7,35.9L1201.2,36.1L1200.7,35.7L1200.2,35.5L1199.7,35.4L1199.2,35.7L1198.7,36.6L1198.2,36.4L1197.7,36.9L1197.2,36.9L1196.7,36.6L1196.2,37.5L1195.7,36.6L1195.2,36.5L1194.7,35.9L1194.2,36.5L1193.7,35.7L1193.2,35.6L1192.7,34.8L1192.2,35.9L1191.7,36.4L1191.2,35.9L1190.7,35.7L1190.2,35.6L1189.7,35.3L1189.2,35.3L1188.7,36.4L1188.2,35.7L1187.7,36.1L1187.2,35.7L1186.7,35.7L1186.2,35.3L1185.7,35.4L1185.2,35.5L1184.7,36L1184.2,35.3L1183.7,34.9L1183.2,34.1L1182.7,33.5L1182.2,32.9L1181.7,32.6L1181.2,31.4L1180.7,30.5L1180.2,30L1179.7,28.1L1179.2,27.3L1178.7,26.5L1178.2,22.1L1177.7,19.5L1177.2,16.3L1176.7,12.1L1176.2,60.9L1175.7,60.9L1175.2,60.9L1174.7,60.9L1174.2,60.9L1173.7,31L1173.2,31L1172.7,31L1172.2,31L1171.7,31L1171.2,31L1170.7,31L1170.2,35.7L1169.7,36.9L1169.2,37.5L1168.7,37.7L1168.2,37.2L1167.7,36.9L1167.2,37.5L1166.7,36L1166.2,35.7L1165.7,35.7L1165.2,36.2L1164.7,35.5L1164.2,36.2L1163.7,35.3L1163.2,35.8L1162.7,35.6L1162.2,35.3L1161.7,36.5L1161.2,34L1160.7,34.1L1160.2,33.6L1159.7,33.7L1159.2,33.7L1158.7,32.9L1158.2,32.6L1157.7,32.1L1157.2,31.5L1156.7,29.6L1156.2,27.9L1155.7,26L1155.2,23.9L1154.7,20.9L1154.2,17.8L1153.7,13.9L1153.2,60.9L1152.7,60.9L1152.2,60.9L1151.7,60.9L1151.2,60.9L1150.7,31L1150.2,31L1149.7,31L1149.2,31L1148.7,31L1148.2,31L1147.7,31L1147.2,31L1146.7,34.3L1146.2,35.9L1145.7,35.9L1145.2,35.8L1144.7,36.1L1144.2,36.7L1143.7,36.6L1143.2,36.8L1142.7,36.6L1142.2,35.8L1141.7,35.2L1141.2,35.4L1140.7,36.1L1140.2,35.5L1139.7,35.4L1139.2,37.8L1138.7,35.8L1138.2,36.2L1137.7,36L1137.2,35.8L1136.7,35.9L1136.2,34.4L1135.7,34.5L1135.2,34.2L1134.7,32.9L1134.2,33.6L1133.7,30.9L1133.2,30.3L1132.7,29.7L1132.2,28L1131.7,26.4L1131.2,24.6L1130.7,22L1130.2,18.9L1129.7,14.9L1129.2,60.9L1128.7,60.9L1128.2,60.9L1127.7,60.9L1127.2,60.9L1126.7,31L1126.2,31L1125.7,31L1125.2,31L1124.7,31L1124.2,31L1123.7,31L1123.2,31L1122.7,34.4L1122.2,35.8L1121.7,35.7L1121.2,35.6L1120.7,35.3L1120.2,34.9L1119.7,36.3L1119.2,35.6L1118.7,36.5L1118.2,35.8L1117.7,36.2L1117.2,36.4L1116.7,36.8L1116.2,36.3L1115.7,36.5L1115.2,36.4L1114.7,36.5L1114.2,35.5L1113.7,36L1113.2,36.2L1112.7,35.5L1112.2,35.3L1111.7,35.8L1111.2,35.4L1110.7,37.1L1110.2,35.7L1109.7,34.5L1109.2,35.1L1108.7,34.7L1108.2,36.3L1107.7,34.2L1107.2,33.4L1106.7,32.8L1106.2,31.8L1105.7,30.5L1105.2,29.2L1104.7,27.9L1104.2,26.7L1103.7,24.6L1103.2,21.9L1102.7,18.6L1102.2,14.6L1101.7,60.9L1101.2,60.9L1100.7,60.9L1100.2,60.9L1099.7,60.9L1099.2,31L1098.7,31L1098.2,31L1097.7,31L1097.2,31L1096.7,31L1096.2,31L1095.7,31L1095.2,35.3L1094.7,36.6L1094.2,36.4L1093.7,36.2L1093.2,35.5L1092.7,35.5L1092.2,35.9L1091.7,35.7L1091.2,36.3L1090.7,36.6L1090.2,36.3L1089.7,36.4L1089.2,37L1088.7,36.4L1088.2,36L1087.7,36.2L1087.2,35.9L1086.7,36.1L1086.2,36.4L1085.7,36.7L1085.2,36L1084.7,36L1084.2,36.1L1083.7,35.6L1083.2,35.6L1082.7,35.2L1082.2,35.8L1081.7,36.1L1081.2,35.2L1080.7,34.9L1080.2,34.9L1079.7,34.3L1079.2,33.1L1078.7,32.6L1078.2,31.4L1077.7,30.3L1077.2,28.9L1076.7,27.2L1076.2,25.6L1075.7,24.7L1075.2,20.8L1074.7,18.3L1074.2,14.9L1073.7,60.9L1073.2,60.9L1072.7,60.9L1072.2,60.9L1071.7,60.9L1071.2,31L1070.7,31L1070.2,31L1069.7,31L1069.2,31L1068.7,31L1068.2,31L1067.7,31L1067.2,34.6L1066.7,35.7L1066.2,36.3Z" class="bl"/>
<path d="M1067,10.9V61.4" class="ml"/>
<path d="M1095,10.9V61.4" class="ml"/>
<path d="M1122.5,10.9V61.4" class="ml"/>
<path d="M1146.6,10.9V61.4" class="ml"/>
<path d="M1169.8,10.9V61.4" class="ml"/>
<path d="M1191.8,10.9V61.4" class="ml"/>
<path d="M1384.4,10.9V61.4" class="ml"/>
<path d="M840,86.2L840.5,85.8L841,83.3L841.5,85.4L842,85.3L842.5,84.5L843,85.6L843.5,86.5L844,87.1L844.5,86.7L845,86.4L845.5,86.1L846,87.4L846.5,86.7L847,84.3L847.5,86.2L848,87.9L848.5,87.8L849,88.1L849.5,86.5L850,86.6L850.5,85.8L851,86.3L851.5,86.4L852,86.3L852.5,87L853,86.6L853.5,85.8L854,86.4L854.5,85.8L855,86.3L855.5,87.9L856,84L856.5,87.2L857,85.6L857.5,86.8L858,87.8L858.5,87.4L859,86.5L859.5,86.7L860,86.2L860.5,86.2L861,86.4L861.5,87L862,87.3L862.5,87.2L863,86.8L863.5,86.1L864,86.6L864.5,85.1L865,86.6L865.5,83.7L866,88.3L866.5,88.2L867,87.3L867.5,88.1L868,87.1L868.5,88.1L869,87.5L869.5,87.3L870,86.9L870.5,86.3L871,83.8L871.5,88.9L872,87.7L872.5,88.3L873,87.1L873.5,87.1L874,87.8L874.5,87.4L875,87L875.5,87.9L876,85.6L876.5,84.5L877,85.2L877.5,84.9L878,86.6L878.5,85.9L879,86L879.5,85.7L880,85.1L880.5,84.9L881,83.3L881.5,87.4L882,86.8L882.5,86.7L883,87.6L883.5,88.9L884,88.1L884.5,86.7L885,86.2L885.5,85.5L886,86.4L886.5,85.5L887,85.2L887.5,88.4L888,83.1L888.5,85L889,85.5L889.5,85.7L890,87.1L890.5,87.9L891,87.4L891.5,87.5L892,85.9L892.5,85.3L893,86.4L893.5,86.3L894,86.3L894.5,85.8L895,84.5L895.5,81.9L896,86.6L896.5,86.5L897,85.8L897.5,72.3L898,83.9L898.5,87.1L899,86.5L899.5,87.3L900,87.6L900.5,87.3L901,87.8L901.5,86.9L902,88.3L902.5,87.3L903,87.5L903.5,85.7L904,86L904.5,84.3L905,87.1L905.5,86.4L906,85.9L906.5,86.4L907,85.3L907.5,86L908,85.2L908.5,84.1L909,85.5L909.5,84.3L910,83.9L910.5,85.4L911,85.1L911.5,86.1L912,86.2L912.5,85L913,84.3L913.5,85.2L914,85.4L914.5,86.5L915,87.6L915.5,88.1L916,86.9L916.5,86.4L917,86.9L917.5,87.3L918,82.6L918.5,87L919,89.1L919.5,87.7L920,85.5L920.5,86.7L921,87.1L921.5,85.8L922,87.4L922.5,86.9L923,85.7L923.5,85.1L924,85L924.5,85.9L925,85L925.5,84.3L926,86L926.5,85.7L927,86.2L927.5,87.7L928,87.2L928.5,86.1L929,86.1L929.5,85.4L930,85.9L930.5,85L931,84L931.5,85.3L932,84.2L932.5,86L933,84.6L933.5,87.5L934,85.1L934.5,86.5L935,87L935.5,87.4L936,87.2L936.5,86.4L937,86.1L937.5,85.3L938,87.3L938.5,88.3L939,87.9L939.5,88.6L940,89.1L940.5,86.7L941,87L941.5,86.4L942,87.8L942.5,85.4L943,85.9L943.5,77.3L944,86.7L944.5,86.6L945,87.5L945.5,84.8L946,88L946.5,87.3L947,88.1L947.5,88.1L948,87L948.5,82.9L949,87.1L949.5,86.9L950,85.6L950.5,86.3L951,86L951.5,83.8L952,87.4L952.5,85.2L953,87.9L953.5,87.7L954,87L954.5,86.2L955,86.3L955.5,85L956,87.5L956.5,86.7L957,86.3L957.5,86.1L958,86.4L958.5,87.7L959,88.4L959.5,91.4L960,89.8L960.5,83L961,74.3L961.5,89.2L962,88.5L962.5,88.9L963,88.5L963.5,87.9L964,88.5L964.5,86.2L965,86.3L965.5,81.2L966,83.8L966.5,82.1L967,83.4L967.5,83.4L968,83.3L968.5,85.6L969,82.5L969.5,84.7L970,83.7L970.5,83.5L971,88.7L971.5,84.1L972,84.7L972.5,82.9L973,85.5L973.5,85.2L974,86.4L974.5,86.6L975,86.2L975.5,84.2L976,86.2L976.5,86L977,86.8L977.5,87L978,87.8L978.5,83.4L979,87.6L979.5,87.5L980,87.2L980.5,86.6L981,85.7L981.5,84.9L982,82.6L982.5,87.2L983,86.2L983.5,85.6L984,76.6L984.5,85.4L985,83.8L985.5,83.9L986,84.7L986.5,84.5L987,82.8L987.5,85.9L988,85.9L988.5,86.8L989,84.8L989.5,85.4L990,82L990.5,85.4L991,86.1L991.5,82.7L992,82L992.5,84.9L993,84.8L993.5,89.2L994,88.4L994.5,79.8L995,86.9L995.5,85.8L996,85.6L996.5,83.6L997,84.3L997.5,84.9L998,86.4L998.5,85.2L999,86.7L999.5,87.6L1000,89.3L1000.5,86.9L1001,87.7L1001.5,81.2L1002,83.5L1002.5,77.9L1003,87.7L1003.5,86.5L1004,85.5L1004.5,86L1005,88.1L1005.5,87.6L1006,88L1006.5,78.6L1007,81L1007.5,85.3L1008,86.5L1008.5,83.9L1009,80.4L1009.5,83.5L1010,84.6L1010.5,74.4L1011,84.5L1011.5,86L1012,86.9L1012.5,87.6L1013,86.5L1013.5,87.5L1014,85.6L1014.5,76.4L1015,87L1015.5,88.5L1016,87.5L1016.5,88.5L1017,87L1017.5,82.3L1018,85L1018.5,77.1L1019,87.4L1019.5,85.9L1020,85.3L1020.5,85.9L1021,87L1021.5,87.1L1022,85.8L1022.5,77.5L1023,86.6L1023.5,76.9L1024,77.8L1024.5,79.9L1025,85.3L1025.5,84.2L1026,74.2L1026.5,84.2L1027,84.3L1027.5,83.4L1028,84.9L1028.5,84.6L1029,86.4L1029.5,82.8L1030,77.1L1030.5,85L1031,78.4L1031.5,85.8L1032,84.8L1032.5,83.3L1033,83.7L1033.5,86.1L1034,84.7L1034.5,87.7L1035,79.7L1035.5,85.5L1036,85.9L1036.5,85L1037,76L1037.5,74L1038,86.1L1038.5,86.9L1039,87.1L1039.5,87L1040,89.3L1040.5,87.6L1041,87.7L1041.5,77.7L1042,88.4L1042.5,89.3L1043,79.1L1043.5,88L1044,89.1L1044.5,78.6L1045,82.5L1045.5,84.4L1046,87.1L1046.5,82.6L1047,87.3L1047.5,85.7L1048,84.8L1048.5,85.5L1049,85.7L1049.5,85.7L1050,79.9L1050.5,77.7L1051,79.4L1051.5,87.2L1052,87.2L1052.5,85.2L1053,78L1053.5,87.6L1054,80.2L1054.5,87.1L1055,84.1L1055.5,85.2L1056,86.5L1056.5,84.9L1057,74.3L1057.5,84.5L1058,85.8L1058.5,86.2L1059,85.4L1059.5,88.4L1060,87.2L1060.5,79.9L1061,87.8L1061.5,85.1L1062,86.9L1062.5,89.5L1063,76.3L1063.5,87.6L1064,88.5L1064.5,86L1065,80.7L1065.5,86.8L1066,86.3L1066,91.8L1065.5,92L1065,106.3L1064.5,90.1L1064,105.7L1063.5,92.5L1063,91.9L1062.5,92.9L1062,91.9L1061.5,104L1061,104.2L1060.5,93.9L1060,91.2L1059.5,101.6L1059,91.2L1058.5,89.9L1058,102.3L1057.5,89L1057,90.2L1056.5,88.7L1056,90L1055.5,88.9L1055,101.9L1054.5,91.6L1054,100.6L1053.5,91.5L1053,93.3L1052.5,104L1052,98.7L1051.5,90.9L1051,98.1L1050.5,104.9L1050,90.5L1049.5,90.7L1049,103.6L1048.5,90.2L1048,87.7L1047.5,101.1L1047,92.5L1046.5,91.3L1046,92.8L1045.5,94.2L1045,93.4L1044.5,94.2L1044,101.3L1043.5,93L1043,99.9L1042.5,93.8L1042,91.7L1041.5,104.8L1041,92.6L1040.5,96.9L1040,93.8L1039.5,91L1039,91.7L1038.5,100.6L1038,103.3L1037.5,90.9L1037,88.3L1036.5,89.8L1036,94.4L1035.5,102.9L1035,90.4L1034.5,91.1L1034,89.8L1033.5,100.8L1033,88.4L1032.5,89.1L1032,98.1L1031.5,90.3L1031,91.5L1030.5,100.1L1030,92.1L1029.5,90.9L1029,101.8L1028.5,94L1028,88L1027.5,93.7L1027,99L1026.5,93.9L1026,89.3L1025.5,89.8L1025,90.6L1024.5,90.6L1024,92.1L1023.5,91.2L1023,91L1022.5,88.9L1022,91.6L1021.5,90.5L1021,89.9L1020.5,89.9L1020,88.9L1019.5,89.2L1019,92.2L1018.5,90.6L1018,90.2L1017.5,89.7L1017,92.1L1016.5,91L1016,102L1015.5,92.7L1015,91.4L1014.5,89.3L1014,90L1013.5,90.1L1013,91.8L1012.5,90.7L1012,90.2L1011.5,96.4L1011,89.8L1010.5,88.9L1010,92.3L1009.5,88.8L1009,87.9L1008.5,87.7L1008,100.1L1007.5,88.4L1007,89L1006.5,89.9L1006,91.8L1005.5,90.8L1005,99.6L1004.5,94L1004,91.1L1003.5,90.8L1003,92.8L1002.5,97.4L1002,97.1L1001.5,89.9L1001,95.5L1000.5,92L1000,92.5L999.5,99.1L999,89.7L998.5,90.5L998,100.5L997.5,96.2L997,90.1L996.5,87L996,88.6L995.5,94.1L995,90.3L994.5,97.4L994,93.4L993.5,91.9L993,98.5L992.5,90.5L992,89.1L991.5,90.3L991,91.7L990.5,89.5L990,88.9L989.5,90.5L989,90.1L988.5,91.2L988,90.5L987.5,91.1L987,89.5L986.5,88L986,89.5L985.5,95.6L985,100.3L984.5,93.8L984,98.5L983.5,89.6L983,90.5L982.5,90.9L982,90.5L981.5,89.1L981,89.3L980.5,91L980,106.3L979.5,90.9L979,91.6L978.5,91.6L978,94.7L977.5,91.1L977,90.9L976.5,90L976,93.3L975.5,95.6L975,90.1L974.5,92.9L974,89.5L973.5,89.5L973,89.9L972.5,94L972,87.8L971.5,89.8L971,91.6L970.5,91.1L970,90.8L969.5,90L969,95.1L968.5,88L968,88.5L967.5,87.1L967,87L966.5,86.3L966,88L965.5,89.6L965,90.1L964.5,93.9L964,91.9L963.5,91.9L963,91.2L962.5,92.1L962,92.2L961.5,111.3L961,93.2L960.5,92.5L960,94L959.5,94.2L959,93.4L958.5,90.9L958,90.3L957.5,90.4L957,94.2L956.5,89.5L956,90.5L955.5,91.1L955,90.1L954.5,90.8L954,90.5L953.5,91.9L953,91.2L952.5,91.9L952,89.9L951.5,91.3L951,89.6L950.5,92.2L950,90.7L949.5,90.3L949,95.7L948.5,90.4L948,91.3L947.5,90.8L947,96.8L946.5,91.2L946,91.1L945.5,92.7L945,90.7L944.5,90.9L944,106.3L943.5,88.8L943,89.7L942.5,92.7L942,90.5L941.5,90.1L941,90.6L940.5,90.4L940,92L939.5,92.3L939,91.2L938.5,91.3L938,90.6L937.5,89.2L937,93.7L936.5,89L936,90.8L935.5,90.3L935,91L934.5,89L934,89.7L933.5,90.8L933,88.4L932.5,88.5L932,88.9L931.5,89.5L931,87.6L930.5,89.1L930,92.4L929.5,89L929,89.9L928.5,89.2L928,90.2L927.5,90.4L927,89.4L926.5,92.8L926,99.3L925.5,87.1L925,88.9L924.5,88.7L924,87.9L923.5,87.6L923,88.4L922.5,89.5L922,90.4L921.5,90.4L921,90.8L920.5,90.4L920,89.3L919.5,90.2L919,92.8L918.5,90.1L918,90.2L917.5,92.2L917,90.8L916.5,95.1L916,89.9L915.5,91.4L915,97.3L914.5,92.9L914,93.9L913.5,89L913,93.9L912.5,89.1L912,88.7L911.5,89.8L911,89L910.5,87.9L910,87.6L909.5,87.7L909,88.8L908.5,88.6L908,88.3L907.5,88.8L907,92.3L906.5,90.7L906,89.7L905.5,89.2L905,90.1L904.5,88.8L904,91.1L903.5,94L903,90.7L902.5,89.9L902,91.8L901.5,90.7L901,92L900.5,90.6L900,91.4L899.5,90.8L899,90.1L898.5,90.6L898,105.3L897.5,88L897,89.2L896.5,89.4L896,89.9L895.5,88.2L895,90.1L894.5,89.5L894,89.8L893.5,89L893,89.2L892.5,88.9L892,90.3L891.5,91.1L891,95.2L890.5,90.6L890,91.8L889.5,89.1L889,89.7L888.5,92L888,89.2L887.5,91.9L887,91.5L886.5,87.5L886,88.7L885.5,89.7L885,89.3L884.5,90.8L884,91.2L883.5,95.1L883,91.4L882.5,90.5L882,91L881.5,90.2L881,88.7L880.5,87.9L880,88L879.5,89.7L879,88.9L878.5,89.3L878,89.4L877.5,88.8L877,87.9L876.5,87.2L876,94.2L875.5,90.9L875,91.4L874.5,90.9L874,92.5L873.5,91.4L873,91.1L872.5,90.8L872,90.4L871.5,92.7L871,90.6L870.5,90.8L870,90L869.5,90.6L869,91.6L868.5,91.5L868,90.5L867.5,90.4L867,91.4L866.5,91.4L866,91.5L865.5,89.3L865,89.8L864.5,91.2L864,90.7L863.5,89.7L863,90.7L862.5,94.3L862,90.9L861.5,92L861,89.4L860.5,89.9L860,90.4L859.5,90.5L859,89.4L858.5,90L858,90.8L857.5,90.9L857,89.4L856.5,90L856,94.1L855.5,91.4L855,89.9L854.5,89.9L854,88.9L853.5,89.2L853,90.1L852.5,89.6L852,89.2L851.5,89.5L851,90.8L850.5,94.5L850,90.8L849.5,90.2L849,91.4L848.5,91.7L848,91.9L847.5,89.8L847,90.6L846.5,92.6L846,91.4L845.5,89.9L845,90L844.5,89.6L844,89.8L843.5,89.2L843,88L842.5,88L842,87.3L841.5,88.3L841,88.2L840.5,88.7L840,92.7Z" class="kb"/>
<path d="M1066.2,66.9L1066.7,86.6L1067.2,87.8L1067.7,87.8L1068.2,87.8L1068.7,87.8L1069.2,87.8L1069.7,87.8L1070.2,87.8L1070.7,87.8L1071.2,87.8L1071.7,88.8L1072.2,113.8L1072.7,113.8L1073.2,63.7L1073.7,63.9L1074.2,63.7L1074.7,63.7L1075.2,70L1075.7,70L1076.2,74.8L1076.7,63.7L1077.2,63.7L1077.7,74.3L1078.2,78.5L1078.7,79.1L1079.2,81L1079.7,65.5L1080.2,83.1L1080.7,83.4L1081.2,80.6L1081.7,80L1082.2,67.4L1082.7,72.2L1083.2,84.7L1083.7,81.5L1084.2,82.3L1084.7,70L1085.2,73.3L1085.7,88.7L1086.2,87.3L1086.7,86.2L1087.2,86.5L1087.7,66.2L1088.2,65.9L1088.7,86.7L1089.2,82.2L1089.7,86.1L1090.2,68.1L1090.7,68.6L1091.2,87.6L1091.7,87.5L1092.2,89.7L1092.7,84.8L1093.2,63.7L1093.7,86.8L1094.2,87.9L1094.7,87.5L1095.2,87.8L1095.7,87.8L1096.2,87.8L1096.7,87.8L1097.2,87.8L1097.7,87.8L1098.2,87.8L1098.7,87.8L1099.2,87.8L1099.7,88.8L1100.2,113.8L1100.7,113.8L1101.2,63.7L1101.7,63.7L1102.2,69.1L1102.7,70.6L1103.2,73L1103.7,63.7L1104.2,63.7L1104.7,81.4L1105.2,80.2L1105.7,78.4L1106.2,83.2L1106.7,63.7L1107.2,81.6L1107.7,82.7L1108.2,83.7L1108.7,85.8L1109.2,65.7L1109.7,68.3L1110.2,85.8L1110.7,86.9L1111.2,87.1L1111.7,70.3L1112.2,72L1112.7,76.7L1113.2,83.2L1113.7,82.4L1114.2,79.4L1114.7,70.4L1115.2,63.7L1115.7,85.5L1116.2,86.5L1116.7,85.9L1117.2,67.4L1117.7,67.3L1118.2,86.2L1118.7,87.4L1119.2,88.6L1119.7,75.4L1120.2,74L1120.7,88.8L1121.2,88.2L1121.7,84.6L1122.2,85.9L1122.7,87.8L1123.2,87.8L1123.7,87.8L1124.2,87.8L1124.7,87.8L1125.2,87.8L1125.7,87.8L1126.2,87.8L1126.7,87.8L1127.2,88.8L1127.7,113.8L1128.2,113.8L1128.7,63.7L1129.2,65.4L1129.7,67.5L1130.2,71.5L1130.7,63.7L1131.2,63.7L1131.7,77.4L1132.2,81.2L1132.7,79.7L1133.2,63.7L1133.7,68.5L1134.2,78.6L1134.7,83.2L1135.2,84.9L1135.7,85.3L1136.2,69.1L1136.7,72.4L1137.2,84.9L1137.7,83.5L1138.2,82.6L1138.7,63.9L1139.2,66L1139.7,83.7L1140.2,83.3L1140.7,86L1141.2,85.2L1141.7,66.4L1142.2,63.7L1142.7,86.9L1143.2,86.1L1143.7,85.1L1144.2,66.1L1144.7,70.7L1145.2,81.7L1145.7,83.1L1146.2,83.8L1146.7,87.8L1147.2,87.8L1147.7,87.8L1148.2,87.8L1148.7,87.8L1149.2,87.8L1149.7,87.8L1150.2,87.8L1150.7,87.8L1151.2,88.8L1151.7,113.8L1152.2,113.8L1152.7,63.7L1153.2,65.4L1153.7,65.5L1154.2,72.8L1154.7,76.3L1155.2,63.7L1155.7,63.7L1156.2,76.2L1156.7,82.2L1157.2,82.5L1157.7,63.7L1158.2,63.7L1158.7,81.5L1159.2,82.9L1159.7,84.1L1160.2,63.7L1160.7,63.7L1161.2,79.3L1161.7,85.4L1162.2,84L1162.7,86.9L1163.2,72.6L1163.7,65.5L1164.2,88.3L1164.7,80.6L1165.2,86.9L1165.7,67.7L1166.2,67.6L1166.7,83.7L1167.2,83.1L1167.7,81.3L1168.2,80.8L1168.7,70.1L1169.2,71.4L1169.7,86.7L1170.2,87.8L1170.7,87.8L1171.2,87.8L1171.7,87.8L1172.2,87.8L1172.7,87.8L1173.2,87.8L1173.7,87.8L1174.2,88.8L1174.7,113.8L1175.2,113.8L1175.7,113.8L1176.2,63.7L1176.7,63.7L1177.2,63.7L1177.7,70.7L1178.2,72.6L1178.7,75.2L1179.2,64.4L1179.7,63.7L1180.2,77.4L1180.7,70.6L1181.2,81.3L1181.7,83.9L1182.2,63.8L1182.7,66.2L1183.2,85.2L1183.7,86.2L1184.2,86.5L1184.7,70.5L1185.2,70.9L1185.7,89.1L1186.2,90L1186.7,88.3L1187.2,74.2L1187.7,74L1188.2,85.8L1188.7,87.4L1189.2,81.2L1189.7,89.9L1190.2,73.9L1190.7,74.2L1191.2,87.1L1191.7,85.4L1192.2,86.9L1192.7,86.9L1193.2,86.8L1193.7,71.9L1194.2,70.2L1194.7,85L1195.2,87.7L1195.7,83.7L1196.2,88.9L1196.7,89.5L1197.2,83.1L1197.7,87.8L1198.2,70.6L1198.7,71.8L1199.2,87.8L1199.7,88.3L1200.2,89.2L1200.7,88.6L1201.2,89.1L1201.7,89.2L1202.2,86.7L1202.7,71.3L1203.2,65.9L1203.7,84L1204.2,84.5L1204.7,80.6L1205.2,84L1205.7,79L1206.2,86.3L1206.7,85.7L1207.2,71.1L1207.7,70.1L1208.2,86.3L1208.7,83.2L1209.2,82.4L1209.7,81.4L1210.2,84.1L1210.7,84.8L1211.2,84.6L1211.7,63.7L1212.2,63.7L1212.7,82.9L1213.2,87.2L1213.7,86.4L1214.2,85.5L1214.7,85.4L1215.2,87L1215.7,84.6L1216.2,63.8L1216.7,63.7L1217.2,86.3L1217.7,86.1L1218.2,77.2L1218.7,85.9L1219.2,79.1L1219.7,85.4L1220.2,85.3L1220.7,64.5L1221.2,63.7L1221.7,84.6L1222.2,82.1L1222.7,86.4L1223.2,85.9L1223.7,83.5L1224.2,85.6L1224.7,80.7L1225.2,63.7L1225.7,85.7L1226.2,87.2L1226.7,86.8L1227.2,81.9L1227.7,87.9L1228.2,90.1L1228.7,83.8L1229.2,67.8L1229.7,65.2L1230.2,77.1L1230.7,85.3L1231.2,85.6L1231.7,84.6L1232.2,82.5L1232.7,83.5L1233.2,83.6L1233.7,65.7L1234.2,64.6L1234.7,86.1L1235.2,83.6L1235.7,84.9L1236.2,87.4L1236.7,86.7L1237.2,85.4L1237.7,84.1L1238.2,63.7L1238.7,63.7L1239.2,84.8L1239.7,84.8L1240.2,84.3L1240.7,83.3L1241.2,85L1241.7,85L1242.2,81.8L1242.7,72.9L1243.2,69.9L1243.7,79.9L1244.2,88.3L1244.7,78.1L1245.2,86L1245.7,85.5L1246.2,86.4L1246.7,85.7L1247.2,64.5L1247.7,67.1L1248.2,89.3L1248.7,88.5L1249.2,81.2L1249.7,82.7L1250.2,79.1L1250.7,84.3L1251.2,83.1L1251.7,63.7L1252.2,63.7L1252.7,84.3L1253.2,85.2L1253.7,80.2L1254.2,81.9L1254.7,82.8L1255.2,82.5L1255.7,84L1256.2,66.6L1256.7,63.7L1257.2,83.5L1257.7,85.1L1258.2,87.7L1258.7,86.9L1259.2,89L1259.7,82.7L1260.2,88.5L1260.7,71.1L1261.2,70.9L1261.7,89.4L1262.2,88.1L1262.7,88.8L1263.2,87.9L1263.7,88.5L1264.2,88.5L1264.7,84.1L1265.2,71.5L1265.7,73.2L1266.2,82.9L1266.7,91.4L1267.2,89L1267.7,86.4L1268.2,86.1L1268.7,86.5L1269.2,86L1269.7,63.7L1270.2,79.4L1270.7,86.9L1271.2,85.6L1271.7,86.1L1272.2,87.5L1272.7,88.5L1273.2,88.7L1273.7,63.7L1274.2,63.7L1274.7,80.4L1275.2,88.1L1275.7,80.3L1276.2,85.6L1276.7,80L1277.2,88.4L1277.7,86.2L1278.2,68L1278.7,67.7L1279.2,80.3L1279.7,87L1280.2,87.2L1280.7,86.1L1281.2,80.2L1281.7,84L1282.2,86.9L1282.7,63.7L1283.2,63.7L1283.7,85.7L1284.2,87.6L1284.7,86.9L1285.2,86.4L1285.7,83.8L1286.2,82.5L1286.7,77.9L1287.2,63.7L1287.7,63.7L1288.2,86.6L1288.7,84.7L1289.2,86L1289.7,86.1L1290.2,87.5L1290.7,86.2L1291.2,86.9L1291.7,63.7L1292.2,63.7L1292.7,85.7L1293.2,88.2L1293.7,88.1L1294.2,88.5L1294.7,86.1L1295.2,89.2L1295.7,86L1296.2,71.7L1296.7,69.5L1297.2,85L1297.7,86.1L1298.2,80.5L1298.7,85L1299.2,87.6L1299.7,87.9L1300.2,88.4L1300.7,71.3L1301.2,63.9L1301.7,85.9L1302.2,85L1302.7,78.3L1303.2,86.7L1303.7,78.8L1304.2,85.6L1304.7,78.3L1305.2,63.7L1305.7,63.7L1306.2,81L1306.7,82.1L1307.2,82.8L1307.7,82.8L1308.2,82.8L1308.7,85.6L1309.2,87L1309.7,65.6L1310.2,65.9L1310.7,85.4L1311.2,87.2L1311.7,88.5L1312.2,88.1L1312.7,87.4L1313.2,87.7L1313.7,84.5L1314.2,63.7L1314.7,89.1L1315.2,89.7L1315.7,87.3L1316.2,87.2L1316.7,89.5L1317.2,87.9L1317.7,88.3L1318.2,71.3L1318.7,72.5L1319.2,88.6L1319.7,88L1320.2,87.2L1320.7,85.3L1321.2,86.2L1321.7,87.9L1322.2,86L1322.7,63.7L1323.2,65.9L1323.7,84.8L1324.2,84L1324.7,81.4L1325.2,78.9L1325.7,81.4L1326.2,81.2L1326.7,82.2L1327.2,63.7L1327.7,63.7L1328.2,81.9L1328.7,84L1329.2,83.5L1329.7,87.3L1330.2,85L1330.7,81.9L1331.2,87.3L1331.7,68.8L1332.2,63.7L1332.7,87L1333.2,85.8L1333.7,85.8L1334.2,85.7L1334.7,86.7L1335.2,85.8L1335.7,81.3L1336.2,63.7L1336.7,63.7L1337.2,82.9L1337.7,85.2L1338.2,85.8L1338.7,80.3L1339.2,87L1339.7,88.3L1340.2,86.5L1340.7,64.7L1341.2,65.5L1341.7,86L1342.2,81.3L1342.7,89.6L1343.2,86.2L1343.7,88.3L1344.2,86L1344.7,86.5L1345.2,65.8L1345.7,66L1346.2,84.7L1346.7,84.8L1347.2,85.7L1347.7,86L1348.2,88.7L1348.7,89.3L1349.2,89.7L1349.7,70.7L1350.2,72.5L1350.7,87.4L1351.2,88.6L1351.7,86.2L1352.2,86.2L1352.7,83L1353.2,88.4L1353.7,85.8L1354.2,63.7L1354.7,63.7L1355.2,82L1355.7,84.8L1356.2,84.2L1356.7,86L1357.2,85.5L1357.7,83.9L1358.2,88.2L1358.7,63.7L1359.2,89L1359.7,87.4L1360.2,87.4L1360.7,86.1L1361.2,85.8L1361.7,85L1362.2,78.8L1362.7,63.7L1363.2,65.2L1363.7,84.3L1364.2,82.6L1364.7,88.3L1365.2,89.4L1365.7,86.8L1366.2,85.5L1366.7,86.1L1367.2,69.8L1367.7,68.6L1368.2,89.6L1368.7,91.5L1369.2,83.8L1369.7,87L1370.2,86.2L1370.7,85.4L1371.2,82.3L1371.7,63.7L1372.2,63.7L1372.7,84L1373.2,84.5L1373.7,86.2L1374.2,87.3L1374.7,85.6L1375.2,86.3L1375.7,87.2L1376.2,63.7L1376.7,63.7L1377.2,85.3L1377.7,84.9L1378.2,83.2L1378.7,85.6L1379.2,83.6L1379.7,84.2L1380.2,86.3L1380.7,63.7L1381.2,63.7L1381.7,81.7L1382.2,86.6L1382.7,83.4L1383.2,83.5L1383.7,84.4L1384.2,83.3L1384.7,84.8L1385.2,68.1L1385.7,67.6L1386.2,84.8L1386.7,85.2L1387.2,85.7L1387.7,78.7L1388.2,86.1L1388.7,86.4L1389.2,86.9L1389.7,65.8L1390.2,64L1390.7,87.3L1391.2,85.7L1391.7,85.7L1392.2,83.7L1392.7,85.4L1393.2,83.7L1393.7,79.1L1394.2,63.7L1394.7,63.7L1395.2,83.7L1395.7,85L1396.2,84.2L1396.7,84.4L1397.2,83.3L1397.7,81.3L1398.2,85.3L1398.7,67L1399.2,64.7L1399.7,86.6L1400.2,85.6L1400.7,85.8L1401.2,85.6L1401.7,84.1L1402.2,84.6L1402.7,85.8L1403.2,64.8L1403.7,84.4L1404.2,84.8L1404.7,86L1405.2,78.1L1405.7,84.2L1406.2,77.3L1406.7,84.3L1407.2,63.7L1407.7,65.3L1408.2,89.8L1408.7,87.5L1409.2,90L1409.7,87.7L1410.2,87.4L1410.7,88.6L1411.2,87.9L1411.7,63.7L1412.2,65.3L1412.7,88.2L1413.2,87.3L1413.7,82L1414.2,86.4L1414.7,88.2L1415.2,83L1415.7,86.3L1416.2,63.7L1416.7,66L1417.2,87.1L1417.7,86.6L1418.2,81.1L1418.7,88.2L1419.2,79.6L1419.7,88.5L1420.2,86.3L1420.7,68.6L1421.2,70.1L1421.7,86.5L1422.2,85.4L1422.7,86.6L1423.2,86.5L1423.7,84.8L1424.2,85L1424.2,89.2L1423.7,91.7L1423.2,96.1L1422.7,92.3L1422.2,89.3L1421.7,96.4L1421.2,113.8L1420.7,112.7L1420.2,91.2L1419.7,92L1419.2,92.2L1418.7,92.5L1418.2,93.7L1417.7,90.5L1417.2,96.3L1416.7,111.4L1416.2,107.2L1415.7,90.6L1415.2,91.6L1414.7,91.6L1414.2,89.6L1413.7,90.7L1413.2,92.1L1412.7,100.7L1412.2,110.6L1411.7,110L1411.2,94.2L1410.7,92.4L1410.2,91.9L1409.7,99.5L1409.2,99.9L1408.7,95L1408.2,94.3L1407.7,113.8L1407.2,106.8L1406.7,91.2L1406.2,90.3L1405.7,88.6L1405.2,89.2L1404.7,89.8L1404.2,88.8L1403.7,93.1L1403.2,105.9L1402.7,89.3L1402.2,89.3L1401.7,88.3L1401.2,95.4L1400.7,90.7L1400.2,90.6L1399.7,90.1L1399.2,112.3L1398.7,111.5L1398.2,89.9L1397.7,89.7L1397.2,88.4L1396.7,89.2L1396.2,88.8L1395.7,88L1395.2,87.3L1394.7,113.2L1394.2,113.8L1393.7,91.1L1393.2,89.2L1392.7,90.1L1392.2,95.8L1391.7,89.3L1391.2,90.3L1390.7,89.9L1390.2,113.8L1389.7,112.2L1389.2,90.2L1388.7,97.2L1388.2,95.3L1387.7,91.6L1387.2,90.3L1386.7,96.7L1386.2,89.9L1385.7,103.8L1385.2,112L1384.7,88.7L1384.2,88.8L1383.7,97.1L1383.2,88.4L1382.7,87.4L1382.2,89.4L1381.7,89.2L1381.2,113.8L1380.7,113.8L1380.2,93.7L1379.7,89.2L1379.2,88.2L1378.7,91.1L1378.2,91.5L1377.7,89.1L1377.2,88.5L1376.7,107L1376.2,107.5L1375.7,91.5L1375.2,89.6L1374.7,90.6L1374.2,90.5L1373.7,89.2L1373.2,89.5L1372.7,91.2L1372.2,107.5L1371.7,108.5L1371.2,93.7L1370.7,92.6L1370.2,94L1369.7,92.4L1369.2,97L1368.7,94.5L1368.2,100.5L1367.7,113.8L1367.2,113.8L1366.7,91.9L1366.2,95.4L1365.7,91.8L1365.2,93.4L1364.7,91.7L1364.2,90.4L1363.7,88.4L1363.2,108.4L1362.7,113.8L1362.2,95.8L1361.7,90.3L1361.2,91.7L1360.7,90L1360.2,91.7L1359.7,91.7L1359.2,93.1L1358.7,113.8L1358.2,93.6L1357.7,91.6L1357.2,89L1356.7,94.7L1356.2,94.5L1355.7,93.2L1355.2,93L1354.7,109.3L1354.2,110.3L1353.7,97.7L1353.2,95.2L1352.7,91.9L1352.2,90.4L1351.7,96.8L1351.2,92.1L1350.7,94.5L1350.2,113.8L1349.7,113.8L1349.2,94.3L1348.7,100.5L1348.2,92.4L1347.7,94.5L1347.2,93.4L1346.7,88.1L1346.2,91.1L1345.7,113.8L1345.2,113.8L1344.7,91.4L1344.2,94.2L1343.7,92.3L1343.2,90.1L1342.7,93.2L1342.2,90.2L1341.7,89.2L1341.2,106.7L1340.7,106L1340.2,90.3L1339.7,92.3L1339.2,89.8L1338.7,91.4L1338.2,91.1L1337.7,95L1337.2,88.6L1336.7,107.8L1336.2,108.5L1335.7,87.4L1335.2,89.9L1334.7,89.9L1334.2,89.1L1333.7,90.6L1333.2,89.8L1332.7,97L1332.2,108.8L1331.7,108.9L1331.2,90.6L1330.7,95.8L1330.2,89.4L1329.7,90.4L1329.2,90.4L1328.7,88.6L1328.2,85.7L1327.7,110.7L1327.2,113.8L1326.7,93.2L1326.2,86.6L1325.7,86.2L1325.2,92.6L1324.7,84.9L1324.2,87L1323.7,87.8L1323.2,113.8L1322.7,113.8L1322.2,91.4L1321.7,91L1321.2,90L1320.7,89.6L1320.2,91.4L1319.7,91.5L1319.2,93.1L1318.7,113.8L1318.2,110.7L1317.7,93.7L1317.2,92.1L1316.7,93.6L1316.2,96.3L1315.7,92.4L1315.2,99.8L1314.7,92.7L1314.2,111.8L1313.7,91L1313.2,96.7L1312.7,91.9L1312.2,92.8L1311.7,92.4L1311.2,92.2L1310.7,89.7L1310.2,113.8L1309.7,113.8L1309.2,95.6L1308.7,95.8L1308.2,87.2L1307.7,88.6L1307.2,87L1306.7,86.6L1306.2,86L1305.7,113.5L1305.2,111.4L1304.7,89.8L1304.2,89.4L1303.7,90.2L1303.2,91L1302.7,91L1302.2,92.5L1301.7,94.8L1301.2,108.5L1300.7,110.3L1300.2,91.6L1299.7,98.8L1299.2,90.6L1298.7,87.9L1298.2,90.6L1297.7,97.7L1297.2,87.7L1296.7,106.9L1296.2,109.3L1295.7,91.8L1295.2,93.4L1294.7,93.1L1294.2,93L1293.7,92.2L1293.2,98.2L1292.7,91.2L1292.2,113.8L1291.7,113.8L1291.2,90.1L1290.7,89.5L1290.2,95.1L1289.7,90.7L1289.2,89.2L1288.7,88.7L1288.2,91.2L1287.7,113.8L1287.2,111.8L1286.7,92.8L1286.2,92.1L1285.7,88.3L1285.2,89.9L1284.7,91.4L1284.2,96.5L1283.7,90.5L1283.2,109.9L1282.7,113.8L1282.2,91.1L1281.7,88.9L1281.2,91.8L1280.7,90.5L1280.2,90.5L1279.7,91.1L1279.2,93L1278.7,113.8L1278.2,113.6L1277.7,90.7L1277.2,91.6L1276.7,93.1L1276.2,89.9L1275.7,90.4L1275.2,92.7L1274.7,91.6L1274.2,113.8L1273.7,113.8L1273.2,92L1272.7,94L1272.2,92L1271.7,90.9L1271.2,90.1L1270.7,90.3L1270.2,92L1269.7,112.6L1269.2,88.9L1268.7,91.4L1268.2,89L1267.7,91L1267.2,92.2L1266.7,103.2L1266.2,96L1265.7,112.6L1265.2,110.2L1264.7,94.6L1264.2,95.7L1263.7,92.5L1263.2,93.4L1262.7,92.7L1262.2,91.5L1261.7,92.2L1261.2,113.8L1260.7,107.5L1260.2,93.1L1259.7,90.5L1259.2,99L1258.7,92.5L1258.2,92.3L1257.7,90L1257.2,93.6L1256.7,113.8L1256.2,113.8L1255.7,96L1255.2,90.2L1254.7,86.8L1254.2,86.6L1253.7,90.4L1253.2,89.3L1252.7,87.3L1252.2,111.1L1251.7,112.4L1251.2,91L1250.7,88.9L1250.2,94.5L1249.7,89L1249.2,90.7L1248.7,92.6L1248.2,94L1247.7,110.5L1247.2,110.2L1246.7,98.2L1246.2,90.5L1245.7,89.5L1245.2,93.7L1244.7,90.2L1244.2,91.7L1243.7,97.7L1243.2,111.7L1242.7,112.7L1242.2,91.7L1241.7,90.1L1241.2,89L1240.7,88.1L1240.2,89L1239.7,91L1239.2,89.3L1238.7,106.9L1238.2,106.5L1237.7,94.1L1237.2,93.7L1236.7,91.3L1236.2,90.1L1235.7,89.4L1235.2,88.7L1234.7,88.6L1234.2,113.8L1233.7,110.6L1233.2,88.9L1232.7,87.6L1232.2,86L1231.7,93.5L1231.2,96.6L1230.7,93.1L1230.2,89.4L1229.7,113.8L1229.2,113.8L1228.7,94L1228.2,93.4L1227.7,92.1L1227.2,92L1226.7,90.9L1226.2,96L1225.7,90L1225.2,110.6L1224.7,90.2L1224.2,88.8L1223.7,88.8L1223.2,90.7L1222.7,89.8L1222.2,90.1L1221.7,87.8L1221.2,101.7L1220.7,105.6L1220.2,89.6L1219.7,97.8L1219.2,89.8L1218.7,88.6L1218.2,90.7L1217.7,89.8L1217.2,90.4L1216.7,109.5L1216.2,105.4L1215.7,89.7L1215.2,98.1L1214.7,90.1L1214.2,90.9L1213.7,94.6L1213.2,91L1212.7,96.8L1212.2,113.8L1211.7,113.6L1211.2,89L1210.7,95.8L1210.2,89L1209.7,90.1L1209.2,91.3L1208.7,90.7L1208.2,89.4L1207.7,106.8L1207.2,109.2L1206.7,95.1L1206.2,90.3L1205.7,94.7L1205.2,88L1204.7,90.6L1204.2,88.5L1203.7,88.3L1203.2,101.5L1202.7,102.4L1202.2,89.4L1201.7,93.4L1201.2,93L1200.7,98.1L1200.2,93.4L1199.7,93.3L1199.2,91.2L1198.7,107.6L1198.2,108.4L1197.7,91.7L1197.2,93.1L1196.7,94.1L1196.2,91.7L1195.7,99.9L1195.2,91.8L1194.7,89.4L1194.2,106L1193.7,105.5L1193.2,91.7L1192.7,91.3L1192.2,91L1191.7,94.4L1191.2,91L1190.7,112.2L1190.2,112.3L1189.7,93.2L1189.2,91.3L1188.7,90.7L1188.2,93.7L1187.7,112.1L1187.2,105.7L1186.7,92L1186.2,93.7L1185.7,92.6L1185.2,111.2L1184.7,111.9L1184.2,90.8L1183.7,90.6L1183.2,92.8L1182.7,103.8L1182.2,107.7L1181.7,86.6L1181.2,88L1180.7,83.2L1180.2,81.8L1179.7,98.4L1179.2,100.4L1178.7,81.9L1178.2,75.2L1177.7,74.1L1177.2,92.4L1176.7,89.5L1176.2,113.8L1175.7,113.8L1175.2,113.8L1174.7,113.8L1174.2,113.8L1173.7,88.8L1173.2,88.8L1172.7,88.8L1172.2,88.8L1171.7,88.8L1171.2,88.8L1170.7,88.8L1170.2,88.8L1169.7,89.7L1169.2,106.4L1168.7,107.1L1168.2,101L1167.7,100.9L1167.2,97.1L1166.7,91.5L1166.2,108.8L1165.7,108.8L1165.2,95.9L1164.7,92.7L1164.2,93L1163.7,108.8L1163.2,109L1162.7,90.3L1162.2,88.5L1161.7,92.8L1161.2,92.9L1160.7,109.2L1160.2,107.1L1159.7,88.5L1159.2,88.4L1158.7,85.7L1158.2,104.6L1157.7,104.8L1157.2,92.4L1156.7,86L1156.2,85.4L1155.7,102.9L1155.2,101.3L1154.7,79.6L1154.2,78.1L1153.7,73.6L1153.2,77.3L1152.7,113.8L1152.2,113.8L1151.7,113.8L1151.2,113.8L1150.7,88.8L1150.2,88.8L1149.7,88.8L1149.2,88.8L1148.7,88.8L1148.2,88.8L1147.7,88.8L1147.2,88.8L1146.7,88.8L1146.2,96.2L1145.7,89.6L1145.2,98.6L1144.7,107L1144.2,110.2L1143.7,89.3L1143.2,89L1142.7,91.3L1142.2,108.6L1141.7,107.2L1141.2,89.8L1140.7,88.9L1140.2,87.3L1139.7,87.5L1139.2,106L1138.7,109.1L1138.2,91L1137.7,86.8L1137.2,88.7L1136.7,108.4L1136.2,107.5L1135.7,89.6L1135.2,89.7L1134.7,93.8L1134.2,90L1133.7,103.4L1133.2,98.1L1132.7,83.5L1132.2,85.5L1131.7,81.7L1131.2,99.6L1130.7,97.2L1130.2,76.3L1129.7,72.3L1129.2,73.7L1128.7,113.8L1128.2,113.8L1127.7,113.8L1127.2,113.8L1126.7,88.8L1126.2,88.8L1125.7,88.8L1125.2,88.8L1124.7,88.8L1124.2,88.8L1123.7,88.8L1123.2,88.8L1122.7,88.8L1122.2,90.4L1121.7,89.7L1121.2,90.7L1120.7,99.1L1120.2,113.8L1119.7,113.1L1119.2,93.5L1118.7,97L1118.2,90.4L1117.7,113.8L1117.2,109.4L1116.7,90.6L1116.2,90.5L1115.7,90.3L1115.2,110.7L1114.7,112.5L1114.2,88.9L1113.7,86.9L1113.2,87.8L1112.7,86.9L1112.2,106.9L1111.7,109L1111.2,96.7L1110.7,91.3L1110.2,95.5L1109.7,112.6L1109.2,105.1L1108.7,98L1108.2,87.9L1107.7,86.6L1107.2,86.6L1106.7,102.1L1106.2,87.5L1105.7,94.2L1105.2,85.8L1104.7,84L1104.2,95.9L1103.7,93.9L1103.2,77.6L1102.7,74.2L1102.2,72.4L1101.7,91L1101.2,113.8L1100.7,113.8L1100.2,113.8L1099.7,113.8L1099.2,88.8L1098.7,88.8L1098.2,88.8L1097.7,88.8L1097.2,88.8L1096.7,88.8L1096.2,88.8L1095.7,88.8L1095.2,88.8L1094.7,91.4L1094.2,92.6L1093.7,92.1L1093.2,109.8L1092.7,93.1L1092.2,92.2L1091.7,91.8L1091.2,95.6L1090.7,108.6L1090.2,108.4L1089.7,90.8L1089.2,88.7L1088.7,89.7L1088.2,106.8L1087.7,111L1087.2,91.8L1086.7,91L1086.2,91.9L1085.7,92.1L1085.2,110L1084.7,108.3L1084.2,91L1083.7,97.4L1083.2,89.1L1082.7,106.4L1082.2,109.7L1081.7,97L1081.2,90.7L1080.7,88.4L1080.2,85.6L1079.7,109.5L1079.2,84.6L1078.7,83.7L1078.2,82.5L1077.7,86.8L1077.2,95.2L1076.7,94.3L1076.2,77.6L1075.7,77.9L1075.2,75L1074.7,90.3L1074.2,87.9L1073.7,71.7L1073.2,113.8L1072.7,113.8L1072.2,113.8L1071.7,113.8L1071.2,88.8L1070.7,88.8L1070.2,88.8L1069.7,88.8L1069.2,88.8L1068.7,88.8L1068.2,88.8L1067.7,88.8L1067.2,88.8L1066.7,90.4L1066.2,105.1Z" class="bl"/>
<path d="M1067,63.2V114.3" class="ml"/>
<path d="M1095,63.2V114.3" class="ml"/>
<path d="M1122.5,63.2V114.3" class="ml"/>
<path d="M1146.6,63.2V114.3" class="ml"/>
<path d="M1169.8,63.2V114.3" class="ml"/>
<path d="M1191.8,63.2V114.3" class="ml"/>
<path d="M1384.4,63.2V114.3" class="ml"/>
<path d="M840,139.7L840.5,137.1L841,136.7L841.5,135.5L842,139.4L842.5,141.3L843,140.4L843.5,139.2L844,138.6L844.5,138.9L845,138.5L845.5,140.6L846,141.8L846.5,140.8L847,138.3L847.5,137L848,138L848.5,140.1L849,141.4L849.5,141L850,140.9L850.5,140L851,139.9L851.5,140.5L852,140.1L852.5,139.2L853,138.3L853.5,139.5L854,134.8L854.5,140.6L855,138.4L855.5,140L856,141.3L856.5,139.7L857,142L857.5,139L858,138.7L858.5,138.8L859,139.3L859.5,138.3L860,136.3L860.5,135.4L861,139.8L861.5,140.4L862,140.6L862.5,140.5L863,137.9L863.5,140L864,140L864.5,139.4L865,140.1L865.5,138.3L866,138.2L866.5,139.3L867,141.3L867.5,139.8L868,137.7L868.5,137L869,138.2L869.5,139.5L870,138.9L870.5,138.4L871,138.7L871.5,139.7L872,139.1L872.5,139L873,139.8L873.5,137.9L874,139.1L874.5,139.8L875,140.1L875.5,140.8L876,140.4L876.5,141.5L877,140.5L877.5,140.6L878,139.2L878.5,139.1L879,139.8L879.5,138.4L880,138.3L880.5,140.4L881,138.9L881.5,140L882,141.3L882.5,139.9L883,139.1L883.5,141.7L884,140.3L884.5,141.3L885,140.3L885.5,139.8L886,138.3L886.5,140.1L887,139.7L887.5,140.4L888,138.6L888.5,138.2L889,135.9L889.5,139.5L890,139L890.5,136.2L891,140L891.5,139.1L892,138.5L892.5,140L893,139.1L893.5,139.1L894,138.3L894.5,137.7L895,138L895.5,139.5L896,139.7L896.5,140.3L897,139.8L897.5,137L898,138.8L898.5,139.3L899,140.8L899.5,140.6L900,136.3L900.5,138.5L901,138.6L901.5,135.4L902,137L902.5,137.6L903,138.2L903.5,137.9L904,135.9L904.5,139.6L905,139.9L905.5,139.1L906,138.8L906.5,138.6L907,138.5L907.5,140.2L908,139.7L908.5,140.1L909,138.6L909.5,138.8L910,138.1L910.5,135.2L911,140.8L911.5,139.8L912,140.2L912.5,140.2L913,136.1L913.5,138.6L914,138.3L914.5,137.6L915,136.4L915.5,137.7L916,138.7L916.5,138.3L917,140.1L917.5,139.7L918,137.9L918.5,138.6L919,137.7L919.5,138.3L920,137.2L920.5,138.2L921,136.1L921.5,138.1L922,137.9L922.5,139.1L923,138.9L923.5,138.7L924,134.3L924.5,138L925,138.8L925.5,139.2L926,138.5L926.5,139.9L927,140.2L927.5,140.3L928,140.2L928.5,139.8L929,138.5L929.5,136.7L930,138.6L930.5,138.6L931,139.5L931.5,140L932,139L932.5,138.7L933,137.3L933.5,138.9L934,139.5L934.5,138.8L935,138.1L935.5,139.5L936,137.3L936.5,139.3L937,135.4L937.5,139.9L938,140.2L938.5,141.1L939,139.9L939.5,141.2L940,139.6L940.5,139.5L941,140L941.5,139.6L942,137.7L942.5,139.1L943,139L943.5,139.9L944,139.1L944.5,138.4L945,139.3L945.5,138.7L946,138.9L946.5,138.7L947,139.1L947.5,141L948,139.5L948.5,141.4L949,139.4L949.5,137.9L950,137L950.5,139.7L951,139.4L951.5,140.6L952,139.8L952.5,140.4L953,140L953.5,139.1L954,138.5L954.5,138.3L955,138.3L955.5,138.4L956,136.9L956.5,137.2L957,138L957.5,140.1L958,139.4L958.5,139.7L959,138.6L959.5,139.6L960,137.8L960.5,139.8L961,139.7L961.5,139.4L962,139L962.5,138.7L963,139.5L963.5,139L964,138.5L964.5,137.7L965,139.1L965.5,140.2L966,140L966.5,139.7L967,139L967.5,140.4L968,140.5L968.5,141.1L969,139.1L969.5,140.1L970,140.7L970.5,140L971,139.5L971.5,138.8L972,137.7L972.5,138.4L973,138.4L973.5,138.7L974,137.8L974.5,138.5L975,138.7L975.5,139.3L976,139.5L976.5,138.9L977,140.2L977.5,140.2L978,137.4L978.5,138.6L979,137.9L979.5,139.8L980,139.6L980.5,139.3L981,141.5L981.5,140.8L982,125.6L982.5,141.7L983,141.3L983.5,137.8L984,140.7L984.5,139.7L985,137L985.5,141.2L986,140L986.5,140.5L987,139.5L987.5,139.3L988,137.2L988.5,139.8L989,140L989.5,142.3L990,142.8L990.5,137.4L991,141.3L991.5,141.2L992,138L992.5,137.8L993,136.3L993.5,139.9L994,139.1L994.5,139.2L995,139.4L995.5,139.3L996,138.9L996.5,136.7L997,138.8L997.5,136.2L998,138.6L998.5,138.9L999,140.3L999.5,141.9L1000,140.8L1000.5,140.1L1001,138.7L1001.5,139.4L1002,139.3L1002.5,140.3L1003,139.5L1003.5,136.7L1004,136.7L1004.5,136.5L1005,138L1005.5,137.6L1006,138.3L1006.5,139.1L1007,139.3L1007.5,138.6L1008,139.5L1008.5,139.6L1009,139.7L1009.5,138.2L1010,140.6L1010.5,138.1L1011,139.5L1011.5,137.3L1012,137.3L1012.5,137.4L1013,137.3L1013.5,139.5L1014,138.4L1014.5,136.9L1015,137.1L1015.5,140.7L1016,139.5L1016.5,138.4L1017,137.8L1017.5,138.2L1018,138.3L1018.5,138.9L1019,140.1L1019.5,139.8L1020,141.4L1020.5,140.7L1021,140.1L1021.5,139.2L1022,140.4L1022.5,139.3L1023,138.4L1023.5,138.4L1024,139L1024.5,139.7L1025,140.2L1025.5,139.8L1026,139.2L1026.5,138.1L1027,138.7L1027.5,138.8L1028,138L1028.5,136.8L1029,139.2L1029.5,140.2L1030,140.8L1030.5,139.3L1031,139L1031.5,137.5L1032,138.1L1032.5,140.7L1033,140.8L1033.5,137L1034,141.3L1034.5,139.2L1035,138.1L1035.5,138.7L1036,139.2L1036.5,138.6L1037,139.2L1037.5,140.1L1038,139.7L1038.5,139.8L1039,141.2L1039.5,142.9L1040,141.4L1040.5,140.9L1041,139.3L1041.5,139.7L1042,140.6L1042.5,139.7L1043,139.5L1043.5,137.9L1044,140.9L1044.5,139.5L1045,138.6L1045.5,138.8L1046,138.5L1046.5,139.8L1047,140.9L1047.5,139.6L1048,138L1048.5,138.1L1049,136.3L1049.5,139.5L1050,140.1L1050.5,137.4L1051,140.5L1051.5,138.7L1052,138.1L1052.5,137L1053,138.7L1053.5,137.9L1054,138.9L1054.5,137.4L1055,138.2L1055.5,137.8L1056,135.8L1056.5,138L1057,139L1057.5,137.9L1058,138.9L1058.5,140.3L1059,139.6L1059.5,139.8L1060,139.3L1060.5,138.8L1061,137.4L1061.5,138.9L1062,140L1062.5,136.6L1063,139.7L1063.5,136.2L1064,139.3L1064.5,139.2L1065,138.4L1065.5,135.1L1066,138.5L1066,141.5L1065.5,142.1L1065,142.2L1064.5,145L1064,143L1063.5,141.9L1063,144L1062.5,143.4L1062,143.3L1061.5,142.4L1061,141.5L1060.5,142L1060,146L1059.5,143.1L1059,143.3L1058.5,144.1L1058,142.4L1057.5,141.8L1057,142.4L1056.5,143.3L1056,142.4L1055.5,141.1L1055,141.7L1054.5,141.7L1054,143.1L1053.5,141.2L1053,142.4L1052.5,142.7L1052,144.1L1051.5,141.9L1051,143.3L1050.5,144.2L1050,143.8L1049.5,142.4L1049,142.7L1048.5,142.6L1048,142.5L1047.5,144.5L1047,143.1L1046.5,144.6L1046,144.1L1045.5,143.2L1045,141.9L1044.5,145.7L1044,144.5L1043.5,144.5L1043,143.9L1042.5,144.4L1042,144.5L1041.5,144.2L1041,142.6L1040.5,145.5L1040,145.2L1039.5,146L1039,146.2L1038.5,143.8L1038,143.7L1037.5,143.3L1037,142.2L1036.5,141.4L1036,142.1L1035.5,144L1035,141.6L1034.5,142L1034,144.1L1033.5,144.1L1033,143.7L1032.5,143.2L1032,142.1L1031.5,142.3L1031,143.1L1030.5,144.1L1030,143.3L1029.5,143.2L1029,142.8L1028.5,141.2L1028,141.6L1027.5,142.4L1027,143L1026.5,142.4L1026,142.8L1025.5,143L1025,143L1024.5,143.1L1024,143.6L1023.5,142.1L1023,142.8L1022.5,143.6L1022,143.5L1021.5,145.3L1021,143.9L1020.5,144.1L1020,144.4L1019.5,145.7L1019,146.5L1018.5,142.7L1018,142.5L1017.5,143.5L1017,142.1L1016.5,142.6L1016,143.4L1015.5,145L1015,143.8L1014.5,143.8L1014,143L1013.5,145.4L1013,141.5L1012.5,141.9L1012,140L1011.5,141.1L1011,143L1010.5,143L1010,143.3L1009.5,141.7L1009,142.4L1008.5,143.3L1008,142.1L1007.5,141.6L1007,142.1L1006.5,144.8L1006,141.8L1005.5,142.4L1005,145.3L1004.5,140.3L1004,141L1003.5,142.3L1003,142.8L1002.5,143.5L1002,142.6L1001.5,143.3L1001,146L1000.5,143.4L1000,144L999.5,147L999,147.4L998.5,144.8L998,142.7L997.5,144.7L997,143L996.5,144.9L996,142.8L995.5,143.7L995,143.2L994.5,143L994,142.6L993.5,143.1L993,142.1L992.5,144.5L992,145.2L991.5,144.8L991,146.4L990.5,145.6L990,144.9L989.5,144.6L989,146.5L988.5,144.3L988,144.2L987.5,146.9L987,143.1L986.5,143.7L986,142.7L985.5,144.1L985,145.1L984.5,142.1L984,144.4L983.5,142.8L983,144.2L982.5,147.1L982,143.7L981.5,144.3L981,145.1L980.5,144L980,143.6L979.5,144.5L979,142.1L978.5,143.1L978,140.7L977.5,143.1L977,143.8L976.5,142.5L976,144L975.5,143.2L975,143.4L974.5,141.6L974,142.5L973.5,142.8L973,143L972.5,141.4L972,143.8L971.5,142.8L971,143.7L970.5,143.5L970,143.7L969.5,143.5L969,144.6L968.5,145.3L968,144.2L967.5,148.2L967,143.2L966.5,144.2L966,145.6L965.5,146.3L965,146.5L964.5,141.6L964,144.5L963.5,142.8L963,145.2L962.5,142.1L962,145.3L961.5,142.4L961,143L960.5,143.2L960,142.2L959.5,141.8L959,141.3L958.5,142.5L958,142.5L957.5,143.3L957,141.5L956.5,141.4L956,140.9L955.5,143.3L955,141.8L954.5,142.3L954,146.9L953.5,144L953,143.4L952.5,145.5L952,143.3L951.5,144L951,143.5L950.5,143.4L950,144.9L949.5,143.6L949,143.3L948.5,147L948,144L947.5,144.3L947,143.6L946.5,143.9L946,142.1L945.5,144.9L945,143L944.5,141.5L944,144.1L943.5,143.6L943,142.5L942.5,142.3L942,143.8L941.5,142.7L941,143.5L940.5,143L940,144L939.5,143.4L939,144.5L938.5,145.4L938,144.4L937.5,143.5L937,146.6L936.5,142.6L936,142.1L935.5,142.4L935,141.8L934.5,143.6L934,142.7L933.5,142.6L933,142L932.5,141.7L932,142.7L931.5,144.9L931,143L930.5,142.3L930,141.8L929.5,143.3L929,142.7L928.5,143.2L928,147.9L927.5,144.1L927,143.8L926.5,146L926,142.8L925.5,142.8L925,141.3L924.5,142.1L924,142.9L923.5,142.9L923,142.7L922.5,142.1L922,141.3L921.5,144.8L921,146.3L920.5,143.7L920,142.3L919.5,142.7L919,141.2L918.5,142.6L918,142.5L917.5,141.8L917,143.4L916.5,142.9L916,143.9L915.5,142.3L915,139.9L914.5,140.4L914,142.1L913.5,153.1L913,141.9L912.5,143L912,147.3L911.5,143.5L911,144.5L910.5,141.7L910,141.9L909.5,142.3L909,142.8L908.5,143.4L908,143.2L907.5,143.2L907,141.8L906.5,142.9L906,143.7L905.5,141.3L905,145.1L904.5,143L904,142.1L903.5,143.2L903,141.8L902.5,145.2L902,144.1L901.5,144.7L901,142.8L900.5,141.4L900,142.6L899.5,142.9L899,143.4L898.5,143.2L898,142.8L897.5,144.2L897,143.4L896.5,146.2L896,142.8L895.5,142.1L895,141.5L894.5,144.4L894,142.5L893.5,142.7L893,143.5L892.5,143.6L892,142.3L891.5,143.5L891,143.1L890.5,141.7L890,142.9L889.5,142.5L889,143.3L888.5,144.5L888,143L887.5,143.2L887,143.6L886.5,143.7L886,142.9L885.5,146.5L885,145.2L884.5,147.7L884,144.2L883.5,143.9L883,143.6L882.5,144.5L882,144.6L881.5,143.6L881,142.3L880.5,144.1L880,141L879.5,140.9L879,141.9L878.5,143.2L878,142.3L877.5,143.5L877,146.4L876.5,145L876,144.8L875.5,145.6L875,143.1L874.5,142.4L874,142.8L873.5,143.4L873,143.6L872.5,143L872,144.4L871.5,143.1L871,142.6L870.5,142.3L870,141.4L869.5,142.4L869,141.5L868.5,142.3L868,141.1L867.5,143L867,143.7L866.5,143.1L866,141.6L865.5,141.7L865,144.5L864.5,144.4L864,143.6L863.5,144L863,143.2L862.5,144L862,144.1L861.5,143.6L861,143.7L860.5,143.8L860,142.8L859.5,144L859,142.8L858.5,142.3L858,142.5L857.5,143.3L857,146.2L856.5,144.1L856,144.5L855.5,143.3L855,144.3L854.5,143.6L854,143.2L853.5,142.1L853,142.3L852.5,145.8L852,147.2L851.5,145.1L851,147.8L850.5,143.5L850,144.7L849.5,145.6L849,144.6L848.5,142.9L848,142.7L847.5,141.7L847,142.6L846.5,145.8L846,145.5L845.5,144L845,141.3L844.5,142.9L844,143L843.5,143.6L843,146.5L842.5,144.1L842,143.5L841.5,141.4L841,141.6L840.5,141.9L840,143Z" class="kb"/>
<path d="M1066.2,138.8L1066.7,140.3L1067.2,135.6L1067.7,135.6L1068.2,135.6L1068.7,135.6L1069.2,135.6L1069.7,135.6L1070.2,135.6L1070.7,135.6L1071.2,135.6L1071.7,116.6L1072.2,135.6L1072.7,166.5L1073.2,166.5L1073.7,166.5L1074.2,166.5L1074.7,166.5L1075.2,166.5L1075.7,166.5L1076.2,166.5L1076.7,166.5L1077.2,166.3L1077.7,161.4L1078.2,157.1L1078.7,153.4L1079.2,150.2L1079.7,148.1L1080.2,146.1L1080.7,145.3L1081.2,144L1081.7,142.9L1082.2,141.6L1082.7,140.6L1083.2,138.1L1083.7,141.2L1084.2,135.7L1084.7,138.8L1085.2,136.7L1085.7,139.2L1086.2,140L1086.7,139.6L1087.2,138.7L1087.7,139.6L1088.2,135.1L1088.7,139.3L1089.2,138.4L1089.7,140L1090.2,141.8L1090.7,137.2L1091.2,139.8L1091.7,139.4L1092.2,137.7L1092.7,137L1093.2,137.6L1093.7,135.7L1094.2,138L1094.7,140.5L1095.2,135.6L1095.7,135.6L1096.2,135.6L1096.7,135.6L1097.2,135.6L1097.7,135.6L1098.2,135.6L1098.7,135.6L1099.2,135.6L1099.7,116.6L1100.2,135.6L1100.7,166.5L1101.2,166.5L1101.7,166.5L1102.2,166.5L1102.7,166.5L1103.2,166.5L1103.7,166.5L1104.2,166.5L1104.7,166.5L1105.2,166.5L1105.7,162.1L1106.2,158.3L1106.7,155.2L1107.2,152.4L1107.7,149.7L1108.2,148.1L1108.7,143.8L1109.2,144.8L1109.7,141.4L1110.2,142.8L1110.7,142.2L1111.2,140.8L1111.7,140.1L1112.2,140.3L1112.7,139.1L1113.2,139.3L1113.7,138.2L1114.2,133.7L1114.7,138.5L1115.2,138.8L1115.7,138.4L1116.2,138.3L1116.7,137.8L1117.2,139.4L1117.7,138.8L1118.2,139.5L1118.7,139L1119.2,140.3L1119.7,140.1L1120.2,140.1L1120.7,139.8L1121.2,136.6L1121.7,138.1L1122.2,139.2L1122.7,135.6L1123.2,135.6L1123.7,135.6L1124.2,135.6L1124.7,135.6L1125.2,135.6L1125.7,135.6L1126.2,135.6L1126.7,135.6L1127.2,116.6L1127.7,135.6L1128.2,166.5L1128.7,166.5L1129.2,166.5L1129.7,166.5L1130.2,166.5L1130.7,166.5L1131.2,166.5L1131.7,166.5L1132.2,166.5L1132.7,166.5L1133.2,161.5L1133.7,157.4L1134.2,153.9L1134.7,151.5L1135.2,148.7L1135.7,146.9L1136.2,145.1L1136.7,144.6L1137.2,144.1L1137.7,142.3L1138.2,142.9L1138.7,142L1139.2,141L1139.7,141.5L1140.2,134.6L1140.7,140.5L1141.2,138.9L1141.7,139.9L1142.2,139.7L1142.7,136.5L1143.2,138.8L1143.7,139.4L1144.2,140.3L1144.7,138.6L1145.2,137.9L1145.7,134.3L1146.2,137.5L1146.7,135.6L1147.2,135.6L1147.7,135.6L1148.2,135.6L1148.7,135.6L1149.2,135.6L1149.7,135.6L1150.2,135.6L1150.7,135.6L1151.2,135.6L1151.7,116.6L1152.2,135.6L1152.7,166.5L1153.2,166.5L1153.7,166.5L1154.2,166.5L1154.7,166.5L1155.2,166.5L1155.7,166.5L1156.2,166.5L1156.7,166.5L1157.2,162.4L1157.7,157.8L1158.2,155.3L1158.7,152.4L1159.2,148L1159.7,145.9L1160.2,143.8L1160.7,142.3L1161.2,143.2L1161.7,141.9L1162.2,143.7L1162.7,142.4L1163.2,141.6L1163.7,141.4L1164.2,140.7L1164.7,141.2L1165.2,140.9L1165.7,139.8L1166.2,141.2L1166.7,139.6L1167.2,140.4L1167.7,139.7L1168.2,136.2L1168.7,138.9L1169.2,140.1L1169.7,139.1L1170.2,135.6L1170.7,135.6L1171.2,135.6L1171.7,135.6L1172.2,135.6L1172.7,135.6L1173.2,135.6L1173.7,135.6L1174.2,135.6L1174.7,116.6L1175.2,135.6L1175.7,166.5L1176.2,166.5L1176.7,166.5L1177.2,166.5L1177.7,166.5L1178.2,166.5L1178.7,166.5L1179.2,166.5L1179.7,166.5L1180.2,164L1180.7,159.3L1181.2,155.9L1181.7,152.5L1182.2,149.9L1182.7,147.7L1183.2,146.1L1183.7,143L1184.2,143.5L1184.7,142.4L1185.2,142.3L1185.7,141.9L1186.2,139.1L1186.7,139.2L1187.2,138.8L1187.7,139L1188.2,141.1L1188.7,140.4L1189.2,139.3L1189.7,138.9L1190.2,139.5L1190.7,140.4L1191.2,139.8L1191.7,139.6L1192.2,136.3L1192.7,137.2L1193.2,139L1193.7,140L1194.2,141.1L1194.7,141.9L1195.2,141.5L1195.7,140.5L1196.2,141.2L1196.7,137.1L1197.2,138.3L1197.7,139L1198.2,138.6L1198.7,137.8L1199.2,137.6L1199.7,137.5L1200.2,137.8L1200.7,137.9L1201.2,139L1201.7,137.9L1202.2,138.7L1202.7,138.9L1203.2,140L1203.7,140.4L1204.2,139.9L1204.7,140.4L1205.2,135.4L1205.7,139.9L1206.2,138.7L1206.7,140L1207.2,137.7L1207.7,137.3L1208.2,137.7L1208.7,135.4L1209.2,137.7L1209.7,138.1L1210.2,137L1210.7,140.1L1211.2,139.8L1211.7,139L1212.2,138.7L1212.7,138.7L1213.2,139.5L1213.7,136.1L1214.2,136.8L1214.7,135.9L1215.2,138.8L1215.7,138.7L1216.2,139.9L1216.7,138.6L1217.2,137.9L1217.7,139.2L1218.2,138.1L1218.7,139.7L1219.2,140.3L1219.7,137.6L1220.2,140L1220.7,139.9L1221.2,139.3L1221.7,139.1L1222.2,139.7L1222.7,139.8L1223.2,139.7L1223.7,140L1224.2,140.7L1224.7,139.6L1225.2,140L1225.7,139.1L1226.2,138.8L1226.7,137.2L1227.2,138.2L1227.7,138L1228.2,139.3L1228.7,139.1L1229.2,138.5L1229.7,139.4L1230.2,137.8L1230.7,138.6L1231.2,137.6L1231.7,135.9L1232.2,138.5L1232.7,139.5L1233.2,139.6L1233.7,138.3L1234.2,137.8L1234.7,139.7L1235.2,137.7L1235.7,137.4L1236.2,138.7L1236.7,135L1237.2,135.8L1237.7,139.8L1238.2,140.3L1238.7,139.7L1239.2,139.7L1239.7,140.4L1240.2,140.6L1240.7,140.4L1241.2,139.2L1241.7,139.6L1242.2,138L1242.7,139.8L1243.2,139.3L1243.7,135.2L1244.2,139.9L1244.7,140.5L1245.2,136.3L1245.7,139.8L1246.2,138.9L1246.7,139.5L1247.2,138.6L1247.7,139.7L1248.2,139.8L1248.7,137.7L1249.2,140.3L1249.7,139.4L1250.2,136.2L1250.7,140.6L1251.2,139.9L1251.7,139.2L1252.2,138.6L1252.7,136.8L1253.2,141.1L1253.7,139.8L1254.2,140.7L1254.7,137.6L1255.2,139.2L1255.7,135.5L1256.2,135L1256.7,137.5L1257.2,138.1L1257.7,137.6L1258.2,138.7L1258.7,139.6L1259.2,138.6L1259.7,139.5L1260.2,136.1L1260.7,138.2L1261.2,138.9L1261.7,140.5L1262.2,138.7L1262.7,139.8L1263.2,136.7L1263.7,140.9L1264.2,139.8L1264.7,139.3L1265.2,139.5L1265.7,137.7L1266.2,138.9L1266.7,138.2L1267.2,138.2L1267.7,136.7L1268.2,139.5L1268.7,139.9L1269.2,138.3L1269.7,138.2L1270.2,138.6L1270.7,139.3L1271.2,136.8L1271.7,138.1L1272.2,138.6L1272.7,141.1L1273.2,140.6L1273.7,141.6L1274.2,141L1274.7,139.9L1275.2,141L1275.7,140.4L1276.2,140.8L1276.7,141.3L1277.2,141.1L1277.7,137.5L1278.2,138.3L1278.7,138.5L1279.2,139.5L1279.7,140.5L1280.2,140.7L1280.7,137.6L1281.2,141L1281.7,141.6L1282.2,140.5L1282.7,140.6L1283.2,140.9L1283.7,141L1284.2,135.9L1284.7,139.4L1285.2,139L1285.7,138.3L1286.2,135.7L1286.7,139.4L1287.2,140L1287.7,140.2L1288.2,140L1288.7,140.5L1289.2,139.2L1289.7,140.1L1290.2,137.8L1290.7,139.5L1291.2,139.9L1291.7,138.9L1292.2,138.5L1292.7,137.6L1293.2,139.3L1293.7,137.5L1294.2,138.8L1294.7,138.8L1295.2,137.3L1295.7,140.5L1296.2,141.5L1296.7,140.9L1297.2,138.6L1297.7,139.3L1298.2,138L1298.7,139.9L1299.2,140L1299.7,139L1300.2,139.9L1300.7,139.5L1301.2,140.3L1301.7,141L1302.2,139.8L1302.7,138.7L1303.2,139.7L1303.7,139.7L1304.2,136.1L1304.7,140.1L1305.2,141L1305.7,140.3L1306.2,136.8L1306.7,136.9L1307.2,139.6L1307.7,136.9L1308.2,138.8L1308.7,140L1309.2,138.7L1309.7,138.9L1310.2,139.5L1310.7,138.5L1311.2,135.5L1311.7,138.7L1312.2,138.1L1312.7,137.6L1313.2,137.8L1313.7,138.2L1314.2,138.7L1314.7,137.9L1315.2,138.9L1315.7,137.9L1316.2,137.8L1316.7,139.9L1317.2,138.3L1317.7,139.3L1318.2,135.6L1318.7,140.5L1319.2,138.6L1319.7,139.3L1320.2,140.6L1320.7,140.3L1321.2,139.1L1321.7,140.5L1322.2,140L1322.7,141L1323.2,140.5L1323.7,141L1324.2,140.5L1324.7,137.6L1325.2,139.2L1325.7,136.7L1326.2,139.8L1326.7,140L1327.2,140.1L1327.7,140.5L1328.2,140.2L1328.7,140.5L1329.2,140.2L1329.7,138.9L1330.2,138L1330.7,137L1331.2,137.9L1331.7,134.5L1332.2,136.8L1332.7,135.5L1333.2,136.8L1333.7,139.8L1334.2,141.8L1334.7,139.3L1335.2,134.7L1335.7,139.3L1336.2,139.7L1336.7,141L1337.2,138.7L1337.7,140.3L1338.2,140.8L1338.7,140.4L1339.2,134.2L1339.7,139.3L1340.2,138.5L1340.7,137.3L1341.2,137.5L1341.7,137L1342.2,137.5L1342.7,137.6L1343.2,137.7L1343.7,135.9L1344.2,138.5L1344.7,138.9L1345.2,136.1L1345.7,139L1346.2,137L1346.7,135.9L1347.2,135L1347.7,138.3L1348.2,138.9L1348.7,137.8L1349.2,137.8L1349.7,137L1350.2,137.9L1350.7,138.1L1351.2,138L1351.7,138.6L1352.2,139L1352.7,140.4L1353.2,138.6L1353.7,139.8L1354.2,136.1L1354.7,139.5L1355.2,139.5L1355.7,139.6L1356.2,141.4L1356.7,141.9L1357.2,142.2L1357.7,141.2L1358.2,140.6L1358.7,140L1359.2,139.3L1359.7,138.9L1360.2,139.8L1360.7,139.9L1361.2,139L1361.7,138.6L1362.2,139.2L1362.7,138.9L1363.2,138.8L1363.7,141L1364.2,139.9L1364.7,140.2L1365.2,137L1365.7,138.8L1366.2,137.1L1366.7,140.6L1367.2,140.4L1367.7,139.2L1368.2,139.1L1368.7,136.6L1369.2,141L1369.7,135.5L1370.2,137.2L1370.7,138.9L1371.2,136.6L1371.7,139.5L1372.2,140.9L1372.7,140.8L1373.2,139.8L1373.7,140.4L1374.2,140.2L1374.7,140.6L1375.2,141.4L1375.7,140.5L1376.2,139.9L1376.7,139.8L1377.2,140.5L1377.7,139.6L1378.2,141.4L1378.7,139.8L1379.2,139.4L1379.7,137.4L1380.2,138.7L1380.7,138.6L1381.2,137L1381.7,138.9L1382.2,140.3L1382.7,139.5L1383.2,139L1383.7,139.3L1384.2,139.5L1384.7,138.1L1385.2,140.4L1385.7,140.5L1386.2,140.6L1386.7,140.8L1387.2,141.3L1387.7,141.9L1388.2,139.8L1388.7,139.6L1389.2,141.1L1389.7,136.9L1390.2,138.5L1390.7,137.9L1391.2,139.4L1391.7,140.1L1392.2,141.1L1392.7,140.7L1393.2,140L1393.7,136L1394.2,140.5L1394.7,138.7L1395.2,138.2L1395.7,138.6L1396.2,138.1L1396.7,133.7L1397.2,139.5L1397.7,139.8L1398.2,140.4L1398.7,139.3L1399.2,139.2L1399.7,135.5L1400.2,140.8L1400.7,140.8L1401.2,140.7L1401.7,140.4L1402.2,139.5L1402.7,135.1L1403.2,140L1403.7,138.7L1404.2,139.2L1404.7,138.9L1405.2,138.2L1405.7,138.3L1406.2,138.5L1406.7,135.6L1407.2,138.2L1407.7,139.4L1408.2,139.3L1408.7,140L1409.2,139.6L1409.7,140.7L1410.2,138.7L1410.7,138.3L1411.2,136.5L1411.7,138.8L1412.2,139.2L1412.7,139.1L1413.2,138.5L1413.7,135.6L1414.2,138.7L1414.7,138.2L1415.2,138.6L1415.7,138.4L1416.2,134L1416.7,139.5L1417.2,138.6L1417.7,139L1418.2,138.8L1418.7,139.6L1419.2,139.8L1419.7,138.6L1420.2,137.7L1420.7,139.8L1421.2,139.8L1421.7,139.2L1422.2,137.6L1422.7,140.7L1423.2,140.2L1423.7,140.7L1424.2,139.2L1424.2,142.6L1423.7,144.2L1423.2,142.8L1422.7,143.7L1422.2,143.6L1421.7,145.6L1421.2,145.6L1420.7,143L1420.2,142.5L1419.7,143.3L1419.2,143L1418.7,143.4L1418.2,142.3L1417.7,142.9L1417.2,142L1416.7,142.5L1416.2,141.2L1415.7,141.6L1415.2,141.4L1414.7,141.9L1414.2,145L1413.7,142.2L1413.2,143.1L1412.7,141.7L1412.2,142.5L1411.7,142.2L1411.2,141.3L1410.7,142.7L1410.2,142.5L1409.7,146L1409.2,143.8L1408.7,143.4L1408.2,142.9L1407.7,147.5L1407.2,142L1406.7,141.5L1406.2,143.2L1405.7,142.1L1405.2,141.8L1404.7,141.4L1404.2,142.6L1403.7,142.2L1403.2,143.7L1402.7,142L1402.2,143.4L1401.7,143.3L1401.2,143.4L1400.7,144.5L1400.2,144.6L1399.7,142.5L1399.2,142.2L1398.7,144L1398.2,144.2L1397.7,144.7L1397.2,147L1396.7,141L1396.2,140.9L1395.7,141.5L1395.2,141.5L1394.7,142.6L1394.2,144.3L1393.7,142.5L1393.2,143.1L1392.7,143.9L1392.2,144.5L1391.7,147.8L1391.2,143.8L1390.7,141.7L1390.2,142.6L1389.7,142.7L1389.2,144.6L1388.7,143.9L1388.2,144.3L1387.7,144.5L1387.2,144.9L1386.7,144L1386.2,144.4L1385.7,144.5L1385.2,147.6L1384.7,142.3L1384.2,142.4L1383.7,142.8L1383.2,143.9L1382.7,143.8L1382.2,144L1381.7,146.2L1381.2,144.7L1380.7,142.8L1380.2,143.7L1379.7,145L1379.2,147.2L1378.7,144.3L1378.2,144L1377.7,147.3L1377.2,143.5L1376.7,143.3L1376.2,143L1375.7,144.3L1375.2,143.9L1374.7,144.2L1374.2,142.3L1373.7,144L1373.2,142.9L1372.7,142.9L1372.2,142.9L1371.7,143.4L1371.2,143.5L1370.7,145.9L1370.2,143L1369.7,142.7L1369.2,144.7L1368.7,143.8L1368.2,143.4L1367.7,143.6L1367.2,143.1L1366.7,144.6L1366.2,143L1365.7,142.2L1365.2,140.8L1364.7,143.3L1364.2,143.8L1363.7,143L1363.2,143.6L1362.7,141.6L1362.2,142.5L1361.7,145.6L1361.2,143.1L1360.7,142.5L1360.2,142.6L1359.7,143L1359.2,143.7L1358.7,147L1358.2,144.3L1357.7,145.1L1357.2,146.4L1356.7,145.4L1356.2,148.4L1355.7,144L1355.2,146.1L1354.7,143.6L1354.2,142.7L1353.7,143.4L1353.2,143.3L1352.7,142.5L1352.2,141.8L1351.7,145.7L1351.2,141.9L1350.7,142.2L1350.2,141L1349.7,141.3L1349.2,142.1L1348.7,142.9L1348.2,141.8L1347.7,145.1L1347.2,140.8L1346.7,139.3L1346.2,143.7L1345.7,143.1L1345.2,141.9L1344.7,143.6L1344.2,141.8L1343.7,139.9L1343.2,140.6L1342.7,141.4L1342.2,142.1L1341.7,141L1341.2,140L1340.7,140.6L1340.2,143.5L1339.7,142.2L1339.2,142.3L1338.7,144.4L1338.2,145.2L1337.7,144.8L1337.2,143.4L1336.7,144.3L1336.2,143.6L1335.7,143.4L1335.2,144.7L1334.7,142.9L1334.2,145L1333.7,146.7L1333.2,144L1332.7,144L1332.2,141.9L1331.7,141.8L1331.2,146.8L1330.7,141.4L1330.2,143L1329.7,142.5L1329.2,142.5L1328.7,143.7L1328.2,143.6L1327.7,144.1L1327.2,143.6L1326.7,144.5L1326.2,143.8L1325.7,143.1L1325.2,143.2L1324.7,144L1324.2,142.9L1323.7,143.8L1323.2,143.8L1322.7,144.7L1322.2,146.7L1321.7,147L1321.2,143L1320.7,144.3L1320.2,144.6L1319.7,145.5L1319.2,142.1L1318.7,144.3L1318.2,141.2L1317.7,143.7L1317.2,144.6L1316.7,143.4L1316.2,141.1L1315.7,140.8L1315.2,141.9L1314.7,141.9L1314.2,142.3L1313.7,142.8L1313.2,142.1L1312.7,143.4L1312.2,140.9L1311.7,142.7L1311.2,142L1310.7,142.7L1310.2,142.5L1309.7,142.9L1309.2,142.7L1308.7,145.9L1308.2,144.4L1307.7,146.8L1307.2,143.8L1306.7,142.5L1306.2,142.4L1305.7,143.6L1305.2,143.4L1304.7,144.5L1304.2,142.8L1303.7,143.6L1303.2,145.6L1302.7,144.8L1302.2,142.9L1301.7,144.2L1301.2,143.3L1300.7,143.5L1300.2,142.6L1299.7,142.6L1299.2,143.2L1298.7,142.6L1298.2,142.9L1297.7,143.9L1297.2,144.9L1296.7,143.6L1296.2,144.6L1295.7,143.5L1295.2,144.1L1294.7,141.8L1294.2,142.2L1293.7,143.3L1293.2,142.4L1292.7,141.2L1292.2,141.7L1291.7,146.4L1291.2,143.7L1290.7,142.7L1290.2,143.4L1289.7,145.5L1289.2,143.1L1288.7,143.3L1288.2,142.6L1287.7,144.2L1287.2,142.5L1286.7,146.1L1286.2,144.5L1285.7,142.2L1285.2,147L1284.7,143.3L1284.2,142.6L1283.7,146.2L1283.2,144.5L1282.7,144.3L1282.2,143.9L1281.7,146.6L1281.2,145L1280.7,143.4L1280.2,144L1279.7,144.5L1279.2,143.6L1278.7,144.6L1278.2,142.8L1277.7,143.7L1277.2,144.3L1276.7,144.5L1276.2,143.4L1275.7,144.1L1275.2,143.5L1274.7,143.9L1274.2,144.9L1273.7,143.8L1273.2,148.2L1272.7,144.2L1272.2,144.2L1271.7,142.4L1271.2,144.3L1270.7,142.8L1270.2,145.4L1269.7,143.3L1269.2,142.5L1268.7,143.1L1268.2,143.2L1267.7,142.8L1267.2,141.5L1266.7,141.7L1266.2,143.5L1265.7,142.6L1265.2,143.7L1264.7,144L1264.2,142.7L1263.7,144.5L1263.2,143.1L1262.7,142.9L1262.2,147L1261.7,144.1L1261.2,142.9L1260.7,142L1260.2,142.4L1259.7,143.7L1259.2,142.7L1258.7,145.2L1258.2,142.2L1257.7,142.4L1257.2,141.1L1256.7,142.4L1256.2,146.2L1255.7,143.7L1255.2,143.1L1254.7,143.4L1254.2,144.1L1253.7,143.3L1253.2,143.6L1252.7,143L1252.2,144.7L1251.7,142.9L1251.2,143.8L1250.7,144.2L1250.2,142.7L1249.7,143.3L1249.2,143L1248.7,143.1L1248.2,143.1L1247.7,143.5L1247.2,144.7L1246.7,142.2L1246.2,141.8L1245.7,143L1245.2,144.2L1244.7,144.2L1244.2,143.8L1243.7,143L1243.2,143.8L1242.7,142.2L1242.2,146.2L1241.7,143.7L1241.2,144.8L1240.7,145.3L1240.2,144.4L1239.7,143.7L1239.2,142.8L1238.7,143.2L1238.2,143.1L1237.7,146.8L1237.2,141.6L1236.7,141.7L1236.2,141.8L1235.7,140.8L1235.2,144.8L1234.7,143.6L1234.2,141.5L1233.7,143L1233.2,143.4L1232.7,142.4L1232.2,141.7L1231.7,141.7L1231.2,141.3L1230.7,142.3L1230.2,142.3L1229.7,141.8L1229.2,141.3L1228.7,142L1228.2,143L1227.7,141.5L1227.2,140.3L1226.7,140.8L1226.2,143.2L1225.7,142.8L1225.2,145.8L1224.7,143L1224.2,144.8L1223.7,143.2L1223.2,142.9L1222.7,143.3L1222.2,146.9L1221.7,142L1221.2,143.3L1220.7,144.1L1220.2,144.1L1219.7,140.8L1219.2,143L1218.7,142.1L1218.2,142.5L1217.7,141.9L1217.2,142.4L1216.7,142.8L1216.2,144L1215.7,142.7L1215.2,142.1L1214.7,142.8L1214.2,143.6L1213.7,142.7L1213.2,142.8L1212.7,142.9L1212.2,141.5L1211.7,142.8L1211.2,143.3L1210.7,145.9L1210.2,142L1209.7,141.8L1209.2,141.6L1208.7,142.3L1208.2,141.5L1207.7,142.6L1207.2,141.2L1206.7,144.1L1206.2,145.5L1205.7,142.8L1205.2,143.9L1204.7,144.1L1204.2,143.7L1203.7,143.6L1203.2,146.9L1202.7,142.2L1202.2,146.5L1201.7,141.7L1201.2,142.2L1200.7,141.7L1200.2,141.2L1199.7,141L1199.2,141.2L1198.7,142.2L1198.2,141.9L1197.7,142.6L1197.2,142.3L1196.7,142.7L1196.2,143.8L1195.7,145.3L1195.2,144.4L1194.7,145.6L1194.2,148.1L1193.7,142.8L1193.2,143.5L1192.7,142.3L1192.2,143.1L1191.7,142.6L1191.2,144.2L1190.7,146.6L1190.2,143.7L1189.7,143.5L1189.2,143.5L1188.7,144.8L1188.2,144.7L1187.7,142.3L1187.2,142.5L1186.7,145L1186.2,144.5L1185.7,144.5L1185.2,145.5L1184.7,148.2L1184.2,147L1183.7,148.5L1183.2,151.8L1182.7,150.1L1182.2,152.5L1181.7,155.9L1181.2,159.3L1180.7,164L1180.2,166.5L1179.7,166.5L1179.2,166.5L1178.7,166.5L1178.2,166.5L1177.7,166.5L1177.2,166.5L1176.7,166.5L1176.2,166.5L1175.7,166.5L1175.2,166.5L1174.7,135.6L1174.2,136.6L1173.7,136.6L1173.2,136.6L1172.7,136.6L1172.2,136.6L1171.7,136.6L1171.2,136.6L1170.7,136.6L1170.2,139.1L1169.7,142.9L1169.2,142.8L1168.7,142.4L1168.2,142.4L1167.7,143.5L1167.2,144L1166.7,143.3L1166.2,146L1165.7,144.1L1165.2,144.2L1164.7,143.9L1164.2,148.3L1163.7,145.2L1163.2,145.1L1162.7,146L1162.2,146.8L1161.7,147.4L1161.2,146.7L1160.7,148.1L1160.2,150.3L1159.7,150.6L1159.2,152.4L1158.7,155.3L1158.2,157.8L1157.7,162.4L1157.2,166.5L1156.7,166.5L1156.2,166.5L1155.7,166.5L1155.2,166.5L1154.7,166.5L1154.2,166.5L1153.7,166.5L1153.2,166.5L1152.7,166.5L1152.2,166.5L1151.7,135.6L1151.2,136.6L1150.7,136.6L1150.2,136.6L1149.7,136.6L1149.2,136.6L1148.7,136.6L1148.2,136.6L1147.7,136.6L1147.2,136.6L1146.7,137.5L1146.2,141.6L1145.7,140.5L1145.2,142.6L1144.7,142.3L1144.2,143.9L1143.7,146L1143.2,144.2L1142.7,143.6L1142.2,143.5L1141.7,142.9L1141.2,143.1L1140.7,143.4L1140.2,143.5L1139.7,145L1139.2,145.2L1138.7,145.3L1138.2,148.2L1137.7,146.2L1137.2,146.3L1136.7,147.3L1136.2,148.7L1135.7,150.1L1135.2,151.5L1134.7,153.9L1134.2,157.4L1133.7,161.5L1133.2,166.5L1132.7,166.5L1132.2,166.5L1131.7,166.5L1131.2,166.5L1130.7,166.5L1130.2,166.5L1129.7,166.5L1129.2,166.5L1128.7,166.5L1128.2,166.5L1127.7,166.5L1127.2,135.6L1126.7,136.6L1126.2,136.6L1125.7,136.6L1125.2,136.6L1124.7,136.6L1124.2,136.6L1123.7,136.6L1123.2,136.6L1122.7,139.2L1122.2,142.1L1121.7,141.6L1121.2,141.7L1120.7,143.5L1120.2,143.9L1119.7,144.8L1119.2,144.3L1118.7,142.8L1118.2,141.9L1117.7,145.4L1117.2,143.5L1116.7,142.6L1116.2,142.1L1115.7,142.3L1115.2,142.2L1114.7,142.3L1114.2,142.4L1113.7,141.6L1113.2,143.8L1112.7,142.5L1112.2,143.4L1111.7,142.6L1111.2,144.8L1110.7,145.2L1110.2,145.6L1109.7,145.9L1109.2,148L1108.7,149L1108.2,151.1L1107.7,152.4L1107.2,155.2L1106.7,158.3L1106.2,162.1L1105.7,166.5L1105.2,166.5L1104.7,166.5L1104.2,166.5L1103.7,166.5L1103.2,166.5L1102.7,166.5L1102.2,166.5L1101.7,166.5L1101.2,166.5L1100.7,166.5L1100.2,166.5L1099.7,135.6L1099.2,136.6L1098.7,136.6L1098.2,136.6L1097.7,136.6L1097.2,136.6L1096.7,136.6L1096.2,136.6L1095.7,136.6L1095.2,140.5L1094.7,143L1094.2,142.5L1093.7,142L1093.2,140.7L1092.7,141.2L1092.2,141.3L1091.7,142.6L1091.2,142.7L1090.7,142.9L1090.2,145.5L1089.7,146.1L1089.2,146.5L1088.7,145.5L1088.2,142.4L1087.7,142.6L1087.2,142.1L1086.7,142.6L1086.2,143.5L1085.7,143.1L1085.2,144.1L1084.7,142.6L1084.2,142.7L1083.7,144.1L1083.2,145.7L1082.7,144.4L1082.2,144.9L1081.7,146.8L1081.2,146.6L1080.7,147.7L1080.2,148.8L1079.7,150.8L1079.2,153.4L1078.7,157.1L1078.2,161.4L1077.7,166.3L1077.2,166.5L1076.7,166.5L1076.2,166.5L1075.7,166.5L1075.2,166.5L1074.7,166.5L1074.2,166.5L1073.7,166.5L1073.2,166.5L1072.7,166.5L1072.2,166.5L1071.7,135.6L1071.2,136.6L1070.7,136.6L1070.2,136.6L1069.7,136.6L1069.2,136.6L1068.7,136.6L1068.2,136.6L1067.7,136.6L1067.2,140.3L1066.7,142.8L1066.2,143.3Z" class="bl"/>
<path d="M1067,116.1V167" class="ml"/>
<path d="M1095,116.1V167" class="ml"/>
<path d="M1122.5,116.1V167" class="ml"/>
<path d="M1146.6,116.1V167" class="ml"/>
<path d="M1169.8,116.1V167" class="ml"/>
<path d="M1191.8,116.1V167" class="ml"/>
<path d="M1384.4,116.1V167" class="ml"/>
<path d="M840,190.9L840.5,192L841,190.7L841.5,190.4L842,191.4L842.5,191.4L843,190.4L843.5,190.6L844,191.5L844.5,191.4L845,191.8L845.5,191.9L846,191.8L846.5,192L847,191.6L847.5,191.6L848,192.1L848.5,192.5L849,190.4L849.5,193.2L850,192.3L850.5,190.9L851,191.7L851.5,190.8L852,192.1L852.5,192.7L853,191.5L853.5,191.4L854,192.3L854.5,191.1L855,193.8L855.5,193.6L856,192.6L856.5,193.6L857,192.4L857.5,190.9L858,189.1L858.5,190.2L859,191.4L859.5,191.5L860,190.9L860.5,190.9L861,191.7L861.5,192.4L862,193.2L862.5,191.6L863,192.3L863.5,192.3L864,188.4L864.5,191.9L865,192.5L865.5,190.3L866,193.1L866.5,193.2L867,189.3L867.5,191.3L868,193.6L868.5,192.9L869,194.1L869.5,192.8L870,193.3L870.5,191.7L871,192.2L871.5,191.9L872,193.3L872.5,191L873,192.2L873.5,190.6L874,191.1L874.5,192L875,191.3L875.5,191.2L876,190.2L876.5,190.6L877,191.7L877.5,191.4L878,191.3L878.5,192.5L879,192.2L879.5,192.9L880,192.7L880.5,192.7L881,192.7L881.5,191.7L882,190.7L882.5,188.6L883,191.1L883.5,191L884,191L884.5,191.7L885,190.3L885.5,191.7L886,191.2L886.5,191.2L887,190.8L887.5,191.8L888,190.4L888.5,191.4L889,190.9L889.5,191.6L890,192.3L890.5,191.5L891,192.3L891.5,191.1L892,191.9L892.5,191.2L893,191.2L893.5,190.7L894,188.8L894.5,191.5L895,191.5L895.5,191.2L896,190.4L896.5,191.7L897,191.7L897.5,191.3L898,191.4L898.5,192.7L899,191.9L899.5,192.1L900,192.8L900.5,192.9L901,191.8L901.5,189.9L902,191.8L902.5,192.9L903,192.3L903.5,192.2L904,191.8L904.5,190.1L905,188.9L905.5,191.2L906,190.5L906.5,190.3L907,190.3L907.5,190.6L908,189.7L908.5,189.3L909,191L909.5,190.9L910,187.8L910.5,190.2L911,190.8L911.5,191.5L912,189.9L912.5,190.3L913,190.7L913.5,190.6L914,190.5L914.5,191.6L915,191.6L915.5,191L916,191.2L916.5,191.9L917,190.4L917.5,190.9L918,190.5L918.5,191.6L919,190.9L919.5,190.8L920,190.5L920.5,191.1L921,191.4L921.5,192.6L922,191.7L922.5,191.5L923,191.1L923.5,191.6L924,192.1L924.5,192.6L925,193.8L925.5,193L926,192.6L926.5,192L927,189.6L927.5,191.8L928,190L928.5,192.2L929,191.8L929.5,192.1L930,192L930.5,189.7L931,192.5L931.5,192.2L932,190.9L932.5,192.1L933,191L933.5,189.9L934,189.9L934.5,190.2L935,190.4L935.5,192.3L936,188.1L936.5,185.9L937,186.7L937.5,189.6L938,189.2L938.5,189.7L939,188.2L939.5,189.6L940,191.3L940.5,190.6L941,190.7L941.5,193L942,193L942.5,192L943,191.5L943.5,190.5L944,191.6L944.5,191.1L945,187.4L945.5,193.6L946,191.3L946.5,190.6L947,191L947.5,191.4L948,190.8L948.5,190.1L949,189.9L949.5,189.9L950,191.1L950.5,190.5L951,190.1L951.5,190.3L952,190.6L952.5,191.4L953,192L953.5,190.7L954,189.5L954.5,188.9L955,192L955.5,191.9L956,191.8L956.5,190.7L957,191.4L957.5,192.3L958,192.8L958.5,192.6L959,191.8L959.5,192.2L960,192.8L960.5,191.3L961,192.4L961.5,191.1L962,191.1L962.5,190.7L963,190.6L963.5,190.7L964,190L964.5,190.3L965,190.4L965.5,190.6L966,190.6L966.5,192.6L967,192.2L967.5,192.7L968,192.9L968.5,190.2L969,190.3L969.5,189.5L970,190.8L970.5,191.6L971,192.5L971.5,192.2L972,191.1L972.5,190.3L973,191.7L973.5,188.4L974,190.1L974.5,189.6L975,189.6L975.5,187.6L976,189L976.5,190.9L977,188.9L977.5,192.3L978,190.7L978.5,191.4L979,191.5L979.5,191.9L980,190.6L980.5,190.1L981,190.2L981.5,189.9L982,190.1L982.5,192.3L983,189.5L983.5,192.1L984,190.2L984.5,192.3L985,190.7L985.5,188.6L986,189.6L986.5,187.1L987,190L987.5,189.9L988,189.9L988.5,190.8L989,191.1L989.5,191.5L990,192.8L990.5,191.2L991,192L991.5,192L992,190.8L992.5,191L993,191.5L993.5,190.9L994,191.3L994.5,190.9L995,191.5L995.5,192.8L996,192.5L996.5,192.4L997,191.3L997.5,187.9L998,190.9L998.5,190.7L999,190.7L999.5,190.5L1000,191.1L1000.5,192L1001,192.2L1001.5,191.3L1002,188.8L1002.5,191.5L1003,187.9L1003.5,190.4L1004,192.6L1004.5,192.1L1005,191.7L1005.5,191.8L1006,192.1L1006.5,191.7L1007,192L1007.5,191.2L1008,191.5L1008.5,191.2L1009,191.3L1009.5,190.8L1010,191.4L1010.5,191.6L1011,190L1011.5,188.3L1012,188.6L1012.5,190.1L1013,189.9L1013.5,189.5L1014,191.6L1014.5,191.9L1015,191.9L1015.5,193.5L1016,191.9L1016.5,190L1017,193.3L1017.5,192.5L1018,193L1018.5,193.3L1019,192.6L1019.5,193.4L1020,188.5L1020.5,190.4L1021,190.6L1021.5,191.3L1022,190.8L1022.5,191.5L1023,191.2L1023.5,192.4L1024,192.5L1024.5,192.9L1025,192.3L1025.5,193.1L1026,192.3L1026.5,191.7L1027,192.1L1027.5,190.4L1028,187.9L1028.5,190.3L1029,189.9L1029.5,188.8L1030,187.7L1030.5,191.6L1031,191.3L1031.5,191.1L1032,191.2L1032.5,186.9L1033,190.3L1033.5,193.2L1034,192.8L1034.5,192.7L1035,192.5L1035.5,193L1036,192.5L1036.5,192.9L1037,191.5L1037.5,192.1L1038,190.5L1038.5,191.5L1039,191.3L1039.5,191.3L1040,191.4L1040.5,188.7L1041,191.8L1041.5,192.5L1042,189.7L1042.5,191.8L1043,190.9L1043.5,192L1044,191.4L1044.5,188.4L1045,192L1045.5,192L1046,192L1046.5,191L1047,188.7L1047.5,190.7L1048,191.3L1048.5,191.4L1049,191.6L1049.5,191.3L1050,190.6L1050.5,190.5L1051,191.9L1051.5,193L1052,191.7L1052.5,190.9L1053,188.2L1053.5,191L1054,189.8L1054.5,190.3L1055,191.8L1055.5,190L1056,191.2L1056.5,190.9L1057,192L1057.5,188.9L1058,192L1058.5,191.3L1059,191.2L1059.5,189.2L1060,190.2L1060.5,190.2L1061,191.5L1061.5,190.8L1062,192.9L1062.5,189.4L1063,193.4L1063.5,192.8L1064,192.7L1064.5,192.4L1065,186.4L1065.5,191.2L1066,191.2L1066,195.3L1065.5,195.4L1065,196L1064.5,196L1064,197.2L1063.5,195.4L1063,197L1062.5,200.1L1062,196.2L1061.5,195.3L1061,194.8L1060.5,194.9L1060,195.1L1059.5,193.2L1059,193.8L1058.5,195.9L1058,196.9L1057.5,197.7L1057,195.7L1056.5,194.4L1056,194.5L1055.5,194.3L1055,194.5L1054.5,195.7L1054,194.6L1053.5,194.3L1053,194.5L1052.5,194.1L1052,195.7L1051.5,196.4L1051,195.3L1050.5,194.6L1050,196.1L1049.5,194.8L1049,196.3L1048.5,194.9L1048,197.6L1047.5,194.1L1047,197.9L1046.5,194.3L1046,195.9L1045.5,195.7L1045,196.4L1044.5,195.7L1044,196.2L1043.5,195.2L1043,194.9L1042.5,195.6L1042,196.6L1041.5,195.9L1041,196.1L1040.5,195L1040,196.8L1039.5,194.1L1039,194.2L1038.5,195.1L1038,198.3L1037.5,195.1L1037,194.8L1036.5,195.8L1036,198.2L1035.5,195.5L1035,196.7L1034.5,196.9L1034,196.5L1033.5,196.7L1033,194.9L1032.5,194.8L1032,194.2L1031.5,194.4L1031,197.2L1030.5,198L1030,196.1L1029.5,194.4L1029,196.3L1028.5,195.7L1028,195.3L1027.5,194.5L1027,197L1026.5,194.5L1026,198.4L1025.5,196.6L1025,198.2L1024.5,195.7L1024,195.7L1023.5,195.7L1023,195L1022.5,196.8L1022,194.5L1021.5,194.3L1021,194.2L1020.5,194.1L1020,195.7L1019.5,196.3L1019,196.7L1018.5,196.6L1018,197L1017.5,197.3L1017,199L1016.5,195.6L1016,194.7L1015.5,196L1015,196.1L1014.5,194.8L1014,194.5L1013.5,195.2L1013,193.2L1012.5,194.4L1012,193.2L1011.5,194.8L1011,192.6L1010.5,195.2L1010,193.8L1009.5,195.4L1009,195.7L1008.5,195.3L1008,194.8L1007.5,195.8L1007,196.3L1006.5,194.2L1006,195.7L1005.5,195.5L1005,199.8L1004.5,195.9L1004,195.4L1003.5,194.2L1003,196.5L1002.5,195.4L1002,194.5L1001.5,195L1001,194.2L1000.5,194.4L1000,198.7L999.5,193.7L999,195.2L998.5,193.5L998,193.3L997.5,193.3L997,194.3L996.5,195.1L996,195L995.5,195.3L995,195.3L994.5,194.5L994,194.6L993.5,194L993,195.9L992.5,194.2L992,194.4L991.5,196.3L991,196.1L990.5,196.9L990,195.6L989.5,195.1L989,194.2L988.5,194.5L988,194.3L987.5,193.6L987,194.9L986.5,194L986,193.1L985.5,194L985,193.6L984.5,194.7L984,195.3L983.5,195.8L983,195.5L982.5,195.4L982,195.5L981.5,194L981,194.3L980.5,194.5L980,194.3L979.5,195.4L979,194.1L978.5,194.8L978,195.5L977.5,196.1L977,196.4L976.5,194.3L976,195.1L975.5,194.5L975,196.7L974.5,195.1L974,194.5L973.5,197.5L973,197.5L972.5,193.7L972,194.3L971.5,195.6L971,194.7L970.5,194.4L970,194.3L969.5,193.8L969,193.5L968.5,195.9L968,197.9L967.5,195.7L967,195.3L966.5,196.6L966,194.5L965.5,194.1L965,194.2L964.5,193.9L964,193.6L963.5,194.7L963,194.8L962.5,194.2L962,194.6L961.5,195.4L961,196.5L960.5,195.2L960,195.4L959.5,196.7L959,196.4L958.5,195L958,196.6L957.5,195.4L957,194.6L956.5,195.4L956,195.7L955.5,195.4L955,195.8L954.5,194.7L954,193L953.5,195.1L953,195.4L952.5,195.5L952,194.8L951.5,193.2L951,193.8L950.5,195.2L950,194.3L949.5,195.2L949,192.6L948.5,194.5L948,194.1L947.5,195.4L947,195.7L946.5,195.4L946,195.4L945.5,198L945,195L944.5,195.2L944,195.1L943.5,195.2L943,195.1L942.5,196.3L942,195.5L941.5,196.6L941,195.4L940.5,195.1L940,193.6L939.5,195.2L939,193.3L938.5,194.3L938,192.9L937.5,193.3L937,193.6L936.5,192.4L936,193.6L935.5,195.1L935,195L934.5,195L934,194.9L933.5,192.4L933,194.9L932.5,196.9L932,197.7L931.5,194.6L931,196.4L930.5,195.6L930,194.9L929.5,195.8L929,196L928.5,194.9L928,198L927.5,196.1L927,199.3L926.5,195.7L926,196.8L925.5,195.9L925,197.6L924.5,196.4L924,196.2L923.5,195.7L923,195.1L922.5,194L922,196.9L921.5,198.6L921,194.5L920.5,194.4L920,193.9L919.5,194.1L919,194.1L918.5,195.1L918,194.2L917.5,193.9L917,193.9L916.5,194.3L916,198.1L915.5,194.1L915,194.8L914.5,194.4L914,194.5L913.5,194.6L913,195.9L912.5,194.6L912,194.2L911.5,197.4L911,194.6L910.5,193.3L910,193.1L909.5,195.2L909,195L908.5,193L908,193.6L907.5,196.6L907,195.1L906.5,194.7L906,194.7L905.5,194.6L905,193.8L904.5,194.4L904,195.3L903.5,195.5L903,196L902.5,196L902,197.2L901.5,195.9L901,197.2L900.5,198.2L900,200.1L899.5,196.6L899,195.7L898.5,195.8L898,196L897.5,195.9L897,194.2L896.5,197.6L896,194.7L895.5,197.4L895,195.6L894.5,194.8L894,195.3L893.5,195.8L893,195.3L892.5,196.1L892,194.8L891.5,198L891,195.6L890.5,195.2L890,195.4L889.5,194.9L889,195.5L888.5,195.1L888,194.9L887.5,197.4L887,194L886.5,195.3L886,193.8L885.5,193.9L885,194.4L884.5,194.1L884,195.2L883.5,196.9L883,193.4L882.5,194.2L882,195.3L881.5,194.8L881,195L880.5,196.5L880,196.4L879.5,195.5L879,195.7L878.5,195.6L878,196.9L877.5,194.3L877,193.9L876.5,194.2L876,193.9L875.5,197.8L875,194.8L874.5,195L874,194.4L873.5,195.6L873,197.2L872.5,197.1L872,195.7L871.5,196.4L871,194.4L870.5,196L870,195.8L869.5,195.8L869,197.1L868.5,196.6L868,196.8L867.5,195L867,195L866.5,196.3L866,197.7L865.5,197.1L865,197L864.5,195.8L864,197.6L863.5,195.4L863,195.8L862.5,197.1L862,197L861.5,196.8L861,195.1L860.5,194.5L860,199L859.5,195.3L859,194.4L858.5,195.7L858,194.2L857.5,195.5L857,195.5L856.5,196.7L856,196.4L855.5,197.6L855,197.4L854.5,196.1L854,196.3L853.5,195.1L853,195.4L852.5,196.3L852,195.4L851.5,195.8L851,196L850.5,196.9L850,195.2L849.5,196.2L849,199.2L848.5,198.7L848,196.8L847.5,194.8L847,196.2L846.5,195.5L846,196L845.5,196.9L845,196.1L844.5,194.3L844,195.1L843.5,194L843,194.2L842.5,195.1L842,196.4L841.5,194.5L841,196.9L840.5,196.4L840,194.4Z" class="kb"/>
<path d="M1066.2,189.5L1066.7,192.1L1067.2,192.9L1067.7,192.9L1068.2,192.9L1068.7,192.9L1069.2,192.9L1069.7,192.9L1070.2,192.9L1070.7,192.9L1071.2,192.9L1071.7,169.3L1072.2,169.3L1072.7,169.3L1073.2,218.1L1073.7,201L1074.2,199.9L1074.7,198.9L1075.2,198L1075.7,197.7L1076.2,196.3L1076.7,195.1L1077.2,195.1L1077.7,193.8L1078.2,193.7L1078.7,194.1L1079.2,194.9L1079.7,195L1080.2,190.3L1080.7,193L1081.2,192.5L1081.7,191.4L1082.2,192.3L1082.7,193.7L1083.2,189.8L1083.7,193L1084.2,193.4L1084.7,193.2L1085.2,188.2L1085.7,191.8L1086.2,192.7L1086.7,193.8L1087.2,189.8L1087.7,189.4L1088.2,192.2L1088.7,189.7L1089.2,191.9L1089.7,189.5L1090.2,192.5L1090.7,190.6L1091.2,192.2L1091.7,193L1092.2,192.4L1092.7,192.5L1093.2,191.8L1093.7,191.8L1094.2,191.8L1094.7,191.8L1095.2,192.9L1095.7,192.9L1096.2,192.9L1096.7,192.9L1097.2,192.9L1097.7,192.9L1098.2,192.9L1098.7,192.9L1099.2,192.9L1099.7,169.3L1100.2,169.3L1100.7,169.3L1101.2,218.1L1101.7,200.9L1102.2,199.8L1102.7,199.2L1103.2,198.5L1103.7,197.4L1104.2,196.6L1104.7,194L1105.2,194.4L1105.7,194L1106.2,194.7L1106.7,193.1L1107.2,193.8L1107.7,191.5L1108.2,195.6L1108.7,190.3L1109.2,192.8L1109.7,193.9L1110.2,193.1L1110.7,194.3L1111.2,193.3L1111.7,192.5L1112.2,193.3L1112.7,192.9L1113.2,193.8L1113.7,192.5L1114.2,190.5L1114.7,190.5L1115.2,192.1L1115.7,192L1116.2,192.3L1116.7,192.4L1117.2,192.1L1117.7,191.7L1118.2,192.2L1118.7,189.8L1119.2,187.5L1119.7,189.4L1120.2,190.5L1120.7,191L1121.2,191L1121.7,191.9L1122.2,189.9L1122.7,192.9L1123.2,192.9L1123.7,192.9L1124.2,192.9L1124.7,192.9L1125.2,192.9L1125.7,192.9L1126.2,192.9L1126.7,192.9L1127.2,169.3L1127.7,169.3L1128.2,169.3L1128.7,218.1L1129.2,200.8L1129.7,199.7L1130.2,198.5L1130.7,197.5L1131.2,197.3L1131.7,196.2L1132.2,195.6L1132.7,194.4L1133.2,193.8L1133.7,194.6L1134.2,191.6L1134.7,190.9L1135.2,194.1L1135.7,194.8L1136.2,193.6L1136.7,193.3L1137.2,193.4L1137.7,192.2L1138.2,190L1138.7,190.9L1139.2,192.5L1139.7,191.7L1140.2,190.5L1140.7,191.7L1141.2,191.8L1141.7,191.8L1142.2,188.8L1142.7,192.5L1143.2,192L1143.7,192.9L1144.2,191.5L1144.7,190.9L1145.2,192.8L1145.7,192.1L1146.2,192.2L1146.7,192.9L1147.2,192.9L1147.7,192.9L1148.2,192.9L1148.7,192.9L1149.2,192.9L1149.7,192.9L1150.2,192.9L1150.7,192.9L1151.2,192.9L1151.7,169.3L1152.2,192.9L1152.7,218.1L1153.2,201.1L1153.7,199.8L1154.2,197.6L1154.7,196.2L1155.2,196.6L1155.7,196L1156.2,194.5L1156.7,195.6L1157.2,194.7L1157.7,194L1158.2,193.7L1158.7,194.2L1159.2,193.4L1159.7,192.7L1160.2,192.2L1160.7,192.9L1161.2,192.5L1161.7,193.8L1162.2,192.3L1162.7,193.9L1163.2,194L1163.7,191.9L1164.2,191.6L1164.7,191.6L1165.2,190.6L1165.7,191.9L1166.2,188.8L1166.7,188L1167.2,191.3L1167.7,191L1168.2,191.6L1168.7,190.9L1169.2,188.4L1169.7,192L1170.2,192.9L1170.7,192.9L1171.2,192.9L1171.7,192.9L1172.2,192.9L1172.7,192.9L1173.2,192.9L1173.7,192.9L1174.2,192.9L1174.7,169.3L1175.2,192.9L1175.7,218.1L1176.2,201.6L1176.7,200.4L1177.2,199L1177.7,197.7L1178.2,195.6L1178.7,196.2L1179.2,195.1L1179.7,195L1180.2,195.3L1180.7,195.7L1181.2,193.8L1181.7,193.1L1182.2,193.5L1182.7,193.5L1183.2,193.7L1183.7,193.2L1184.2,192L1184.7,191.3L1185.2,191.8L1185.7,190.8L1186.2,191.1L1186.7,191.6L1187.2,190.7L1187.7,188.3L1188.2,192.2L1188.7,192.5L1189.2,189.8L1189.7,191L1190.2,191.3L1190.7,191.5L1191.2,191.1L1191.7,188.1L1192.2,190.7L1192.7,190.5L1193.2,190.4L1193.7,187.6L1194.2,192.1L1194.7,191.1L1195.2,192L1195.7,192.9L1196.2,191.3L1196.7,192.3L1197.2,192.1L1197.7,189.9L1198.2,191.9L1198.7,191.2L1199.2,191L1199.7,192.7L1200.2,191.1L1200.7,190.2L1201.2,191.9L1201.7,190.9L1202.2,191.9L1202.7,191.2L1203.2,191.5L1203.7,188.4L1204.2,190.5L1204.7,186.3L1205.2,186.8L1205.7,192.4L1206.2,192.5L1206.7,189.7L1207.2,190.9L1207.7,189.5L1208.2,189.9L1208.7,189.3L1209.2,188.8L1209.7,189.8L1210.2,190.2L1210.7,189.7L1211.2,189.5L1211.7,188L1212.2,188.7L1212.7,188.2L1213.2,190.3L1213.7,189.6L1214.2,191.5L1214.7,189L1215.2,192.5L1215.7,191.4L1216.2,193.8L1216.7,193L1217.2,191.3L1217.7,191.5L1218.2,188.2L1218.7,190.7L1219.2,192.4L1219.7,193.1L1220.2,191.7L1220.7,191.3L1221.2,192.5L1221.7,191.2L1222.2,188L1222.7,190.4L1223.2,190.8L1223.7,191.9L1224.2,191.2L1224.7,190.7L1225.2,191L1225.7,191.3L1226.2,192.6L1226.7,193.6L1227.2,194.1L1227.7,192.3L1228.2,189.4L1228.7,191.4L1229.2,190.8L1229.7,191.6L1230.2,191.4L1230.7,192.6L1231.2,190.1L1231.7,188.8L1232.2,191.1L1232.7,189.3L1233.2,187.9L1233.7,190.1L1234.2,190.2L1234.7,190.9L1235.2,191.2L1235.7,192.4L1236.2,191.5L1236.7,192.1L1237.2,191.7L1237.7,191.4L1238.2,191.6L1238.7,191.4L1239.2,190.5L1239.7,191.5L1240.2,190.1L1240.7,190.3L1241.2,190.1L1241.7,188.3L1242.2,187.7L1242.7,187.2L1243.2,191.9L1243.7,192L1244.2,192.7L1244.7,193.6L1245.2,194.4L1245.7,193.3L1246.2,189.7L1246.7,192.3L1247.2,191L1247.7,192.3L1248.2,192.3L1248.7,192.8L1249.2,192.7L1249.7,191.2L1250.2,190.3L1250.7,190.3L1251.2,189L1251.7,188.4L1252.2,190.8L1252.7,190.6L1253.2,190.3L1253.7,190.9L1254.2,191.6L1254.7,190.7L1255.2,190.4L1255.7,192L1256.2,191.6L1256.7,190.8L1257.2,191L1257.7,191.6L1258.2,191.3L1258.7,190.9L1259.2,191.2L1259.7,191.8L1260.2,191.4L1260.7,191.3L1261.2,192.4L1261.7,192.5L1262.2,191.9L1262.7,187L1263.2,189L1263.7,190.9L1264.2,190.6L1264.7,191.2L1265.2,189.2L1265.7,190.4L1266.2,189L1266.7,189.7L1267.2,190.5L1267.7,190.7L1268.2,189.5L1268.7,188.3L1269.2,192.9L1269.7,192.4L1270.2,191.7L1270.7,190.3L1271.2,189.1L1271.7,190.9L1272.2,192.2L1272.7,191.6L1273.2,191.1L1273.7,191.6L1274.2,191.4L1274.7,190.5L1275.2,190.6L1275.7,191.3L1276.2,191L1276.7,191.2L1277.2,190.2L1277.7,190.9L1278.2,191.6L1278.7,191L1279.2,189.2L1279.7,191.6L1280.2,190.8L1280.7,187.9L1281.2,187.8L1281.7,191.1L1282.2,191.9L1282.7,191.3L1283.2,192.8L1283.7,192.3L1284.2,191.7L1284.7,188.4L1285.2,192L1285.7,192.2L1286.2,192.3L1286.7,191.7L1287.2,187.5L1287.7,190.8L1288.2,191.7L1288.7,192.9L1289.2,192.7L1289.7,191.8L1290.2,190.1L1290.7,191.6L1291.2,191.7L1291.7,191.2L1292.2,188.7L1292.7,191.9L1293.2,191.5L1293.7,189.6L1294.2,189.3L1294.7,190.1L1295.2,192L1295.7,191.7L1296.2,192.4L1296.7,190.3L1297.2,191.1L1297.7,192L1298.2,191.7L1298.7,189L1299.2,190.5L1299.7,190.3L1300.2,192L1300.7,189.1L1301.2,190.6L1301.7,190.1L1302.2,190.8L1302.7,190.9L1303.2,192.2L1303.7,192.4L1304.2,191.7L1304.7,190.8L1305.2,190.2L1305.7,192L1306.2,190.1L1306.7,191.7L1307.2,190.8L1307.7,190.2L1308.2,190.4L1308.7,190L1309.2,192.3L1309.7,191.7L1310.2,191.8L1310.7,192.6L1311.2,192.8L1311.7,192.1L1312.2,191.5L1312.7,191.4L1313.2,191.2L1313.7,191.6L1314.2,189.6L1314.7,189.3L1315.2,190.4L1315.7,190.1L1316.2,190.6L1316.7,191.8L1317.2,192.2L1317.7,190.9L1318.2,191.1L1318.7,190.9L1319.2,191.8L1319.7,192.5L1320.2,191.3L1320.7,191.7L1321.2,191.6L1321.7,194.1L1322.2,193.6L1322.7,192.7L1323.2,192.5L1323.7,193.7L1324.2,192L1324.7,191.5L1325.2,192L1325.7,191.8L1326.2,191.9L1326.7,191.1L1327.2,188.8L1327.7,190.2L1328.2,190L1328.7,190.2L1329.2,190.4L1329.7,191.5L1330.2,190.6L1330.7,192.2L1331.2,193.4L1331.7,192.4L1332.2,191.8L1332.7,189.8L1333.2,189.5L1333.7,190.5L1334.2,190.2L1334.7,191.7L1335.2,190.8L1335.7,192.8L1336.2,191L1336.7,191.7L1337.2,191.9L1337.7,190.6L1338.2,190.9L1338.7,190.5L1339.2,191.4L1339.7,190.8L1340.2,190.6L1340.7,191.5L1341.2,192.8L1341.7,189.8L1342.2,192.7L1342.7,192.1L1343.2,191.5L1343.7,189L1344.2,189.9L1344.7,192.3L1345.2,190.5L1345.7,191.1L1346.2,191.1L1346.7,190.7L1347.2,190.7L1347.7,189.7L1348.2,191.6L1348.7,191.9L1349.2,190.9L1349.7,188.4L1350.2,190.8L1350.7,190.4L1351.2,191.4L1351.7,190.6L1352.2,191.8L1352.7,191.6L1353.2,190.9L1353.7,191.1L1354.2,190.2L1354.7,189.3L1355.2,190.8L1355.7,191.8L1356.2,191.7L1356.7,192.7L1357.2,193L1357.7,192.2L1358.2,192.8L1358.7,193L1359.2,192.5L1359.7,192.7L1360.2,191.4L1360.7,191.3L1361.2,189.7L1361.7,191.5L1362.2,192.1L1362.7,193L1363.2,193.1L1363.7,193.3L1364.2,192.5L1364.7,189.9L1365.2,191.6L1365.7,190.6L1366.2,191.5L1366.7,192.2L1367.2,192L1367.7,190.7L1368.2,188L1368.7,191.7L1369.2,191.1L1369.7,190.8L1370.2,191.9L1370.7,192.1L1371.2,191.8L1371.7,191.4L1372.2,192.1L1372.7,191.9L1373.2,192.1L1373.7,190.8L1374.2,193.2L1374.7,193.6L1375.2,190.8L1375.7,191.5L1376.2,192.2L1376.7,189.7L1377.2,188.6L1377.7,189.2L1378.2,192.4L1378.7,191.8L1379.2,191.3L1379.7,191.3L1380.2,189L1380.7,191.7L1381.2,190.9L1381.7,191.6L1382.2,191.8L1382.7,192.9L1383.2,193.2L1383.7,192L1384.2,192L1384.7,193.2L1385.2,192.6L1385.7,187.4L1386.2,191.3L1386.7,190L1387.2,191.3L1387.7,191.8L1388.2,191.2L1388.7,188.8L1389.2,190.9L1389.7,190.7L1390.2,190.7L1390.7,190.7L1391.2,190.5L1391.7,190.8L1392.2,190.2L1392.7,189.7L1393.2,190L1393.7,191L1394.2,191.9L1394.7,191.5L1395.2,193.1L1395.7,191.5L1396.2,192.2L1396.7,192.4L1397.2,191.6L1397.7,191.3L1398.2,191.8L1398.7,193L1399.2,192L1399.7,192.7L1400.2,191.6L1400.7,190.8L1401.2,192.5L1401.7,191.3L1402.2,192.1L1402.7,191.6L1403.2,192.7L1403.7,192.8L1404.2,193.1L1404.7,192L1405.2,192.8L1405.7,191.4L1406.2,191.6L1406.7,188.9L1407.2,191.3L1407.7,190.5L1408.2,192.4L1408.7,192.1L1409.2,192.4L1409.7,192.1L1410.2,191.3L1410.7,191.9L1411.2,191.9L1411.7,192.7L1412.2,192.6L1412.7,193.2L1413.2,194L1413.7,192.7L1414.2,192.7L1414.7,191.4L1415.2,193.5L1415.7,193.7L1416.2,193.5L1416.7,192.2L1417.2,192.7L1417.7,194.8L1418.2,194.1L1418.7,192.2L1419.2,192.4L1419.7,193.3L1420.2,192.4L1420.7,192.7L1421.2,192.3L1421.7,192.3L1422.2,192.6L1422.7,192.8L1423.2,192.2L1423.7,191.8L1424.2,190.7L1424.2,194.5L1423.7,195.1L1423.2,194.7L1422.7,195.3L1422.2,199.2L1421.7,195.8L1421.2,196L1420.7,196L1420.2,197.5L1419.7,196L1419.2,197L1418.7,196.3L1418.2,196.2L1417.7,196.8L1417.2,196.4L1416.7,199.6L1416.2,199.1L1415.7,197.6L1415.2,198.2L1414.7,196.4L1414.2,195.5L1413.7,197.1L1413.2,197.2L1412.7,198.9L1412.2,195.2L1411.7,200L1411.2,196L1410.7,195.2L1410.2,195.7L1409.7,197.5L1409.2,195.7L1408.7,195.6L1408.2,195.4L1407.7,197.2L1407.2,194.3L1406.7,195.1L1406.2,195L1405.7,195.1L1405.2,196.3L1404.7,199.5L1404.2,195.3L1403.7,195.7L1403.2,194.7L1402.7,194.6L1402.2,195L1401.7,195.1L1401.2,195.8L1400.7,194.1L1400.2,195.1L1399.7,199.4L1399.2,195.8L1398.7,195.4L1398.2,195.1L1397.7,195.3L1397.2,196L1396.7,195.4L1396.2,198L1395.7,197.8L1395.2,198.2L1394.7,195.8L1394.2,195.6L1393.7,194.9L1393.2,193.4L1392.7,193.1L1392.2,194.2L1391.7,194L1391.2,195.7L1390.7,193L1390.2,193.6L1389.7,194L1389.2,194.3L1388.7,193.5L1388.2,193.5L1387.7,195.1L1387.2,199.2L1386.7,195.2L1386.2,194.1L1385.7,194.8L1385.2,196.3L1384.7,196.3L1384.2,195.7L1383.7,195.9L1383.2,200.1L1382.7,200.1L1382.2,195L1381.7,195.9L1381.2,194.3L1380.7,194.3L1380.2,193.8L1379.7,195.6L1379.2,195.2L1378.7,195.5L1378.2,195.7L1377.7,196L1377.2,196.2L1376.7,194.2L1376.2,194.2L1375.7,194.4L1375.2,195.4L1374.7,197.1L1374.2,196.9L1373.7,194.9L1373.2,195L1372.7,194.8L1372.2,194.4L1371.7,194.5L1371.2,195.3L1370.7,195.2L1370.2,196.3L1369.7,194.4L1369.2,195.4L1368.7,197.1L1368.2,192.8L1367.7,194.6L1367.2,195.1L1366.7,194.4L1366.2,196.9L1365.7,196.3L1365.2,197.7L1364.7,195.7L1364.2,196.5L1363.7,197L1363.2,196.1L1362.7,195.8L1362.2,196.3L1361.7,196.1L1361.2,198.6L1360.7,194.4L1360.2,196.7L1359.7,195.1L1359.2,195.1L1358.7,198L1358.2,197.5L1357.7,196.7L1357.2,196.5L1356.7,196.1L1356.2,194.5L1355.7,194.9L1355.2,193.9L1354.7,195.2L1354.2,194L1353.7,194.7L1353.2,193.7L1352.7,196.1L1352.2,195.5L1351.7,194.8L1351.2,195.8L1350.7,194.4L1350.2,193.2L1349.7,194.7L1349.2,195.3L1348.7,195.4L1348.2,194.5L1347.7,196.6L1347.2,195.1L1346.7,194.1L1346.2,194.6L1345.7,193.6L1345.2,194.7L1344.7,195.6L1344.2,195.4L1343.7,195.6L1343.2,196L1342.7,195.7L1342.2,196L1341.7,196.5L1341.2,196.8L1340.7,195.9L1340.2,195.1L1339.7,194.1L1339.2,194.9L1338.7,194.6L1338.2,193.2L1337.7,194.1L1337.2,195.5L1336.7,194.9L1336.2,194.5L1335.7,196.3L1335.2,195.4L1334.7,194.9L1334.2,194.3L1333.7,194.1L1333.2,194.9L1332.7,193.5L1332.2,195L1331.7,196.3L1331.2,196.2L1330.7,195.6L1330.2,193.8L1329.7,194.4L1329.2,193.5L1328.7,193.3L1328.2,194.4L1327.7,197.4L1327.2,194L1326.7,193.5L1326.2,194.7L1325.7,195L1325.2,196L1324.7,198.4L1324.2,195.3L1323.7,197L1323.2,196.9L1322.7,195.4L1322.2,196.1L1321.7,197.9L1321.2,197.3L1320.7,195.9L1320.2,196.5L1319.7,197.8L1319.2,195.4L1318.7,195.7L1318.2,193.3L1317.7,195.2L1317.2,194.3L1316.7,194.4L1316.2,194.1L1315.7,197L1315.2,193.8L1314.7,192.5L1314.2,193.1L1313.7,194.2L1313.2,194.4L1312.7,195.5L1312.2,194.8L1311.7,194.9L1311.2,197.1L1310.7,196L1310.2,194.8L1309.7,195L1309.2,195.6L1308.7,194.7L1308.2,194.6L1307.7,194.4L1307.2,194.6L1306.7,193.9L1306.2,194.6L1305.7,196L1305.2,194.4L1304.7,194.4L1304.2,195.9L1303.7,196L1303.2,195.8L1302.7,194.6L1302.2,194.7L1301.7,195.2L1301.2,194.9L1300.7,195.3L1300.2,195.3L1299.7,193.4L1299.2,194.1L1298.7,194.6L1298.2,195L1297.7,194.6L1297.2,195.3L1296.7,193.1L1296.2,195.1L1295.7,198L1295.2,194.5L1294.7,195.2L1294.2,195.8L1293.7,195.3L1293.2,195.8L1292.7,194.4L1292.2,198L1291.7,195.2L1291.2,198.5L1290.7,194.8L1290.2,195.5L1289.7,196L1289.2,196L1288.7,197L1288.2,198.2L1287.7,194.9L1287.2,194.5L1286.7,194.6L1286.2,197.2L1285.7,195.6L1285.2,195.1L1284.7,194.5L1284.2,194.3L1283.7,195.7L1283.2,195.7L1282.7,197.4L1282.2,194.7L1281.7,194.8L1281.2,194.3L1280.7,193.6L1280.2,194.2L1279.7,194.5L1279.2,195.3L1278.7,195.1L1278.2,194.4L1277.7,197.2L1277.2,197.4L1276.7,195.1L1276.2,194.5L1275.7,194.6L1275.2,198L1274.7,193.1L1274.2,194.5L1273.7,194.5L1273.2,193.7L1272.7,195L1272.2,197.8L1271.7,197.5L1271.2,194.4L1270.7,194.9L1270.2,194.9L1269.7,194.9L1269.2,195.4L1268.7,194.9L1268.2,197.1L1267.7,196.1L1267.2,194L1266.7,194.6L1266.2,192.5L1265.7,194.1L1265.2,194L1264.7,194.2L1264.2,196.1L1263.7,193.5L1263.2,193.4L1262.7,193.7L1262.2,195.2L1261.7,196.6L1261.2,197.5L1260.7,195.4L1260.2,196.5L1259.7,193.8L1259.2,194.8L1258.7,195.2L1258.2,194.7L1257.7,195.8L1257.2,194.6L1256.7,194.4L1256.2,196L1255.7,196.2L1255.2,194.7L1254.7,197.6L1254.2,197.4L1253.7,194L1253.2,194.6L1252.7,194.1L1252.2,192.7L1251.7,194.2L1251.2,194L1250.7,194.6L1250.2,195.9L1249.7,195.2L1249.2,197.8L1248.7,195.8L1248.2,196.2L1247.7,194.7L1247.2,195.3L1246.7,195.4L1246.2,196.9L1245.7,196.5L1245.2,198.3L1244.7,197.1L1244.2,195.6L1243.7,195.7L1243.2,195L1242.7,196.1L1242.2,194.4L1241.7,194.9L1241.2,193.1L1240.7,194.6L1240.2,196.3L1239.7,195.8L1239.2,195.8L1238.7,194.8L1238.2,197.4L1237.7,194L1237.2,197.6L1236.7,195.5L1236.2,194.4L1235.7,195.1L1235.2,193.9L1234.7,197.3L1234.2,192.9L1233.7,193.5L1233.2,194.7L1232.7,193.4L1232.2,195L1231.7,197L1231.2,197L1230.7,195.5L1230.2,194.7L1229.7,195.2L1229.2,195L1228.7,197.7L1228.2,195.4L1227.7,195.6L1227.2,196.3L1226.7,198.9L1226.2,198.5L1225.7,195.1L1225.2,197.3L1224.7,194.3L1224.2,195.3L1223.7,194.6L1223.2,193.4L1222.7,195.7L1222.2,195.1L1221.7,194.8L1221.2,196L1220.7,195.2L1220.2,195.8L1219.7,197.9L1219.2,196.5L1218.7,196.1L1218.2,196L1217.7,195.5L1217.2,194L1216.7,195.5L1216.2,196.1L1215.7,195.4L1215.2,195.6L1214.7,194.8L1214.2,195.4L1213.7,194.8L1213.2,194.5L1212.7,192.2L1212.2,192L1211.7,191.6L1211.2,192L1210.7,192.7L1210.2,194.3L1209.7,193.3L1209.2,196.5L1208.7,193.1L1208.2,192.8L1207.7,192.6L1207.2,193.1L1206.7,194.3L1206.2,195.7L1205.7,194.6L1205.2,195.6L1204.7,193.2L1204.2,193.3L1203.7,193.2L1203.2,193.7L1202.7,195.4L1202.2,195.5L1201.7,194.9L1201.2,195L1200.7,193.4L1200.2,194.6L1199.7,196.7L1199.2,194.8L1198.7,197.1L1198.2,196L1197.7,197.3L1197.2,195.8L1196.7,196.1L1196.2,196.3L1195.7,195.9L1195.2,194.7L1194.7,195.4L1194.2,196L1193.7,195L1193.2,193.9L1192.7,195.2L1192.2,194.9L1191.7,193.6L1191.2,193.6L1190.7,195.2L1190.2,195.9L1189.7,194.7L1189.2,196.6L1188.7,198.5L1188.2,195.5L1187.7,197.5L1187.2,195.5L1186.7,196.4L1186.2,193.6L1185.7,197L1185.2,194.5L1184.7,194.4L1184.2,195.4L1183.7,197L1183.2,197.5L1182.7,196.9L1182.2,196.8L1181.7,197.9L1181.2,197.7L1180.7,199.6L1180.2,198.2L1179.7,197.8L1179.2,198L1178.7,198.1L1178.2,198.7L1177.7,200.3L1177.2,200.8L1176.7,201.6L1176.2,218.1L1175.7,218.1L1175.2,218.1L1174.7,192.9L1174.2,193.9L1173.7,193.9L1173.2,193.9L1172.7,193.9L1172.2,193.9L1171.7,193.9L1171.2,193.9L1170.7,193.9L1170.2,193.9L1169.7,195.1L1169.2,194.1L1168.7,194.3L1168.2,194.9L1167.7,193.7L1167.2,194.2L1166.7,194.2L1166.2,194.5L1165.7,195.3L1165.2,194.6L1164.7,195.5L1164.2,195.8L1163.7,196L1163.2,197.5L1162.7,196.3L1162.2,197L1161.7,196.9L1161.2,197L1160.7,196.8L1160.2,195.5L1159.7,196.1L1159.2,196.7L1158.7,196.8L1158.2,197.1L1157.7,197.5L1157.2,198.3L1156.7,197.7L1156.2,198.2L1155.7,199L1155.2,199.7L1154.7,198.9L1154.2,200.1L1153.7,201.1L1153.2,218.1L1152.7,218.1L1152.2,218.1L1151.7,192.9L1151.2,193.9L1150.7,193.9L1150.2,193.9L1149.7,193.9L1149.2,193.9L1148.7,193.9L1148.2,193.9L1147.7,193.9L1147.2,193.9L1146.7,193.9L1146.2,194.5L1145.7,196L1145.2,197.5L1144.7,195.6L1144.2,194.9L1143.7,196.8L1143.2,195.8L1142.7,198.5L1142.2,196.3L1141.7,197.3L1141.2,194.4L1140.7,195L1140.2,195L1139.7,196.4L1139.2,196.4L1138.7,196.7L1138.2,196.2L1137.7,199.9L1137.2,196.1L1136.7,195.7L1136.2,196.7L1135.7,198L1135.2,197.6L1134.7,198.3L1134.2,198.6L1133.7,197.2L1133.2,198.5L1132.7,196.6L1132.2,197.9L1131.7,198.8L1131.2,199.2L1130.7,199.3L1130.2,200.9L1129.7,200.9L1129.2,218.1L1128.7,218.1L1128.2,218.1L1127.7,169.3L1127.2,192.9L1126.7,193.9L1126.2,193.9L1125.7,193.9L1125.2,193.9L1124.7,193.9L1124.2,193.9L1123.7,193.9L1123.2,193.9L1122.7,193.9L1122.2,193.7L1121.7,194.9L1121.2,198.4L1120.7,194.9L1120.2,194.5L1119.7,192.8L1119.2,193L1118.7,194.6L1118.2,194.2L1117.7,195.2L1117.2,194.8L1116.7,195L1116.2,195.4L1115.7,195.4L1115.2,195.7L1114.7,194L1114.2,197.2L1113.7,195.7L1113.2,196.9L1112.7,195.9L1112.2,197.1L1111.7,195.9L1111.2,196.2L1110.7,197.8L1110.2,195.6L1109.7,197.6L1109.2,196.4L1108.7,196.8L1108.2,199.3L1107.7,198.4L1107.2,197.2L1106.7,196.4L1106.2,197.5L1105.7,199.7L1105.2,198.1L1104.7,199L1104.2,198.7L1103.7,199.3L1103.2,200.1L1102.7,201L1102.2,201.2L1101.7,218.1L1101.2,218.1L1100.7,218.1L1100.2,169.3L1099.7,192.9L1099.2,193.9L1098.7,193.9L1098.2,193.9L1097.7,193.9L1097.2,193.9L1096.7,193.9L1096.2,193.9L1095.7,193.9L1095.2,193.9L1094.7,195.9L1094.2,194.8L1093.7,196L1093.2,195.7L1092.7,196L1092.2,196.3L1091.7,197.8L1091.2,195.5L1090.7,196.1L1090.2,197.6L1089.7,195.9L1089.2,196.2L1088.7,195.1L1088.2,196.3L1087.7,196.1L1087.2,198.1L1086.7,197.9L1086.2,196.3L1085.7,195.2L1085.2,195.9L1084.7,197.3L1084.2,197L1083.7,196L1083.2,196.2L1082.7,196.1L1082.2,195.2L1081.7,195.5L1081.2,196.1L1080.7,196.9L1080.2,196.9L1079.7,198.5L1079.2,199L1078.7,197.5L1078.2,197.4L1077.7,197.7L1077.2,198.5L1076.7,198.7L1076.2,199.3L1075.7,199.2L1075.2,199.7L1074.7,200.4L1074.2,201.4L1073.7,218.1L1073.2,218.1L1072.7,218.1L1072.2,169.3L1071.7,192.9L1071.2,193.9L1070.7,193.9L1070.2,193.9L1069.7,193.9L1069.2,193.9L1068.7,193.9L1068.2,193.9L1067.7,193.9L1067.2,193.9L1066.7,194.9L1066.2,195.3Z" class="bl"/>
<path d="M1067,168.8V218.6" class="ml"/>
<path d="M1095,168.8V218.6" class="ml"/>
<path d="M1122.5,168.8V218.6" class="ml"/>
<path d="M1146.6,168.8V218.6" class="ml"/>
<path d="M1169.8,168.8V218.6" class="ml"/>
<path d="M1191.8,168.8V218.6" class="ml"/>
<path d="M1384.4,168.8V218.6" class="ml"/>
<rect x="1067" y="11.4" width="13.2" height="6.7" class="mb"/><text x="1069.5" y="17.5" class="mt">I x</text>
<rect x="1095" y="11.4" width="13.2" height="6.7" class="mb"/><text x="1097.5" y="17.5" class="mt">I x</text>
<rect x="1122.5" y="11.4" width="13.2" height="6.7" class="mb"/><text x="1125" y="17.5" class="mt">I x</text>
<rect x="1146.6" y="11.4" width="13.2" height="6.7" class="mb"/><text x="1149.1" y="17.5" class="mt">I x</text>
<rect x="1169.8" y="11.4" width="13.2" height="6.7" class="mb"/><text x="1172.3" y="17.5" class="mt">I x</text>
<rect x="1191.8" y="11.4" width="19.4" height="6.7" class="mb"/><text x="1193" y="17.5" class="mt">X I x</text>
<rect x="1384.4" y="11.4" width="13.7" height="6.7" class="mb"/><text x="1385.9" y="17.5" class="mt">LE</text>
<rect x="1066" y="63.7" width="11.2" height="6.7" class="mb"/><text x="1066.8" y="69.8" class="mt">A1</text>
<rect x="1082" y="63.7" width="12.8" height="6.7" class="mb"/><text x="1084.3" y="69.8" class="mt">I x</text>
<rect x="1095" y="63.7" width="12.8" height="6.7" class="mb"/><text x="1097.3" y="69.8" class="mt">I x</text>
<rect x="1122.5" y="63.7" width="12.8" height="6.7" class="mb"/><text x="1124.8" y="69.8" class="mt">I x</text>
<rect x="1146.6" y="63.7" width="12.8" height="6.7" class="mb"/><text x="1148.9" y="69.8" class="mt">I x</text>
<rect x="1169.8" y="63.7" width="12.8" height="6.7" class="mb"/><text x="1172.1" y="69.8" class="mt">I x</text>
<rect x="1191.8" y="63.7" width="19.4" height="6.7" class="mb"/><text x="1193" y="69.8" class="mt">X I x</text>
<rect x="1384.4" y="63.7" width="13.7" height="6.7" class="mb"/><text x="1385.9" y="69.8" class="mt">LE</text>
<rect x="1067" y="116.6" width="13.2" height="6.7" class="mb"/><text x="1069.5" y="122.7" class="mt">I x</text>
<rect x="1095" y="116.6" width="13.2" height="6.7" class="mb"/><text x="1097.5" y="122.7" class="mt">I x</text>
<rect x="1122.5" y="116.6" width="13.2" height="6.7" class="mb"/><text x="1125" y="122.7" class="mt">I x</text>
<rect x="1146.6" y="116.6" width="13.2" height="6.7" class="mb"/><text x="1149.1" y="122.7" class="mt">I x</text>
<rect x="1169.8" y="116.6" width="13.2" height="6.7" class="mb"/><text x="1172.3" y="122.7" class="mt">I x</text>
<rect x="1191.8" y="116.6" width="19.4" height="6.7" class="mb"/><text x="1193" y="122.7" class="mt">X I x</text>
<rect x="1384.4" y="116.6" width="13.7" height="6.7" class="mb"/><text x="1385.9" y="122.7" class="mt">LE</text>
<rect x="1067" y="169.3" width="13.2" height="6.7" class="mb"/><text x="1069.5" y="175.4" class="mt">I x</text>
<rect x="1095" y="169.3" width="13.2" height="6.7" class="mb"/><text x="1097.5" y="175.4" class="mt">I x</text>
<rect x="1122.5" y="169.3" width="13.2" height="6.7" class="mb"/><text x="1125" y="175.4" class="mt">I x</text>
<rect x="1146.6" y="169.3" width="13.2" height="6.7" class="mb"/><text x="1149.1" y="175.4" class="mt">I x</text>
<rect x="1169.8" y="169.3" width="13.2" height="6.7" class="mb"/><text x="1172.3" y="175.4" class="mt">I x</text>
<rect x="1191.8" y="169.3" width="19.4" height="6.7" class="mb"/><text x="1193" y="175.4" class="mt">X I x</text>
<rect x="1384.4" y="169.3" width="13.7" height="6.7" class="mb"/><text x="1385.9" y="175.4" class="mt">LE</text>
<path d="M811.5,62.30H1424.5" class="dv"/>
<path d="M811.5,115.20H1424.5" class="dv"/>
<path d="M811.5,167.90H1424.5" class="dv"/>
<path d="M811.45,233.5V12Q811.45,10.45 813,10.45H1424.5" fill="none" stroke="#5a5a5a" stroke-width="1.7"/>
<path d="M811,233.6H1424.5" stroke="#555" stroke-width="1.3"/>
<!-- axis labels -->
<text x="28.2" y="41.6" class="ch">LHip1 - LHip2</text>
<text x="28.2" y="93.4" class="ch">LHip3 - LHip4</text>
<text x="28.2" y="145.4" class="ch">RHip1 - RHip2</text>
<text x="28.2" y="197.4" class="ch">RHip3 - RHip4</text>
<text x="730" y="41.6" class="ch">LHip1 - LHip2</text>
<text x="730" y="94.2" class="ch">LHip3 - LHip4</text>
<text x="730" y="146.6" class="ch">RHip1 - RHip2</text>
<text x="730" y="199.2" class="ch">RHip3 - RHip4</text>
<text x="135.6" y="25.8" text-anchor="end" class="yl">50%</text>
<text x="135.6" y="37.5" text-anchor="end" class="yl">0%</text>
<text x="135.6" y="49.2" text-anchor="end" class="yl">-50%</text>
<text x="135.6" y="77.8" text-anchor="end" class="yl">50%</text>
<text x="135.6" y="89.5" text-anchor="end" class="yl">0%</text>
<text x="135.6" y="101.2" text-anchor="end" class="yl">-50%</text>
<text x="135.6" y="129.8" text-anchor="end" class="yl">50%</text>
<text x="135.6" y="141.5" text-anchor="end" class="yl">0%</text>
<text x="135.6" y="153.2" text-anchor="end" class="yl">-50%</text>
<text x="135.6" y="181.8" text-anchor="end" class="yl">50%</text>
<text x="135.6" y="193.5" text-anchor="end" class="yl">0%</text>
<text x="135.6" y="205.2" text-anchor="end" class="yl">-50%</text>
<text x="839.2" y="24.8" text-anchor="end" class="yl">50%</text>
<text x="839.2" y="37.1" text-anchor="end" class="yl">0%</text>
<text x="839.2" y="49.5" text-anchor="end" class="yl">-50%</text>
<text x="839.2" y="77.8" text-anchor="end" class="yl">50%</text>
<text x="839.2" y="89.9" text-anchor="end" class="yl">0%</text>
<text x="839.2" y="102" text-anchor="end" class="yl">-50%</text>
<text x="839.2" y="130.8" text-anchor="end" class="yl">50%</text>
<text x="839.2" y="142.7" text-anchor="end" class="yl">0%</text>
<text x="839.2" y="155.1" text-anchor="end" class="yl">-50%</text>
<text x="839.2" y="183.1" text-anchor="end" class="yl">50%</text>
<text x="839.2" y="195" text-anchor="end" class="yl">0%</text>
<text x="839.2" y="207.2" text-anchor="end" class="yl">-50%</text>
<path d="M189.4,216V222.5" stroke="#444" stroke-width="1"/>
<text x="189.4" y="230.2" text-anchor="middle" class="tl">20</text>
<path d="M295.2,216V222.5" stroke="#444" stroke-width="1"/>
<text x="295.2" y="230.2" text-anchor="middle" class="tl">30</text>
<path d="M400.6,216V222.5" stroke="#444" stroke-width="1"/>
<text x="400.6" y="230.2" text-anchor="middle" class="tl">40</text>
<path d="M506.3,216V222.5" stroke="#444" stroke-width="1"/>
<text x="506.3" y="230.2" text-anchor="middle" class="tl">50</text>
<path d="M611.8,216V222.5" stroke="#444" stroke-width="1"/>
<text x="611.8" y="230.2" text-anchor="middle" class="tl">60</text>
<path d="M850.4,218.3V224.6" stroke="#444" stroke-width="1"/>
<text x="850.4" y="232.6" text-anchor="middle" class="tl">10</text>
<path d="M957.3,218.3V224.6" stroke="#444" stroke-width="1"/>
<text x="957.3" y="232.6" text-anchor="middle" class="tl">20</text>
<path d="M1064,218.3V224.6" stroke="#444" stroke-width="1"/>
<text x="1064" y="232.6" text-anchor="middle" class="tl">30</text>
<path d="M1170.8,218.3V224.6" stroke="#444" stroke-width="1"/>
<text x="1170.8" y="232.6" text-anchor="middle" class="tl">40</text>
<path d="M1277.6,218.3V224.6" stroke="#444" stroke-width="1"/>
<text x="1277.6" y="232.6" text-anchor="middle" class="tl">50</text>
<!-- scrollbars -->
<rect x="136.3" y="232" width="576.2" height="10" fill="#f9f9f9"/>
<rect x="242.7" y="234.3" width="328.6" height="6" rx="3" fill="#8b8b8b"/>
<path d="M141.6,237.2L147,233.8V240.6Z" fill="#777"/>
<path d="M707.6,237.2L702,233.8V240.6Z" fill="#777"/>
<rect x="840" y="234.4" width="584.5" height="10.6" fill="#f9f9f9"/>
<rect x="911" y="237" width="328.8" height="6" rx="3" fill="#8b8b8b"/>
<path d="M845.5,240L851,236.5V243.5Z" fill="#777"/>
<path d="M1418.5,240L1413,236.5V243.5Z" fill="#777"/>
<!-- info + spectrogram icons -->
<g filter="url(#sh)"><circle cx="626.9" cy="238.3" r="8.4" fill="#7f9bbf"/></g>
<text x="626.9" y="243" text-anchor="middle" style="font-size:13px;font-weight:bold;fill:#f4f4f4;font-family:'Liberation Sans',sans-serif">i</text>
<g id="spec" transform="translate(669,232.4) scale(1.035) translate(-669,-232.4)">
<g filter="url(#sh)"><rect x="653.7" y="217.7" width="30.5" height="29.3" rx="2.2" fill="#555"/></g>
<g clip-path="url(#spc)"><rect x="654" y="218" width="30" height="29" fill="url(#sp)"/>
<g filter="url(#bl)">
<ellipse cx="658.5" cy="233" rx="4" ry="7" fill="#ecee28"/>
<ellipse cx="680.5" cy="234" rx="3.2" ry="7" fill="#ecee28"/>
<ellipse cx="670" cy="226" rx="6" ry="8" fill="#9ee878"/>
<ellipse cx="666.2" cy="227" rx="2.3" ry="10" fill="#4ee4c8"/>
<ellipse cx="674.3" cy="228" rx="2.6" ry="11" fill="#4ee4c8"/>
<ellipse cx="666" cy="222" rx="1.3" ry="2" fill="#38b8e8"/>
<ellipse cx="674" cy="220" rx="1.3" ry="1.6" fill="#38b8e8"/>
<ellipse cx="659" cy="241.5" rx="5.5" ry="3" fill="#fb9412"/>
<ellipse cx="679.5" cy="242" rx="4.5" ry="2.6" fill="#fb9412"/>
<ellipse cx="670" cy="241" rx="1.8" ry="4" fill="#fbb416"/>
<ellipse cx="659.5" cy="244.8" rx="5.8" ry="2.6" fill="#f2200c"/>
<ellipse cx="670" cy="244.6" rx="2.4" ry="2.8" fill="#f2200c"/>
<ellipse cx="679.5" cy="244.8" rx="5" ry="2.6" fill="#f2200c"/>
</g></g>
<rect x="654.2" y="218.2" width="29.5" height="28.3" rx="1.8" fill="none" stroke="#4e4e58" stroke-width="1.1"/>
</g>
<path d="M1397.5,250.2Q1411,262.5 1427,250.5" fill="none" stroke="#5e5e5e" stroke-width="2"/>
<g filter="url(#sh)"><circle cx="1337" cy="240.6" r="8.4" fill="#7f9bbf"/></g>
<text x="1337" y="245.3" text-anchor="middle" style="font-size:13px;font-weight:bold;fill:#f4f4f4;font-family:'Liberation Sans',sans-serif">i</text>
<g transform="translate(711.1,2.5)"><g transform="translate(669,232.4) scale(1.035) translate(-669,-232.4)">
<g filter="url(#sh)"><rect x="653.7" y="217.7" width="30.5" height="29.3" rx="2.2" fill="#555"/></g>
<g clip-path="url(#spc)"><rect x="654" y="218" width="30" height="29" fill="url(#sp)"/>
<g filter="url(#bl)">
<ellipse cx="658.5" cy="233" rx="4" ry="7" fill="#ecee28"/>
<ellipse cx="680.5" cy="234" rx="3.2" ry="7" fill="#ecee28"/>
<ellipse cx="670" cy="226" rx="6" ry="8" fill="#9ee878"/>
<ellipse cx="666.2" cy="227" rx="2.3" ry="10" fill="#4ee4c8"/>
<ellipse cx="674.3" cy="228" rx="2.6" ry="11" fill="#4ee4c8"/>
<ellipse cx="666" cy="222" rx="1.3" ry="2" fill="#38b8e8"/>
<ellipse cx="674" cy="220" rx="1.3" ry="1.6" fill="#38b8e8"/>
<ellipse cx="659" cy="241.5" rx="5.5" ry="3" fill="#fb9412"/>
<ellipse cx="679.5" cy="242" rx="4.5" ry="2.6" fill="#fb9412"/>
<ellipse cx="670" cy="241" rx="1.8" ry="4" fill="#fbb416"/>
<ellipse cx="659.5" cy="244.8" rx="5.8" ry="2.6" fill="#f2200c"/>
<ellipse cx="670" cy="244.6" rx="2.4" ry="2.8" fill="#f2200c"/>
<ellipse cx="679.5" cy="244.8" rx="5" ry="2.6" fill="#f2200c"/>
</g></g>
<rect x="654.2" y="218.2" width="29.5" height="28.3" rx="1.8" fill="none" stroke="#4e4e58" stroke-width="1.1"/>
</g></g>
<!-- band -->
<rect x="16.4" y="258" width="1412.4" height="38" fill="#3668ae"/>
<rect x="16.4" y="258" width="67.8" height="38" fill="#8499b8"/>
<rect x="1363" y="258" width="65.8" height="38" fill="#8499b8"/>
<rect x="16.4" y="296" width="67.8" height="230.5" fill="#808080"/>
<rect x="1362.8" y="296" width="66" height="230.4" fill="#3668ae"/>
<path d="M174.6,258.4Q180,257 182.2,251.4" fill="none" stroke="#3668ae" stroke-width="2.8"/>
<text x="81.5" y="270.3" text-anchor="end" class="ep">EPOCHS:</text>
<text x="81.5" y="286.3" text-anchor="end" class="ep">ALL</text>
<text x="1365.6" y="270.3" class="ep">EPOCHS:</text>
<text x="1365.6" y="286.3" class="ep">ALL</text>
<text x="159.6" y="279.6" class="dt">01 Nov 2024</text>
<!-- chart -->
<defs><linearGradient id="cg" x1="0" y1="0" x2="1" y2="0"><stop offset="0" stop-color="#f1f1f1"/><stop offset="0.3" stop-color="#fbfbfb"/><stop offset="0.6" stop-color="#fafafa"/><stop offset="1" stop-color="#eeeeee"/></linearGradient></defs>
<rect x="84.3" y="296" width="1278.5" height="230.5" fill="url(#cg)"/>
<path d="M106,320.8H1338.8" stroke="#dfe6f3" stroke-width="1"/>
<path d="M106,353.8H1338.8" stroke="#dfe6f3" stroke-width="1"/>
<path d="M106,386.8H1338.8" stroke="#dfe6f3" stroke-width="1"/>
<path d="M106,419.8H1338.8" stroke="#dfe6f3" stroke-width="1"/>
<path d="M106,452.8H1338.8" stroke="#dfe6f3" stroke-width="1"/>
<path d="M106,485.8H1338.8" stroke="#dfe6f3" stroke-width="1"/>
<path d="M106,518.8H1338.8" stroke="#dfe6f3" stroke-width="1"/>
<path d="M191.9,304V519" stroke="#d6d6da" stroke-width="1"/>
<path d="M312.5,304V519" stroke="#d6d6da" stroke-width="1"/>
<path d="M433.1,304V519" stroke="#d6d6da" stroke-width="1"/>
<path d="M553.7,304V519" stroke="#d6d6da" stroke-width="1"/>
<path d="M674.3,304V519" stroke="#d6d6da" stroke-width="1"/>
<path d="M794.9,304V519" stroke="#d6d6da" stroke-width="1"/>
<path d="M915.5,304V519" stroke="#d6d6da" stroke-width="1"/>
<path d="M1036.1,304V519" stroke="#d6d6da" stroke-width="1"/>
<path d="M1156.7,304V519" stroke="#d6d6da" stroke-width="1"/>
<path d="M1277.3,304V519" stroke="#d6d6da" stroke-width="1"/>
<rect x="106" y="303.8" width="25.1" height="215.2" fill="#717188"/>
<path d="M106,320.8H131.5" stroke="#e8e8ee" stroke-width="1"/>
<path d="M106,353.8H131.5" stroke="#e8e8ee" stroke-width="1"/>
<path d="M106,386.8H131.5" stroke="#e8e8ee" stroke-width="1"/>
<path d="M106,419.8H131.5" stroke="#e8e8ee" stroke-width="1"/>
<path d="M106,452.8H131.5" stroke="#e8e8ee" stroke-width="1"/>
<path d="M106,485.8H131.5" stroke="#e8e8ee" stroke-width="1"/>
<rect x="131.5" y="471" width="60.3" height="48.6" fill="#b8dfca" stroke="#52b380" stroke-width="1.5"/>
<rect x="191.8" y="518.3" width="60.3" height="1.3" fill="#b8dfca" stroke="#52b380" stroke-width="1.5"/>
<path d="M252.1,520H312.4" stroke="#58b685" stroke-width="1.3"/>
<rect x="312.4" y="518.8" width="60.3" height="0.8" fill="#b8dfca" stroke="#52b380" stroke-width="1.5"/>
<path d="M372.7,520H433" stroke="#58b685" stroke-width="1.3"/>
<path d="M433,520H493.3" stroke="#58b685" stroke-width="1.3"/>
<rect x="493.3" y="505" width="60.3" height="14.6" fill="#b8dfca" stroke="#52b380" stroke-width="1.5"/>
<rect x="553.6" y="492.3" width="60.3" height="27.3" fill="#b8dfca" stroke="#52b380" stroke-width="1.5"/>
<rect x="613.9" y="514" width="60.3" height="5.6" fill="#b8dfca" stroke="#52b380" stroke-width="1.5"/>
<rect x="674.2" y="511.4" width="60.3" height="8.2" fill="#b8dfca" stroke="#52b380" stroke-width="1.5"/>
<rect x="734.5" y="508.2" width="60.3" height="11.4" fill="#b8dfca" stroke="#52b380" stroke-width="1.5"/>
<rect x="794.8" y="510.5" width="60.3" height="9.1" fill="#b8dfca" stroke="#52b380" stroke-width="1.5"/>
<rect x="855.1" y="505" width="60.3" height="14.6" fill="#b8dfca" stroke="#52b380" stroke-width="1.5"/>
<rect x="915.4" y="507.7" width="60.3" height="11.9" fill="#b8dfca" stroke="#52b380" stroke-width="1.5"/>
<rect x="975.7" y="509.5" width="60.3" height="10.1" fill="#b8dfca" stroke="#52b380" stroke-width="1.5"/>
<rect x="1036" y="513.5" width="60.3" height="6.1" fill="#b8dfca" stroke="#52b380" stroke-width="1.5"/>
<rect x="1096.3" y="515.8" width="60.3" height="3.8" fill="#b8dfca" stroke="#52b380" stroke-width="1.5"/>
<rect x="1156.6" y="514.5" width="60.3" height="5.1" fill="#b8dfca" stroke="#52b380" stroke-width="1.5"/>
<rect x="1216.9" y="515.2" width="60.3" height="4.4" fill="#b8dfca" stroke="#52b380" stroke-width="1.5"/>
<rect x="1277.2" y="516.2" width="60.3" height="3.4" fill="#b8dfca" stroke="#52b380" stroke-width="1.5"/>
<path d="M106,518.6L131,518.4L500,518.2L560,516.8L620,515.6L800,514.6L1000,513.8L1200,513.2L1338.8,512.8" fill="none" stroke="#3b83e6" stroke-width="2"/>
<path d="M156.2,296V526.2H1362.8" fill="none" stroke="#3568ae" stroke-width="1.6"/>
<rect x="113.8" y="312.8" width="16" height="12.2" rx="1.5" fill="#717188" stroke="#cdcdd4" stroke-width="1"/>
<rect x="115.5" y="314.5" width="12.7" height="8.8" fill="#4fb989"/>
<rect x="113.8" y="331.2" width="16" height="12.2" rx="1.5" fill="#717188" stroke="#cdcdd4" stroke-width="1"/>
<rect x="115.5" y="332.9" width="12.7" height="8.8" fill="#717188"/>
<rect x="113.8" y="349.7" width="16" height="12.2" rx="1.5" fill="#717188" stroke="#cdcdd4" stroke-width="1"/>
<rect x="115.5" y="351.4" width="12.7" height="8.8" fill="#ababab"/>
<text x="135.2" y="323.3" class="lg">Long Episodes</text>
<text x="135.2" y="341.8" class="lg">No Data Available for Total Episodes, Therapies, and Long Episodes</text>
<text x="135.2" y="360.3" class="lg">No Data Available for Saturations and Magnet Swipes</text>
<text x="191.9" y="547.9" class="xl" text-anchor="middle">Nov 02</text>
<text x="312.5" y="547.9" class="xl" text-anchor="middle">Nov 04</text>
<text x="433.1" y="547.9" class="xl" text-anchor="middle">Nov 06</text>
<text x="553.7" y="547.9" class="xl" text-anchor="middle">Nov 08</text>
<text x="674.3" y="547.9" class="xl" text-anchor="middle">Nov 10</text>
<text x="794.9" y="547.9" class="xl" text-anchor="middle">Nov 12</text>
<text x="915.5" y="547.9" class="xl" text-anchor="middle">Nov 14</text>
<text x="1036.1" y="547.9" class="xl" text-anchor="middle">Nov 16</text>
<text x="1156.7" y="547.9" class="xl" text-anchor="middle">Nov 18</text>
<text x="1277.3" y="547.9" class="xl" text-anchor="middle">Nov 20</text>
<path d="M156.2,258V296" stroke="#d4d4d4" stroke-width="1.6"/>
<text x="1369.8" y="325.6" class="ax">300</text>
<text x="1369.8" y="358.7" class="ax">250</text>
<text x="1369.8" y="391.8" class="ax">200</text>
<text x="1369.8" y="424.9" class="ax">150</text>
<text x="1369.8" y="458" class="ax">100</text>
<text x="1369.8" y="491.1" class="ax">50</text>
<text x="1369.8" y="524.2" class="ax">0</text>
<text transform="translate(32.6,520.5) rotate(-90)" class="ne">NEUROSTIM EVENTS</text>
<text transform="translate(1423.6,520.5) rotate(-90)" class="ne">NEUROSTIM EVENTS</text>
<text x="21.2" y="237.4" class="big" textLength="24.4" lengthAdjust="spacingAndGlyphs">A</text>
<text x="731.6" y="237.4" class="big" textLength="22.4" lengthAdjust="spacingAndGlyphs">B</text>
<text x="24.8" y="542.2" class="big" textLength="22" lengthAdjust="spacingAndGlyphs">C</text>
<!-- arrow -->
<path d="M126.6,530.6L152,545.4H138.8V558H114.4V545.4H101.8Z" fill="#fe0000" stroke="#1c2a58" stroke-width="1.2" stroke-linejoin="miter"/>
</svg>
</body></html>
